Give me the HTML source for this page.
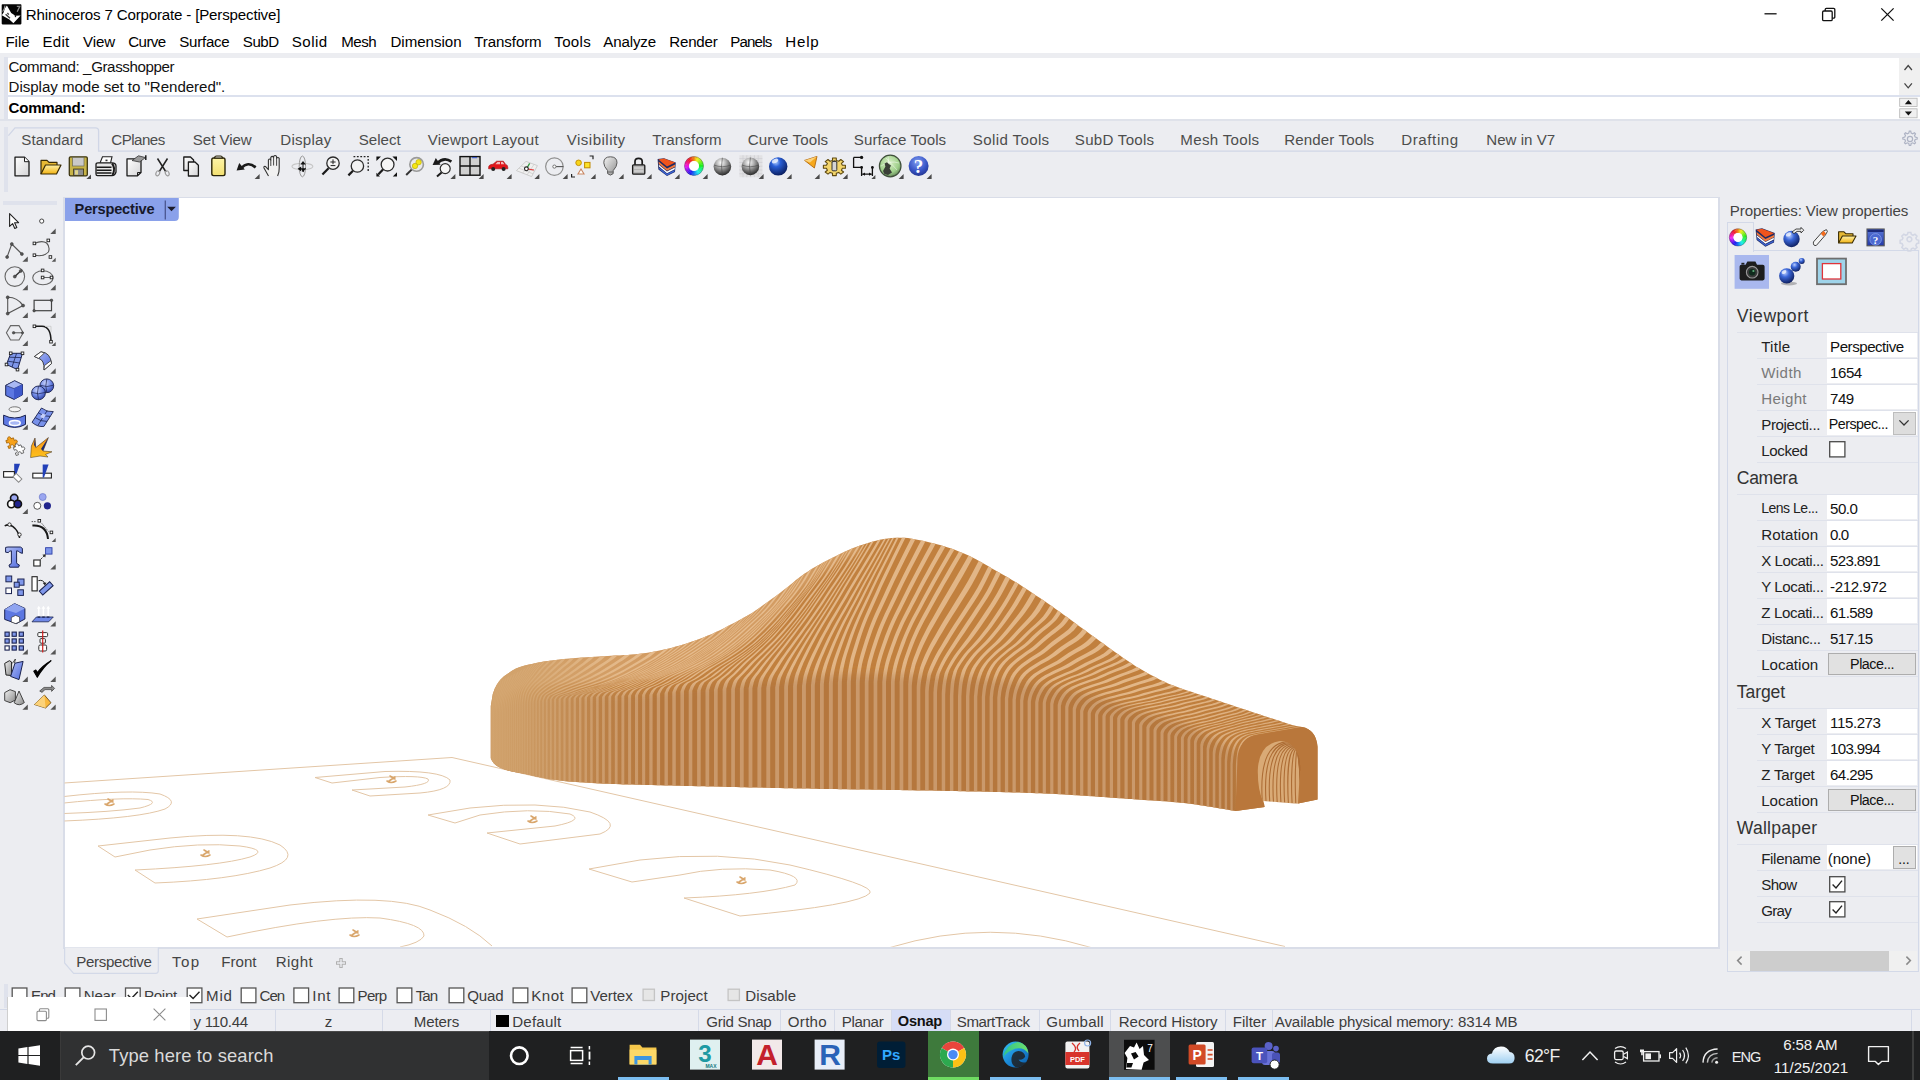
<!DOCTYPE html>
<html lang="en"><head><meta charset="utf-8"><title>Rhinoceros 7 Corporate - [Perspective]</title>
<style>
html,body{margin:0;padding:0;}
body{width:1920px;height:1080px;overflow:hidden;background:#ecedf1;font-family:"Liberation Sans",sans-serif;}
#root{position:relative;width:1920px;height:1080px;overflow:hidden;background:#ecedf1;}
.t{position:absolute;white-space:pre;display:block;}
.b{position:absolute;box-sizing:border-box;}
svg{position:absolute;overflow:visible;}

</style></head>
<body>
<div id="root">
<!-- part_top -->
<div class="b" style="left:0.0px;top:0.0px;width:1920.0px;height:52.5px;background:#fff;"></div>
<svg style="left:0;top:0" width="24" height="28" viewBox="0 0 24 28">
<rect x="1.7" y="4.2" width="19.7" height="20.2" rx="0.8" fill="#050505"/>
<path d="M6.9 5.4 L11.2 13 L15.4 15.8 L20.6 15.4 L13.4 23.2 L9.4 19.6 L1.8 15.2 L3.6 12.4 L4.8 8.6 Z" fill="#fff"/>
<path d="M5 5.6 Q4.6 9.4 2.6 11.6" fill="none" stroke="#9a9a9a" stroke-width="1.1"/>
<path d="M5.600 14.200 L10 18.200 M7.400 13 L8.800 14.600" fill="none" stroke="#3a3a3a" stroke-width="1.300"/>
<path d="M16.800 6.400 H19.800 L17.200 11.800" fill="none" stroke="#8a8a8a" stroke-width="1.300"/>
<path d="M14.600 14.600 L16.400 16.200 L15 17.400" fill="#050505"/></svg>
<span class="t" style="left:25.8px;top:7.4px;font-size:15.10px;line-height:15.10px;letter-spacing:-0.171px;color:#000;">Rhinoceros 7 Corporate - [Perspective]</span>
<svg style="left:1755px;top:0" width="165" height="30" viewBox="0 0 165 30" fill="none" stroke="#111" stroke-width="1.3">
<path d="M9.5 13.8 H21.6"/>
<rect x="67.6" y="11" width="9.6" height="9.6" rx="1.2"/>
<path d="M70.2 11 V9.6 a1.2 1.2 0 0 1 1.2 -1.2 H78.6 a1.2 1.2 0 0 1 1.2 1.2 V17 a1.2 1.2 0 0 1 -1.2 1.2 H77.2"/>
<path d="M126.3 8.4 L138.6 20.6 M138.6 8.4 L126.3 20.6"/>
</svg>
<span class="t" style="left:5.4px;top:34.4px;font-size:15.10px;line-height:15.10px;letter-spacing:-0.011px;color:#000;">File</span>
<span class="t" style="left:42.6px;top:34.4px;font-size:15.10px;line-height:15.10px;letter-spacing:0.193px;color:#000;">Edit</span>
<span class="t" style="left:83.0px;top:34.4px;font-size:15.10px;line-height:15.10px;letter-spacing:-0.086px;color:#000;">View</span>
<span class="t" style="left:128.3px;top:34.4px;font-size:15.10px;line-height:15.10px;letter-spacing:-0.595px;color:#000;">Curve</span>
<span class="t" style="left:179.3px;top:34.4px;font-size:15.10px;line-height:15.10px;letter-spacing:-0.273px;color:#000;">Surface</span>
<span class="t" style="left:242.8px;top:34.4px;font-size:15.10px;line-height:15.10px;letter-spacing:-0.458px;color:#000;">SubD</span>
<span class="t" style="left:291.8px;top:34.4px;font-size:15.10px;line-height:15.10px;letter-spacing:0.455px;color:#000;">Solid</span>
<span class="t" style="left:341.2px;top:34.4px;font-size:15.10px;line-height:15.10px;letter-spacing:-0.475px;color:#000;">Mesh</span>
<span class="t" style="left:390.4px;top:34.4px;font-size:15.10px;line-height:15.10px;letter-spacing:-0.005px;color:#000;">Dimension</span>
<span class="t" style="left:474.3px;top:34.4px;font-size:15.10px;line-height:15.10px;letter-spacing:-0.105px;color:#000;">Transform</span>
<span class="t" style="left:554.3px;top:34.4px;font-size:15.10px;line-height:15.10px;letter-spacing:0.287px;color:#000;">Tools</span>
<span class="t" style="left:603.3px;top:34.4px;font-size:15.10px;line-height:15.10px;letter-spacing:-0.137px;color:#000;">Analyze</span>
<span class="t" style="left:669.3px;top:34.4px;font-size:15.10px;line-height:15.10px;letter-spacing:-0.225px;color:#000;">Render</span>
<span class="t" style="left:730.3px;top:34.4px;font-size:15.10px;line-height:15.10px;letter-spacing:-0.854px;color:#000;">Panels</span>
<span class="t" style="left:785.3px;top:34.4px;font-size:15.10px;line-height:15.10px;letter-spacing:0.781px;color:#000;">Help</span>
<div class="b" style="left:3.5px;top:56.5px;width:4.0px;height:63.5px;background:#dfe2ec;"></div>
<div class="b" style="left:7.5px;top:57.5px;width:1891.5px;height:37.8px;background:#fff;"></div>
<div class="b" style="left:7.5px;top:95.2px;width:1912.5px;height:1.4px;background:#dce1ee;"></div>
<div class="b" style="left:7.5px;top:96.6px;width:1891.5px;height:22.6px;background:#fff;"></div>
<div class="b" style="left:1899.0px;top:57.5px;width:21.0px;height:37.8px;background:#f0f0f0;"></div>
<div class="b" style="left:1899.0px;top:96.6px;width:21.0px;height:22.6px;background:#fff;"></div>
<svg style="left:1899px;top:57px" width="21" height="63" viewBox="0 0 21 63" fill="none">
<path d="M5.5 13 L9.2 8.6 L12.9 13 M5.5 26.4 L9.2 30.8 L12.9 26.4" stroke="#444" stroke-width="1.3"/>
<rect x="0.7" y="41.2" width="17.4" height="8.2" fill="#f0f0f0" stroke="#b5b5b5" stroke-width="0.8"/>
<rect x="0.7" y="51.8" width="17.4" height="9" fill="#f0f0f0" stroke="#b5b5b5" stroke-width="0.8"/>
<path d="M5.8 47.2 L9.4 43 L13 47.2 Z M5.8 54.4 L13 54.4 L9.4 58.6 Z" fill="#111"/>
</svg>
<div class="b" style="left:0.0px;top:119.2px;width:1920.0px;height:2.2px;background:#dfe2ea;"></div>
<span class="t" style="left:8.6px;top:58.6px;font-size:15.10px;line-height:15.10px;letter-spacing:-0.387px;color:#111;">Command: _Grasshopper</span>
<span class="t" style="left:8.6px;top:78.8px;font-size:15.10px;line-height:15.10px;letter-spacing:-0.041px;color:#111;">Display mode set to "Rendered".</span>
<span class="t" style="left:8.6px;top:99.5px;font-size:15.10px;line-height:15.10px;letter-spacing:-0.279px;color:#000;font-weight:bold;">Command:</span>
<div class="b" style="left:3.5px;top:127.0px;width:4.0px;height:65.0px;background:#dfe2ec;"></div>
<svg style="left:0;top:120px" width="1920" height="36" viewBox="0 120 1920 36" fill="none">
<path d="M8.4 135.6 L15 127.9 H95.4 Q98.6 127.9 98.6 131 V151.1 H1920" stroke="#d0d6e6" stroke-width="1.3"/></svg>
<span class="t" style="left:21.3px;top:132.4px;font-size:15.10px;line-height:15.10px;letter-spacing:0.088px;color:#4d4d4d;">Standard</span>
<span class="t" style="left:111.3px;top:132.4px;font-size:15.10px;line-height:15.10px;letter-spacing:-0.529px;color:#4d4d4d;">CPlanes</span>
<span class="t" style="left:192.8px;top:132.4px;font-size:15.10px;line-height:15.10px;letter-spacing:-0.060px;color:#4d4d4d;">Set View</span>
<span class="t" style="left:280.3px;top:132.4px;font-size:15.10px;line-height:15.10px;letter-spacing:0.231px;color:#4d4d4d;">Display</span>
<span class="t" style="left:358.8px;top:132.4px;font-size:15.10px;line-height:15.10px;letter-spacing:-0.014px;color:#4d4d4d;">Select</span>
<span class="t" style="left:427.8px;top:132.4px;font-size:15.10px;line-height:15.10px;letter-spacing:0.206px;color:#4d4d4d;">Viewport Layout</span>
<span class="t" style="left:566.8px;top:132.4px;font-size:15.10px;line-height:15.10px;letter-spacing:0.459px;color:#4d4d4d;">Visibility</span>
<span class="t" style="left:652.3px;top:132.4px;font-size:15.10px;line-height:15.10px;letter-spacing:0.145px;color:#4d4d4d;">Transform</span>
<span class="t" style="left:747.8px;top:132.4px;font-size:15.10px;line-height:15.10px;letter-spacing:0.095px;color:#4d4d4d;">Curve Tools</span>
<span class="t" style="left:853.8px;top:132.4px;font-size:15.10px;line-height:15.10px;letter-spacing:0.099px;color:#4d4d4d;">Surface Tools</span>
<span class="t" style="left:972.8px;top:132.4px;font-size:15.10px;line-height:15.10px;letter-spacing:0.365px;color:#4d4d4d;">Solid Tools</span>
<span class="t" style="left:1074.8px;top:132.4px;font-size:15.10px;line-height:15.10px;letter-spacing:0.273px;color:#4d4d4d;">SubD Tools</span>
<span class="t" style="left:1180.3px;top:132.4px;font-size:15.10px;line-height:15.10px;letter-spacing:0.311px;color:#4d4d4d;">Mesh Tools</span>
<span class="t" style="left:1284.3px;top:132.4px;font-size:15.10px;line-height:15.10px;letter-spacing:0.109px;color:#4d4d4d;">Render Tools</span>
<span class="t" style="left:1401.3px;top:132.4px;font-size:15.10px;line-height:15.10px;letter-spacing:0.575px;color:#4d4d4d;">Drafting</span>
<span class="t" style="left:1486.3px;top:132.4px;font-size:15.10px;line-height:15.10px;letter-spacing:0.010px;color:#4d4d4d;">New in V7</span>
<svg style="left:1901px;top:130px" width="18" height="18" viewBox="0 0 18 18" fill="none" stroke="#aeb3c4" stroke-width="1.2">
<circle cx="9" cy="9" r="2.6"/><path d="M9 1.8 l1.4 0 l.5 2 l1.5 .7 l1.8 -1 l1 1 l-1 1.8 l.7 1.5 l2 .5 l0 1.4 l-2 .5 l-.7 1.5 l1 1.8 l-1 1 l-1.8 -1 l-1.5 .7 l-.5 2 l-1.4 0 l-.5 -2 l-1.5 -.7 l-1.8 1 l-1 -1 l1 -1.8 l-.7 -1.5 l-2 -.5 l0 -1.4 l2 -.5 l.7 -1.5 l-1 -1.8 l1 -1 l1.8 1 l1.5 -.7 z" transform="translate(-0.7 -0.7)"/></svg>
<svg style="left:0;top:0" width="960" height="196" viewBox="0 0 960 196">
<defs>
<linearGradient id="gPaper" x1="0" y1="0" x2="1" y2="1"><stop offset="0" stop-color="#ffffff"/><stop offset="1" stop-color="#d4d4d6"/></linearGradient>
<linearGradient id="gFold" x1="0" y1="0" x2="0" y2="1"><stop offset="0" stop-color="#fff2a8"/><stop offset="1" stop-color="#f2b211"/></linearGradient>
<linearGradient id="gNote" x1="0" y1="0" x2="0" y2="1"><stop offset="0" stop-color="#fdf4a6"/><stop offset="1" stop-color="#f3e071"/></linearGradient>
<radialGradient id="gGray" cx="0.42" cy="0.28" r="0.72"><stop offset="0" stop-color="#ffffff"/><stop offset="0.35" stop-color="#b9b9b9"/><stop offset="0.8" stop-color="#555"/><stop offset="1" stop-color="#2a2a2a"/></radialGradient>
<radialGradient id="gBlue" cx="0.38" cy="0.28" r="0.8"><stop offset="0" stop-color="#a9c8ff"/><stop offset="0.3" stop-color="#2a5fd6"/><stop offset="1" stop-color="#06154f"/></radialGradient>
<radialGradient id="gGreen" cx="0.45" cy="0.35" r="0.75"><stop offset="0" stop-color="#d9f0c8"/><stop offset="0.6" stop-color="#9fcf8a"/><stop offset="1" stop-color="#4c6b45"/></radialGradient>
<radialGradient id="gHelp" cx="0.45" cy="0.3" r="0.8"><stop offset="0" stop-color="#7f9df0"/><stop offset="0.55" stop-color="#3b57c8"/><stop offset="1" stop-color="#1b2a80"/></radialGradient>
<linearGradient id="gBulb" x1="0" y1="0" x2="1" y2="1"><stop offset="0" stop-color="#f4f4f4"/><stop offset="1" stop-color="#8d8d8d"/></linearGradient>
</defs>
<path d="M15 157.2 H24.5 L29 161.7 V175.8 H15 Z" fill="url(#gPaper)" stroke="#1a1a1a" stroke-width="1.3" stroke-linejoin="round"/><path d="M24.5 157.2 V161.7 H29" fill="#fff" stroke="#1a1a1a" stroke-width="1"/>
<path d="M41 174 V160.4 H47 L49 162.4 H57 V165" fill="#e7b934" stroke="#3a2c05" stroke-width="1.2" stroke-linejoin="round"/><path d="M41 174 L45.5 165 H61 L56.5 174 Z" fill="url(#gFold)" stroke="#3a2c05" stroke-width="1.2" stroke-linejoin="round"/>
<rect x="69.3" y="156.8" width="18" height="19" rx="1.2" fill="#c8b447" stroke="#3d3612" stroke-width="1.3"/><rect x="72.6" y="157.6" width="11.4" height="8.4" fill="#c9c9c9" stroke="#6b6b5a" stroke-width="0.7"/><rect x="73.6" y="169" width="10" height="6.4" fill="#8f8f8f" stroke="#3d3612" stroke-width="0.8"/><rect x="75" y="170.2" width="3" height="4.4" fill="#e0d58a"/>
<path d="M91.0 179.0 L86.4 179.0 L91.0 174.4 Z" fill="#4b4b4b"/>
<path d="M100 163 L102.5 156.8 H112 L110.5 163" fill="#fff" stroke="#222" stroke-width="1.1"/><path d="M96 164.5 Q96 162.8 98 162.8 H112 Q116 163 116 166 V172 Q115 175.6 112 175.6 H97.5 Q96 175.6 96 174 Z" fill="#e8e8e8" stroke="#1a1a1a" stroke-width="1.3"/><path d="M96.5 167.3 H111.5 M96.5 170.3 H111.5 M96.5 173 H111.5" stroke="#1a1a1a" stroke-width="1.5"/><path d="M112 163.5 Q116 168 112.5 175" fill="none" stroke="#1a1a1a" stroke-width="2"/><rect x="105.5" y="159.6" width="2" height="1.6" fill="#333"/>
<path d="M127 158.8 H141 V172.5 L137.5 175.8 H127 Z" fill="url(#gPaper)" stroke="#1a1a1a" stroke-width="1.3" stroke-linejoin="round"/><path d="M137.5 175.8 V172.5 H141" fill="none" stroke="#1a1a1a" stroke-width="1"/><path d="M132 160.5 L138.5 155.8 L145.5 157.6 L139.5 162 Z" fill="#9a9a9a" stroke="#333" stroke-width="0.8"/><path d="M145.8 155.2 V160" stroke="#111" stroke-width="1.4"/>
<path d="M157.5 158.5 L166 172 M167.5 158.5 L159 172" stroke="#222" stroke-width="1.5" fill="none"/><ellipse cx="157.8" cy="173.3" rx="1.8" ry="2.6" transform="rotate(25 157.8 173.3)" fill="none" stroke="#9a9a9a" stroke-width="1.1"/><ellipse cx="167.2" cy="173.3" rx="1.8" ry="2.6" transform="rotate(-25 167.2 173.3)" fill="none" stroke="#9a9a9a" stroke-width="1.1"/>
<path d="M183.8 157 H190.5 L193.6 160 V170.5 H183.8 Z" fill="url(#gPaper)" stroke="#1a1a1a" stroke-width="1.3" stroke-linejoin="round"/><path d="M188.4 162 H195 L198.4 165.2 V176 H188.4 Z" fill="url(#gPaper)" stroke="#1a1a1a" stroke-width="1.3" stroke-linejoin="round"/>
<rect x="211.8" y="158" width="13.2" height="17.6" rx="1.8" fill="url(#gNote)" stroke="#2a2508" stroke-width="1.4"/><path d="M214.6 158 Q214.6 156 216.6 156 H220.4 Q222.4 156 222.4 158 Z" fill="#ddd" stroke="#2a2508" stroke-width="1.2"/>
<path d="M241 168.5 Q248 160.5 255.6 167.5" fill="none" stroke="#1a1a1a" stroke-width="2.6"/><path d="M236.6 170.6 L239.2 163 L244.8 169.6 Z" fill="#1a1a1a"/>
<path d="M259.6 179.0 L254.6 179.0 L259.6 174.0 Z" fill="#4b4b4b"/>
<path d="M268.5 176 L264 168 Q263.3 165.8 265.6 166.6 L268.4 169.6 V160 Q269.5 158 270.8 160 V157.4 Q272.2 155.4 273.6 157.4 V156.4 Q275.2 154.6 276.6 156.6 V158.2 Q278 156.6 279.2 158.4 V168 Q279.4 172 277.6 176" fill="#f1f1f1" stroke="#333" stroke-width="1.1" stroke-linejoin="round"/><path d="M270.8 160 V166 M273.6 157.4 V165.5 M276.6 157.6 V165.8" stroke="#333" stroke-width="0.9"/>
<ellipse cx="302.4" cy="166.4" rx="10.4" ry="3.2" fill="none" stroke="#c7c7c7" stroke-width="1.1"/><ellipse cx="302.4" cy="166.4" rx="3.2" ry="10.4" fill="none" stroke="#999" stroke-width="1"/><path d="M303 161 l2.8 3.4 h-5.4z M297.6 168.8 l3.6 -2.4 v5z M303.2 172.2 l-2 -3.4 h4.2 z" fill="#111"/><path d="M303 163 V172 M299 168.8 H306" stroke="#111" stroke-width="1"/>
<circle cx="333" cy="163.2" r="6.2" fill="#f4f4f4" stroke="#2b2b2b" stroke-width="1.3"/><path d="M328.6 168.2 L322.4 174.6" stroke="#1a1a1a" stroke-width="2.2"/><path d="M330.4 162 H335.6 M333 159.4 V164.2 M330.6 165.6 H335.4" stroke="#222" stroke-width="1"/>
<path d="M353.5 156.6 H368.2 V171" fill="none" stroke="#222" stroke-width="1.3" stroke-dasharray="1.8 1.6"/><circle cx="357.4" cy="166" r="6.2" fill="#f2f2f2" stroke="#2b2b2b" stroke-width="1.3"/><path d="M353 170.8 L348.4 175.4" stroke="#1a1a1a" stroke-width="2.2"/>
<circle cx="387.6" cy="164.6" r="6.4" fill="#f6f6f6" stroke="#2b2b2b" stroke-width="1.3"/><path d="M383 169.4 L378.2 174.4" stroke="#1a1a1a" stroke-width="2.2"/><path d="M376.4 156.4 h4.6 l-4.6 4.6z M397 156.4 v4.6 l-4.6 -4.6z M376.4 176.4 v-3.6 l3.6 3.6z M397 176.4 h-4.2 l4.2 -4.2z" fill="#111"/>
<circle cx="416.6" cy="164.4" r="6.8" fill="#e9e9e9" stroke="#9a9a9a" stroke-width="1.6"/><circle cx="418.6" cy="162.2" r="2.7" fill="#f5e616" stroke="#b5a800" stroke-width="0.6"/><circle cx="415" cy="166" r="2.7" fill="#f5e616" stroke="#b5a800" stroke-width="0.6"/><path d="M411.6 169.6 L406.2 175" stroke="#333" stroke-width="2"/>
<path d="M437 163.4 Q444 156.4 451.4 161.6" fill="none" stroke="#1a1a1a" stroke-width="2.6"/><path d="M432.6 165 L435.8 158 L440.6 164.8 Z" fill="#1a1a1a"/><circle cx="445.2" cy="168.6" r="5" fill="#f6f6f6" stroke="#2b2b2b" stroke-width="1.2"/><path d="M441.6 172.4 L437 176.6" stroke="#1a1a1a" stroke-width="2"/>
<path d="M455.4 179.0 L450.4 179.0 L455.4 174.0 Z" fill="#4b4b4b"/>
<rect x="460" y="156.6" width="20" height="18.6" fill="#d0d0d0" stroke="#111" stroke-width="1.4"/><path d="M470 156.6 V175.2 M460 166 H480" stroke="#111" stroke-width="1.4"/><rect x="472" y="157.2" width="5" height="1" fill="#2d4fd0"/>
<path d="M483.6 179.0 L478.6 179.0 L483.6 174.0 Z" fill="#4b4b4b"/>
<path d="M488.6 167.6 Q488.4 164.6 493 164.2 L496.6 161.2 H503.4 L505.6 164.4 Q507.8 164.8 507.8 167.4 V168.8 H488.6 Z" fill="#e0161b" stroke="#a00d10" stroke-width="0.6"/><circle cx="493.2" cy="169" r="2" fill="#222"/><circle cx="503.6" cy="169" r="2" fill="#222"/><path d="M497.4 162 H500 V164.2 H495.4 Z M501 162 H502.9 L504.3 164.2 H501Z" fill="#f6b7b9"/>
<path d="M511.6 179.0 L506.6 179.0 L511.6 174.0 Z" fill="#4b4b4b"/>
<path d="M516.4 170.6 L526 161.4 L537.4 165.6 L531.6 176.6 Z" fill="#f0f0f0" stroke="#c4c4c4" stroke-width="0.8"/><path d="M521.2 166 L534.5 171.2 M519 168.2 L533 173.8 M522.6 173.2 L530.4 163 M527 175 L534 164.4" stroke="#c9c9c9" stroke-width="0.7"/><path d="M526.6 168.8 L534 170" stroke="#e23a3a" stroke-width="1.2"/><path d="M526.6 168.8 L529.6 163.4" stroke="#2e9a3e" stroke-width="1.2"/><circle cx="526.4" cy="168.8" r="1.9" fill="#fff" stroke="#222" stroke-width="1.1"/>
<path d="M539.4 179.0 L534.4 179.0 L539.4 174.0 Z" fill="#4b4b4b"/>
<circle cx="554.4" cy="166.6" r="8.8" fill="none" stroke="#8f8f8f" stroke-width="1.2"/><path d="M555.6 166.6 H563.4" stroke="#555" stroke-width="1.1"/><circle cx="554.4" cy="166.6" r="1.6" fill="#fff" stroke="#666" stroke-width="0.9"/>
<path d="M567.6 179.0 L562.6 179.0 L567.6 174.0 Z" fill="#4b4b4b"/>
<circle cx="578.6" cy="162.8" r="2.8" fill="#f7d51a" stroke="#c08a00" stroke-width="0.9"/><rect x="584.6" y="162.4" width="5.4" height="5.4" fill="#fbe22a" stroke="#c08a00" stroke-width="1"/><path d="M581 169 L584 174 H578 Z" fill="#fff" stroke="#c98763" stroke-width="1.1"/><path d="M589.6 156 H593 V159.2 M575 177 H571.6 V174" fill="none" stroke="#222" stroke-width="1.2"/>
<path d="M595.6 179.0 L590.6 179.0 L595.6 174.0 Z" fill="#4b4b4b"/>
<path d="M607.6 170.6 Q603.8 166.4 603.8 162.8 Q603.8 156.8 610.4 156.8 Q617 156.8 617 162.8 Q617 166.4 613.2 170.6 V173.6 Q610.4 176.6 607.6 173.6 Z" fill="url(#gBulb)" stroke="#5a5a5a" stroke-width="1"/><path d="M607.8 172 H613" stroke="#555" stroke-width="0.8"/>
<path d="M623.6 179.0 L618.6 179.0 L623.6 174.0 Z" fill="#4b4b4b"/>
<path d="M635 165 V161.6 Q635 158.4 638.6 158.4 Q642.2 158.4 642.2 161.6 V165" fill="none" stroke="#1a1a1a" stroke-width="1.7"/><rect x="632.6" y="164.8" width="12.2" height="9.4" rx="1" fill="#b5b5b5" stroke="#1a1a1a" stroke-width="1.3"/><path d="M634 168 H643.4 M634 171 H643.4" stroke="#e6e6e6" stroke-width="0.9"/>
<path d="M651.6 179.0 L646.6 179.0 L651.6 174.0 Z" fill="#4b4b4b"/>
<path d="M657.6 159 L664 158.2 L675.8 162.4 L675 172 L667 176 L658.4 169.6 Z" fill="#1f2a63" /><path d="M658.4 159.4 L664 158.6 L675.2 162.6 L667 166.4 Z" fill="#f0541c"/><path d="M658.6 161.6 L667 168.4 L675 164.6 V166.8 L667 170.8 L658.8 164 Z" fill="#f37a3c"/><path d="M658.8 164.8 L667 171.4 L674.8 167.4 V169.2 L667 173.2 L659 166.6 Z" fill="#fff"/><path d="M659 167.4 L667 173.8 L674.6 170 V171.6 L667 175.4 L659.2 169.2Z" fill="#3d66d6"/>
<path d="M679.6 179.0 L674.6 179.0 L679.6 174.0 Z" fill="#4b4b4b"/>
<path d="M693.81 156.50 A9.50 9.50 0 0 1 695.84 156.68 L694.95 161.19 A4.90 4.90 0 0 0 693.90 161.10 Z" fill="hsl(37,88%,52%)"/><path d="M695.46 156.61 A9.50 9.50 0 0 1 697.43 157.14 L695.77 161.43 A4.90 4.90 0 0 0 694.75 161.16 Z" fill="hsl(47,88%,52%)"/><path d="M697.07 157.01 A9.50 9.50 0 0 1 698.91 157.87 L696.53 161.81 A4.90 4.90 0 0 0 695.58 161.36 Z" fill="hsl(57,88%,52%)"/><path d="M698.58 157.68 A9.50 9.50 0 0 1 700.25 158.85 L697.22 162.31 A4.90 4.90 0 0 0 696.36 161.71 Z" fill="hsl(67,88%,52%)"/><path d="M699.96 158.60 A9.50 9.50 0 0 1 701.40 160.04 L697.82 162.93 A4.90 4.90 0 0 0 697.07 162.18 Z" fill="hsl(77,88%,52%)"/><path d="M701.15 159.75 A9.50 9.50 0 0 1 702.32 161.42 L698.29 163.64 A4.90 4.90 0 0 0 697.69 162.78 Z" fill="hsl(87,88%,52%)"/><path d="M702.13 161.09 A9.50 9.50 0 0 1 702.99 162.93 L698.64 164.42 A4.90 4.90 0 0 0 698.19 163.47 Z" fill="hsl(97,88%,52%)"/><path d="M702.86 162.57 A9.50 9.50 0 0 1 703.39 164.54 L698.84 165.25 A4.90 4.90 0 0 0 698.57 164.23 Z" fill="hsl(107,88%,52%)"/><path d="M703.32 164.16 A9.50 9.50 0 0 1 703.50 166.19 L698.90 166.10 A4.90 4.90 0 0 0 698.81 165.05 Z" fill="hsl(117,88%,52%)"/><path d="M703.50 165.81 A9.50 9.50 0 0 1 703.32 167.84 L698.81 166.95 A4.90 4.90 0 0 0 698.90 165.90 Z" fill="hsl(127,88%,52%)"/><path d="M703.39 167.46 A9.50 9.50 0 0 1 702.86 169.43 L698.57 167.77 A4.90 4.90 0 0 0 698.84 166.75 Z" fill="hsl(137,88%,52%)"/><path d="M702.99 169.07 A9.50 9.50 0 0 1 702.13 170.91 L698.19 168.53 A4.90 4.90 0 0 0 698.64 167.58 Z" fill="hsl(147,88%,52%)"/><path d="M702.32 170.58 A9.50 9.50 0 0 1 701.15 172.25 L697.69 169.22 A4.90 4.90 0 0 0 698.29 168.36 Z" fill="hsl(157,88%,52%)"/><path d="M701.40 171.96 A9.50 9.50 0 0 1 699.96 173.40 L697.07 169.82 A4.90 4.90 0 0 0 697.82 169.07 Z" fill="hsl(167,88%,52%)"/><path d="M700.25 173.15 A9.50 9.50 0 0 1 698.58 174.32 L696.36 170.29 A4.90 4.90 0 0 0 697.22 169.69 Z" fill="hsl(177,88%,52%)"/><path d="M698.91 174.13 A9.50 9.50 0 0 1 697.07 174.99 L695.58 170.64 A4.90 4.90 0 0 0 696.53 170.19 Z" fill="hsl(187,88%,52%)"/><path d="M697.43 174.86 A9.50 9.50 0 0 1 695.46 175.39 L694.75 170.84 A4.90 4.90 0 0 0 695.77 170.57 Z" fill="hsl(197,88%,52%)"/><path d="M695.84 175.32 A9.50 9.50 0 0 1 693.81 175.50 L693.90 170.90 A4.90 4.90 0 0 0 694.95 170.81 Z" fill="hsl(207,88%,52%)"/><path d="M694.19 175.50 A9.50 9.50 0 0 1 692.16 175.32 L693.05 170.81 A4.90 4.90 0 0 0 694.10 170.90 Z" fill="hsl(217,88%,52%)"/><path d="M692.54 175.39 A9.50 9.50 0 0 1 690.57 174.86 L692.23 170.57 A4.90 4.90 0 0 0 693.25 170.84 Z" fill="hsl(227,88%,52%)"/><path d="M690.93 174.99 A9.50 9.50 0 0 1 689.09 174.13 L691.47 170.19 A4.90 4.90 0 0 0 692.42 170.64 Z" fill="hsl(237,88%,52%)"/><path d="M689.42 174.32 A9.50 9.50 0 0 1 687.75 173.15 L690.78 169.69 A4.90 4.90 0 0 0 691.64 170.29 Z" fill="hsl(247,88%,52%)"/><path d="M688.04 173.40 A9.50 9.50 0 0 1 686.60 171.96 L690.18 169.07 A4.90 4.90 0 0 0 690.93 169.82 Z" fill="hsl(257,88%,52%)"/><path d="M686.85 172.25 A9.50 9.50 0 0 1 685.68 170.58 L689.71 168.36 A4.90 4.90 0 0 0 690.31 169.22 Z" fill="hsl(267,88%,52%)"/><path d="M685.87 170.91 A9.50 9.50 0 0 1 685.01 169.07 L689.36 167.58 A4.90 4.90 0 0 0 689.81 168.53 Z" fill="hsl(277,88%,52%)"/><path d="M685.14 169.43 A9.50 9.50 0 0 1 684.61 167.46 L689.16 166.75 A4.90 4.90 0 0 0 689.43 167.77 Z" fill="hsl(287,88%,52%)"/><path d="M684.68 167.84 A9.50 9.50 0 0 1 684.50 165.81 L689.10 165.90 A4.90 4.90 0 0 0 689.19 166.95 Z" fill="hsl(297,88%,52%)"/><path d="M684.50 166.19 A9.50 9.50 0 0 1 684.68 164.16 L689.19 165.05 A4.90 4.90 0 0 0 689.10 166.10 Z" fill="hsl(307,88%,52%)"/><path d="M684.61 164.54 A9.50 9.50 0 0 1 685.14 162.57 L689.43 164.23 A4.90 4.90 0 0 0 689.16 165.25 Z" fill="hsl(317,88%,52%)"/><path d="M685.01 162.93 A9.50 9.50 0 0 1 685.87 161.09 L689.81 163.47 A4.90 4.90 0 0 0 689.36 164.42 Z" fill="hsl(327,88%,52%)"/><path d="M685.68 161.42 A9.50 9.50 0 0 1 686.85 159.75 L690.31 162.78 A4.90 4.90 0 0 0 689.71 163.64 Z" fill="hsl(337,88%,52%)"/><path d="M686.60 160.04 A9.50 9.50 0 0 1 688.04 158.60 L690.93 162.18 A4.90 4.90 0 0 0 690.18 162.93 Z" fill="hsl(347,88%,52%)"/><path d="M687.75 158.85 A9.50 9.50 0 0 1 689.42 157.68 L691.64 161.71 A4.90 4.90 0 0 0 690.78 162.31 Z" fill="hsl(357,88%,52%)"/><path d="M689.09 157.87 A9.50 9.50 0 0 1 690.93 157.01 L692.42 161.36 A4.90 4.90 0 0 0 691.47 161.81 Z" fill="hsl(7,88%,52%)"/><path d="M690.57 157.14 A9.50 9.50 0 0 1 692.54 156.61 L693.25 161.16 A4.90 4.90 0 0 0 692.23 161.43 Z" fill="hsl(17,88%,52%)"/><path d="M692.16 156.68 A9.50 9.50 0 0 1 694.19 156.50 L694.10 161.10 A4.90 4.90 0 0 0 693.05 161.19 Z" fill="hsl(27,88%,52%)"/><circle cx="694.00" cy="166.00" r="4.90" fill="#fff"/><circle cx="694.00" cy="166.00" r="9.50" fill="none" stroke="#2a2040" stroke-opacity=".4" stroke-width="0.8"/>
<path d="M707.6 179.0 L702.6 179.0 L707.6 174.0 Z" fill="#4b4b4b"/>
<circle cx="722.4" cy="166.6" r="8.8" fill="url(#gGray)"/><path d="M722.4 157.8 Q720.6 166 722.4 175.4 M713.8 165 Q722.4 168.4 731 165" fill="none" stroke="#444" stroke-width="0.8" stroke-opacity=".7"/>
<rect x="739.4" y="155.2" width="23" height="22" fill="#e2e2e4"/><path d="M739.4 158.6 H762.4 M739.4 162.4 H762.4 M739.4 166.2 H762.4 M739.4 170 H762.4 M739.4 173.8 H762.4 M743 155.2 V177.2 M746.8 155.2 V177.2 M750.6 155.2 V177.2 M754.4 155.2 V177.2 M758.2 155.2 V177.2" stroke="#cfcfd2" stroke-width="0.7"/><circle cx="750.4" cy="166.4" r="8.8" fill="url(#gGray)"/><path d="M750.4 157.6 Q748.6 166 750.4 175.2 M741.8 165 Q750.4 168.4 759 165" fill="none" stroke="#444" stroke-width="0.8" stroke-opacity=".7"/>
<path d="M763.6 179.0 L758.6 179.0 L763.6 174.0 Z" fill="#4b4b4b"/>
<circle cx="778.2" cy="166.4" r="9.2" fill="url(#gBlue)"/><ellipse cx="775" cy="161" rx="3.4" ry="2" fill="#fff" fill-opacity=".75" transform="rotate(-25 775 161)"/>
<path d="M791.6 179.0 L786.6 179.0 L791.6 174.0 Z" fill="#4b4b4b"/>
<path d="M804.6 160.4 L817 156.4 L814.4 168 Z" fill="#f6a81c" stroke="#b36a10" stroke-width="0.9" stroke-linejoin="round"/><path d="M804.6 160.4 L817 156.4 L810 162.6Z" fill="#fbd27a"/>
<path d="M819.6 179.0 L814.6 179.0 L819.6 174.0 Z" fill="#4b4b4b"/>
<path d="M832.5 158.0 L836.3 158.0 L836.3 160.4 L838.7 161.2 L840.8 159.5 L843.6 161.6 L841.4 163.4 L842.4 165.3 L845.4 165.3 L845.4 168.3 L842.4 168.3 L841.4 170.2 L843.6 172.0 L840.8 174.1 L838.7 172.4 L836.3 173.2 L836.3 175.6 L832.5 175.6 L832.5 173.2 L830.1 172.4 L828.0 174.1 L825.2 172.0 L827.4 170.2 L826.4 168.3 L823.4 168.3 L823.4 165.3 L826.4 165.3 L827.4 163.4 L825.2 161.6 L828.0 159.5 L830.1 161.2 L832.5 160.4 Z" fill="#f3d56b" stroke="#5f4a10" stroke-width="1.1" stroke-linejoin="round"/><rect x="832" y="161.4" width="4.8" height="9.4" rx="1" fill="#d4d4d4" stroke="#333" stroke-width="1"/><path d="M832 162.6 Q834.4 159 836.800 162.600" fill="none" stroke="#333" stroke-width="1"/>
<path d="M847.6 179.0 L842.6 179.0 L847.6 174.0 Z" fill="#4b4b4b"/>
<path d="M853.6 157.4 H861.6 M853.6 157.4 V167.4 H861.6 V176 M872.4 167.4 V176 M862.4 174.2 H871.6" fill="none" stroke="#111" stroke-width="1.3"/><circle cx="861.6" cy="157.4" r="1.6" fill="#111"/><circle cx="861.6" cy="167.4" r="1.4" fill="#111"/><circle cx="872.4" cy="167.4" r="1.4" fill="#111"/><path d="M862.4 174.2 l2.6 -1.6 v3.2z M871.6 174.2 l-2.600 -1.600 v3.200z" fill="#111"/>
<path d="M875.4 179.0 L871.4 179.0 L875.4 175.0 Z" fill="#4b4b4b"/>
<circle cx="890.2" cy="166" r="10.8" fill="url(#gGreen)" stroke="#3f4f3a" stroke-width="1.2"/><path d="M886 158 L897 170 M881 166 Q890 160 899 163 M884 174 Q890 166 888 156" fill="none" stroke="#fff" stroke-opacity=".55" stroke-width="0.8"/><path d="M883 171 L885.4 166.6 L884.6 163.6 L887 162.2 L888.8 164 L891 165.6 L889.6 168.6 L892 172.4 L888 175 L884.4 174 Z" fill="#3a3f37"/>
<path d="M903.6 179.0 L898.6 179.0 L903.6 174.0 Z" fill="#4b4b4b"/>
<circle cx="918.6" cy="166" r="10" fill="url(#gHelp)"/><text x="918.6" y="172.6" text-anchor="middle" font-family="Liberation Serif, serif" font-weight="bold" font-size="19" fill="#fff">?</text>
<path d="M931.6 179.0 L926.6 179.0 L931.6 174.0 Z" fill="#4b4b4b"/>
</svg>
<!-- part_left -->
<div class="b" style="left:3.0px;top:201.3px;width:54.0px;height:3.6px;background:#dfe2ec;"></div>
<svg style="left:0;top:0" width="64" height="720" viewBox="0 0 64 720">
<defs>
<linearGradient id="lBlue" x1="0" y1="0" x2="1" y2="1"><stop offset="0" stop-color="#aebcf5"/><stop offset="1" stop-color="#4f6ade"/></linearGradient>
<radialGradient id="lSph" cx="0.4" cy="0.3" r="0.8"><stop offset="0" stop-color="#c9d3fa"/><stop offset="0.5" stop-color="#6f88e6"/><stop offset="1" stop-color="#25379c"/></radialGradient>
<linearGradient id="lOr" x1="0" y1="0" x2="0" y2="1"><stop offset="0" stop-color="#f7931a"/><stop offset="1" stop-color="#fdc21c"/></linearGradient>
<linearGradient id="lGr" x1="0" y1="0" x2="1" y2="1"><stop offset="0" stop-color="#f2f2f2"/><stop offset="1" stop-color="#8a8a8a"/></linearGradient>
</defs>
<path d="M9.6 213.6 V226.4 L12.6 223.6 L14.8 228.4 L16.8 227.4 L14.6 222.8 L18.6 222.6 Z" fill="#fff" stroke="#222" stroke-width="1.1" stroke-linejoin="round"/>
<circle cx="41.7" cy="221.1" r="2.1" fill="#fff" stroke="#444" stroke-width="1"/>
<path d="M55.7 233.9 L50.3 233.9 L55.7 228.5 Z" fill="#555"/>
<path d="M7.1 257 L11.8 244 L21.9 254" fill="none" stroke="#555" stroke-width="1.1"/><circle cx="7.1" cy="257.0" r="1.5" fill="#555" stroke="#333" stroke-width="0.5"/><circle cx="11.8" cy="244.0" r="1.5" fill="#555" stroke="#333" stroke-width="0.5"/><circle cx="21.9" cy="254.0" r="1.5" fill="#555" stroke="#333" stroke-width="0.5"/>
<path d="M27.8 261.8 L22.4 261.8 L27.8 256.4 Z" fill="#555"/>
<path d="M34.4 243.4 Q42 240 46.6 243 Q50.4 247 48.4 252 Q44 257 34.4 255.2" fill="none" stroke="#555" stroke-width="1.1"/><rect x="33.1" y="242.1" width="2.6" height="2.6" fill="#fff" stroke="#222" stroke-width="0.9"/><rect x="47.0" y="239.1" width="2.6" height="2.6" fill="#fff" stroke="#222" stroke-width="0.9"/><rect x="33.1" y="253.9" width="2.6" height="2.6" fill="#fff" stroke="#222" stroke-width="0.9"/><rect x="49.1" y="255.7" width="2.6" height="2.6" fill="#fff" stroke="#222" stroke-width="0.9"/>
<path d="M55.7 261.8 L51.7 261.8 L55.7 257.8 Z" fill="#555"/>
<circle cx="14.8" cy="276.6" r="9.8" fill="none" stroke="#666" stroke-width="1.1"/><path d="M14.8 276.6 L20.7 270.9" stroke="#333" stroke-width="1.4"/><circle cx="14.8" cy="276.6" r="1.5" fill="#555" stroke="#333" stroke-width="0.5"/><circle cx="20.7" cy="270.9" r="1.5" fill="#555" stroke="#333" stroke-width="0.5"/>
<path d="M27.8 290.2 L22.4 290.2 L27.8 284.8 Z" fill="#555"/>
<ellipse cx="42.9" cy="277.8" rx="10.2" ry="7" fill="none" stroke="#666" stroke-width="1.1"/><path d="M42.6 277.5 H51.5" stroke="#555" stroke-width="0.9"/><rect x="41.3" y="269.1" width="2.6" height="2.6" fill="#fff" stroke="#222" stroke-width="0.9"/><rect x="41.3" y="276.2" width="2.6" height="2.6" fill="#fff" stroke="#222" stroke-width="0.9"/><rect x="50.2" y="276.2" width="2.6" height="2.6" fill="#fff" stroke="#222" stroke-width="0.9"/>
<path d="M55.7 290.2 L50.3 290.2 L55.7 284.8 Z" fill="#555"/>
<path d="M7.7 297.3 V313.6 L23.1 305.6 Q17 297 7.7 297.3" fill="none" stroke="#555" stroke-width="1.1"/><circle cx="7.7" cy="297.3" r="1.5" fill="#555" stroke="#333" stroke-width="0.5"/><circle cx="7.7" cy="313.6" r="1.5" fill="#555" stroke="#333" stroke-width="0.5"/><circle cx="23.1" cy="305.6" r="1.5" fill="#555" stroke="#333" stroke-width="0.5"/>
<path d="M27.8 318.0 L22.4 318.0 L27.8 312.6 Z" fill="#555"/>
<rect x="34.1" y="300.3" width="17.4" height="10.4" fill="none" stroke="#444" stroke-width="1.2"/><circle cx="51.5" cy="300.3" r="1.3" fill="#555" stroke="#333" stroke-width="0.5"/><circle cx="34.1" cy="310.7" r="1.3" fill="#555" stroke="#333" stroke-width="0.5"/>
<path d="M55.7 318.0 L50.3 318.0 L55.7 312.6 Z" fill="#555"/>
<path d="M6.4 332.8 L10.6 325.6 H19 L23.2 332.8 L19 340 H10.6 Z" fill="none" stroke="#666" stroke-width="1.1"/><path d="M13.6 332.8 H22.4" stroke="#555" stroke-width="1"/><circle cx="13.6" cy="332.8" r="1.3" fill="#555" stroke="#333" stroke-width="0.5"/><circle cx="22.4" cy="332.8" r="1.1" fill="#555" stroke="#333" stroke-width="0.5"/>
<path d="M27.8 345.9 L22.4 345.9 L27.8 340.5 Z" fill="#555"/>
<path d="M34.4 326.3 H42 Q51 326.6 51 341.7" fill="none" stroke="#1a1a1a" stroke-width="1.5"/><path d="M45 326.3 H51 V332" fill="none" stroke="#c8c8c8" stroke-width="0.8"/><rect x="33.1" y="325.0" width="2.6" height="2.6" fill="#fff" stroke="#222" stroke-width="0.9"/><rect x="49.7" y="340.4" width="2.6" height="2.6" fill="#fff" stroke="#222" stroke-width="0.9"/>
<path d="M55.7 345.9 L51.7 345.9 L55.7 341.9 Z" fill="#555"/>
<path d="M10.7 353.3 H22.5 L17.5 369.6 L6.5 364.5 Z" fill="#7f97ea" stroke="#1b2350" stroke-width="1"/><path d="M16.6 353.3 L12 367 M9.3 357.2 L21.2 357.6 M7.8 361.2 L19.6 363" stroke="#1b2350" stroke-width="0.8" fill="none"/><rect x="9.4" y="352.0" width="2.6" height="2.6" fill="#fff" stroke="#222" stroke-width="0.9"/><rect x="21.2" y="352.0" width="2.6" height="2.6" fill="#fff" stroke="#222" stroke-width="0.9"/><rect x="5.2" y="363.2" width="2.6" height="2.6" fill="#fff" stroke="#222" stroke-width="0.9"/><rect x="16.2" y="368.3" width="2.6" height="2.6" fill="#fff" stroke="#222" stroke-width="0.9"/>
<path d="M27.8 373.7 L22.4 373.7 L27.8 368.3 Z" fill="#555"/>
<path d="M34.4 356.5 L41 351.8 Q50.6 352.6 51.5 363.6 L44 370 Q44.6 360 38.6 358.4 Z" fill="url(#lBlue)" stroke="#333" stroke-width="0.9" stroke-linejoin="round"/><path d="M34.4 356.5 L41 351.8 L44.4 353 L38.6 358.4 Z M44 370 L51.5 363.6 L51 360.6 L44.4 365.6Z" fill="#fff" stroke="#333" stroke-width="0.8" stroke-linejoin="round"/>
<path d="M55.7 373.7 L50.3 373.7 L55.7 368.3 Z" fill="#555"/>
<path d="M5.7 385.4 L14.6 380.8 L22.5 384.6 V394.8 L14 399.4 L5.7 395.4 Z" fill="#5c77e2" stroke="#1b2350" stroke-width="1" stroke-linejoin="round"/><path d="M5.7 385.4 L14.6 380.8 L22.5 384.6 L14 388.6 Z" fill="#a9b8f4" stroke="#1b2350" stroke-width="0.6"/><path d="M14 388.600 V399.400 L22.5 394.800 V384.600Z" fill="#3f59cc"/>
<path d="M27.8 402.0 L22.4 402.0 L27.8 396.6 Z" fill="#555"/>
<circle cx="46.8" cy="385.8" r="6.9" fill="url(#lSph)" stroke="#1b2350" stroke-width="0.9"/><circle cx="38.5" cy="392.9" r="6.9" fill="url(#lSph)" stroke="#1b2350" stroke-width="0.9"/><path d="M38.500 386 Q36.4 392.9 38.500 399.800 M31.6 392.4 Q38.500 395.2 45.400 392.400 M46.800 379 Q44.8 385.800 46.800 392.600 M40 385.200 Q46.800 388 53.600 385.200" fill="none" stroke="#1b2350" stroke-width="0.7"/>
<path d="M55.7 402.0 L50.3 402.0 L55.7 396.6 Z" fill="#555"/>
<ellipse cx="14.8" cy="409.3" rx="5.8" ry="2.5" fill="#f4f4f4" stroke="#777" stroke-width="1"/><path d="M3.6 415.2 Q14.8 420.8 25.5 415.2 V424.4 Q14.8 430.4 3.600 424.400 Z" fill="#5f7ae4" stroke="#1b2350" stroke-width="1" stroke-linejoin="round"/><ellipse cx="14.8" cy="422.9" rx="5.4" ry="2.5" fill="#a9b8f4" stroke="#fff" stroke-width="1.5"/>
<path d="M27.8 429.8 L22.4 429.8 L27.8 424.4 Z" fill="#555"/>
<path d="M41.5 408 Q47 412.400 53.3 411.6 L43.9 426.4 Q38 427.4 32 422.3 Z" fill="#7891ea" stroke="#1b2350" stroke-width="0.9" stroke-linejoin="round"/><path d="M38.3 412.8 Q44 417 50.200 416.400 M35.2 417.600 Q41 421.800 47 421.400 M47.300 410.400 L38 425.200" fill="none" stroke="#1b2350" stroke-width="0.8"/><path d="M42.5 413.400 L46 414.800 L43.6 418.6 L40.200 417 Z" fill="#c5cff8"/>
<path d="M55.7 429.8 L50.3 429.8 L55.7 424.4 Z" fill="#555"/>
<path d="M7 439 h2.400 a1.700 1.700 0 1 1 3 0 h2.600 v2.800 a1.700 1.700 0 1 1 0 3 v2.600 h-2.600 a1.700 1.700 0 1 0 -3 0 h-2.400 v-2.600 a1.700 1.700 0 1 0 0 -3 z" fill="#f7a21b" stroke="#a56408" stroke-width="0.8" transform="rotate(-20 11 443)"/><path d="M14.5 446 h2.400 a1.700 1.700 0 1 1 3 0 h2.600 v2.800 a1.700 1.700 0 1 1 0 3 v2.600 h-2.600 a1.700 1.700 0 1 0 -3 0 h-2.400 v-2.600 a1.700 1.700 0 1 0 0 -3 z" fill="#fff" stroke="#555" stroke-width="0.8" transform="rotate(-20 18.500 450)"/>
<path d="M30.600 457.6 L31.400 446 L35 438 L35.800 447.600 L48.400 437.600 L43 451 L52 451.800 L45.600 454.400 L48 457 L40 456 Z" fill="url(#lOr)" stroke="#3a2a10" stroke-width="0.5"/><path d="M35 438 L35.800 447.600 L34 445 Z M48.400 437.600 L43 451 L41 449 Z" fill="#1e2a6e"/>
<path d="M14.2 463.8 H20 L15.6 476.600 L14.200 476.600 Z" fill="#2240b8"/><rect x="3.6" y="471.6" width="10.800" height="5.600" fill="#fff" stroke="#222" stroke-width="1.1"/><rect x="0" y="0" width="8" height="4.600" fill="#fff" stroke="#888" stroke-width="1" transform="translate(16.200 473.400) rotate(45)"/>
<rect x="32.8" y="473.2" width="18.600" height="4.800" fill="#fff" stroke="#222" stroke-width="1.1"/><path d="M42.7 464.4 H48.6 L44 477.400 L42.700 477.400 Z" fill="#2240b8"/>
<circle cx="14.2" cy="498.1" r="3.700" fill="#9aa6f0" stroke="#111" stroke-width="1.6"/><circle cx="11.3" cy="504" r="3.700" fill="#fff" stroke="#111" stroke-width="1.6"/><circle cx="17.8" cy="504" r="3.700" fill="#20248c" stroke="#111" stroke-width="1.6"/>
<path d="M27.8 514.1 L22.4 514.1 L27.8 508.7 Z" fill="#555"/>
<circle cx="42.7" cy="497" r="3.500" fill="#9aa6f0" stroke="#6c78c8" stroke-width="0.7"/><circle cx="37.3" cy="505.8" r="3.500" fill="#fff" stroke="#444" stroke-width="0.9"/><circle cx="47.4" cy="505.8" r="3.600" fill="#20248c"/>
<path d="M4.7 525.8 Q9 523.600 13 526.600 Q18.600 531 19.600 538" fill="none" stroke="#1a1a1a" stroke-width="1.5"/><circle cx="9.5" cy="524.6" r="1.700" fill="#fff" stroke="#222" stroke-width="0.9"/><circle cx="19.5" cy="534.6" r="1.700" fill="#fff" stroke="#222" stroke-width="0.9"/>
<path d="M32.4 525.6 Q46.600 524.600 48 539" fill="none" stroke="#1a1a1a" stroke-width="2"/><path d="M31.600 521.600 H36.600 M41.800 523.400 L48.600 531.600" stroke="#333" stroke-width="0.8" stroke-dasharray="1.5 1"/><rect x="38.0" y="519.5" width="2.6" height="2.6" fill="#fff" stroke="#222" stroke-width="0.9"/><rect x="50.1" y="531.1" width="2.6" height="2.6" fill="#fff" stroke="#222" stroke-width="0.9"/>
<path d="M55.7 542.0 L51.7 542.0 L55.7 538.0 Z" fill="#555"/>
<path d="M5.6 547.4 L8 547 H20.400 L22.400 548.400 V553.400 L19.600 552.400 Q18.800 550.800 16.600 550.800 V562.800 Q17 564.400 19.400 565 L18.600 567.200 H9.600 L9 565 Q11.400 564.400 11.400 562.800 V550.800 Q9 550.800 8.400 552.600 L5.600 552.200 Z" fill="url(#lBlue)" stroke="#1b2350" stroke-width="1" stroke-linejoin="round"/>
<rect x="33.8" y="560" width="6.400" height="6" fill="#fff" stroke="#222" stroke-width="1.1"/><rect x="45.6" y="547.7" width="6.400" height="6.400" fill="#7f97ea" stroke="#2c3ea8" stroke-width="0.9"/><path d="M40.600 559.400 L45 555" stroke="#222" stroke-width="1" stroke-dasharray="1.800 1"/><path d="M45.800 554.200 l-3.400 .6 l2.800 2.800z" fill="#222"/>
<path d="M55.7 569.6 L50.3 569.6 L55.7 564.2 Z" fill="#555"/>
<rect x="5.9" y="576.0" width="5.8" height="5.8" fill="#7f97ea" stroke="#1b2350" stroke-width="1"/>
<rect x="17.8" y="579.0" width="6.2" height="6.2" fill="#7f97ea" stroke="#1b2350" stroke-width="1"/>
<rect x="14.2" y="582.2" width="5.0" height="5.0" fill="#7f97ea" stroke="#1b2350" stroke-width="1"/>
<rect x="5.9" y="588.0" width="5.6" height="5.6" fill="#fff" stroke="#1b2350" stroke-width="1"/>
<rect x="17.8" y="589.8" width="5.6" height="5.6" fill="#7f97ea" stroke="#1b2350" stroke-width="1"/>
<rect x="32" y="576.7" width="5.200" height="14.200" fill="#fff" stroke="#222" stroke-width="1.1"/><rect x="-2.600" y="-7" width="5.200" height="14" fill="#7f97ea" stroke="#1b2350" stroke-width="1" transform="translate(46.2 588.4) rotate(48)"/><path d="M38.400 580.600 Q43.400 579.400 44.800 583.800" fill="none" stroke="#222" stroke-width="1"/><path d="M45 585.400 l-2.200 -2.400 l3.600 -.4z" fill="#222"/>
<path d="M4.7 609.6 L14.600 603.600 L24.9 608.400 V619 L16.400 623.600 L4.700 619.400 Z" fill="#5c77e2" stroke="#1b2350" stroke-width="1" stroke-linejoin="round"/><path d="M4.700 609.600 L14.600 603.600 L24.900 608.400 L16 613 Z" fill="#8fa4f0"/><path d="M11.3 617.400 L15.600 615.400 L19.600 617 V621.800 L15.800 623.600 L11.300 622 Z" fill="#fff" stroke="#333" stroke-width="0.7"/>
<path d="M27.8 626.6 L22.4 626.6 L27.8 621.2 Z" fill="#555"/>
<path d="M36.400 617 H53.300 L48.600 621.800 H32 Z" fill="#6f88e8" stroke="#1b2350" stroke-width="0.8"/><path d="M38.800 616 V608 M43.400 616 V608 M48.200 616 V608" stroke="#fff" stroke-width="1.500"/><path d="M38.800 605.800 l1.900 3 h-3.800z M43.400 605.800 l1.900 3 h-3.800z M48.200 605.800 l1.900 3 h-3.800z" fill="#fff"/><path d="M37.600 617.200 h2.600 M42.200 617.200 h2.600 M46.800 617.200 h2.600" stroke="#1b2350" stroke-width="1.200"/>
<path d="M55.7 626.6 L50.3 626.6 L55.7 621.2 Z" fill="#555"/>
<rect x="5.0" y="632.1" width="4.2" height="4.2" fill="#7f97ea" stroke="#1b2350" stroke-width="1.1"/>
<rect x="5.0" y="638.9" width="4.2" height="4.2" fill="#7f97ea" stroke="#1b2350" stroke-width="1.1"/>
<rect x="5.0" y="645.9" width="4.2" height="4.2" fill="#fff" stroke="#1b2350" stroke-width="1.1"/>
<rect x="12.1" y="632.1" width="4.2" height="4.2" fill="#7f97ea" stroke="#1b2350" stroke-width="1.1"/>
<rect x="12.1" y="638.9" width="4.2" height="4.2" fill="#7f97ea" stroke="#1b2350" stroke-width="1.1"/>
<rect x="12.1" y="645.9" width="4.2" height="4.2" fill="#7f97ea" stroke="#1b2350" stroke-width="1.1"/>
<rect x="19.2" y="632.1" width="4.2" height="4.2" fill="#7f97ea" stroke="#1b2350" stroke-width="1.1"/>
<rect x="19.2" y="638.9" width="4.2" height="4.2" fill="#7f97ea" stroke="#1b2350" stroke-width="1.1"/>
<rect x="19.2" y="645.9" width="4.2" height="4.2" fill="#7f97ea" stroke="#1b2350" stroke-width="1.1"/>
<path d="M27.8 654.6 L22.4 654.6 L27.8 649.2 Z" fill="#555"/>
<rect x="37.800" y="632.6" width="9.800" height="4" rx="1" fill="#fff" stroke="#333" stroke-width="1"/><rect x="40" y="638.6" width="5.400" height="4.600" rx="1" fill="#fff" stroke="#333" stroke-width="1"/><rect x="38.800" y="645" width="7.800" height="6" rx="1.400" fill="#fff" stroke="#333" stroke-width="1"/><path d="M42.700 630.600 V652.600" stroke="#d02020" stroke-width="1.200"/>
<path d="M55.7 654.6 L50.3 654.6 L55.7 649.2 Z" fill="#555"/>
<path d="M4.7 663.4 L9.400 660.7 L11.600 662 V675.500 L6 675 Z" fill="url(#lGr)" stroke="#222" stroke-width="1" stroke-linejoin="round"/><path d="M12.400 663.400 L15.400 659 L14.400 663.400" fill="#fff" stroke="#222" stroke-width="0.8"/><path d="M15 663.200 L23.100 661.400 L19 679.600 L10.600 676.400 Z" fill="url(#lBlue)" stroke="#1b2350" stroke-width="1" stroke-linejoin="round"/>
<path d="M27.8 682.0 L22.4 682.0 L27.8 676.6 Z" fill="#555"/>
<path d="M33.800 671.300 L37.300 677.300 Q43 667 51 660.700 Q42 666 37.400 672.600 L35.800 670 Z" fill="#000" stroke="#000" stroke-width="1.100" stroke-linejoin="round"/>
<path d="M55.7 682.0 L50.3 682.0 L55.7 676.6 Z" fill="#555"/>
<path d="M4.7 692.6 L10 689.700 L15.400 691.600 V700 L10.200 702.700 L4.700 700.600 Z" fill="url(#lGr)" stroke="#333" stroke-width="0.9" stroke-linejoin="round"/><path d="M19 691 L24.300 702.600 Q19.400 706.800 14.200 702.800 Z" fill="url(#lGr)" stroke="#333" stroke-width="0.9" stroke-linejoin="round"/>
<path d="M27.8 709.8 L22.4 709.8 L27.8 704.4 Z" fill="#555"/>
<path d="M44.4 695 L51 702.700 L45.600 708 L34.400 704.500 Z" fill="#f8b73c" stroke="#5a3c0a" stroke-width="0.8" stroke-linejoin="round"/><path d="M44.400 695 L45.600 708 L34.400 704.500Z" fill="#fbd27a"/><path d="M39.700 691 L44 687.400 H51.600 V685.400 L54.600 688.400 L51.600 691.400 V689.600 H45 L42 692.400 Z" fill="#8a8a8a" stroke="#222" stroke-width="0.6"/>
<path d="M55.7 709.8 L50.3 709.8 L55.7 704.4 Z" fill="#555"/>
</svg>
<!-- part_view -->
<div class="b" style="left:62.5px;top:196.5px;width:1657.0px;height:752.0px;background:#d9dde8;"></div>
<div class="b" style="left:64.5px;top:198.0px;width:1653.5px;height:748.7px;background:#fff;"></div>
<svg style="left:0;top:0" width="1920" height="1080" viewBox="0 0 1920 1080">
<defs><clipPath id="vpclip"><rect x="64.5" y="198" width="1653.5" height="748.7"/></clipPath><clipPath id="bodyclip"><path d="M490.8 706.0 L492.8 694.0 L494.8 688.6 L496.8 684.8 L498.8 681.7 L500.8 679.3 L504.0 676.2 L508.0 673.5 L512.0 670.8 L516.0 668.6 L520.0 667.0 L524.0 665.7 L528.0 664.7 L532.0 663.9 L536.0 663.1 L540.0 662.3 L544.0 661.6 L548.0 660.9 L552.0 660.4 L556.0 659.9 L560.0 659.4 L564.0 659.1 L568.0 658.7 L572.0 658.4 L576.0 658.1 L580.0 657.8 L584.0 657.6 L588.0 657.3 L592.0 657.0 L596.0 656.8 L600.0 656.5 L604.0 656.2 L608.0 656.0 L612.0 655.8 L616.0 655.6 L620.0 655.4 L624.0 655.1 L628.0 654.9 L632.0 654.6 L636.0 654.2 L640.0 653.8 L644.0 653.3 L648.0 652.7 L652.0 652.1 L656.0 651.3 L660.0 650.5 L664.0 649.6 L668.0 648.7 L672.0 647.7 L676.0 646.6 L680.0 645.4 L684.0 644.2 L688.0 642.9 L692.0 641.6 L696.0 640.3 L700.0 638.8 L704.0 637.3 L708.0 635.6 L712.0 633.9 L716.0 632.1 L720.0 630.2 L724.0 628.2 L728.0 626.1 L732.0 624.0 L736.0 621.9 L740.0 619.8 L744.0 617.6 L748.0 615.3 L752.0 612.9 L756.0 610.2 L760.0 607.5 L764.0 604.6 L768.0 601.8 L772.0 598.8 L776.0 595.9 L780.0 592.9 L784.0 589.8 L788.0 586.7 L792.0 583.5 L796.0 580.1 L800.0 577.0 L804.0 574.1 L808.0 571.4 L812.0 568.8 L816.0 566.4 L820.0 564.2 L824.0 562.1 L828.0 560.0 L832.0 558.0 L836.0 555.9 L840.0 553.9 L844.0 552.0 L848.0 550.2 L852.0 548.5 L856.0 546.9 L860.0 545.5 L864.0 544.2 L868.0 542.9 L872.0 541.7 L876.0 540.7 L880.0 539.8 L884.0 539.1 L888.0 538.5 L892.0 538.1 L896.0 537.8 L900.0 537.7 L904.0 537.8 L908.0 538.1 L912.0 538.7 L916.0 539.4 L920.0 540.2 L924.0 541.0 L928.0 541.9 L932.0 542.9 L936.0 543.9 L940.0 545.0 L944.0 546.2 L948.0 547.5 L952.0 548.8 L956.0 550.3 L960.0 551.9 L964.0 553.5 L968.0 555.3 L972.0 557.2 L976.0 559.3 L980.0 561.5 L984.0 563.8 L988.0 566.1 L992.0 568.4 L996.0 570.7 L1000.0 573.0 L1004.0 575.2 L1008.0 577.5 L1012.0 579.9 L1016.0 582.3 L1020.0 584.8 L1024.0 587.4 L1028.0 590.0 L1032.0 592.7 L1036.0 595.4 L1040.0 598.1 L1044.0 600.8 L1048.0 603.5 L1052.0 606.3 L1056.0 609.2 L1060.0 612.0 L1064.0 614.9 L1068.0 617.8 L1072.0 620.8 L1076.0 623.7 L1080.0 626.7 L1084.0 629.6 L1088.0 632.5 L1092.0 635.4 L1096.0 638.3 L1100.0 641.2 L1104.0 644.1 L1108.0 647.0 L1112.0 649.9 L1116.0 652.8 L1120.0 655.6 L1124.0 658.4 L1128.0 661.1 L1132.0 663.8 L1136.0 666.4 L1140.0 668.8 L1144.0 671.1 L1148.0 673.4 L1152.0 675.5 L1156.0 677.6 L1160.0 679.7 L1164.0 681.6 L1168.0 683.4 L1172.0 685.0 L1176.0 686.5 L1180.0 688.0 L1184.0 689.4 L1188.0 690.8 L1192.0 692.1 L1196.0 693.4 L1200.0 694.7 L1204.0 696.0 L1208.0 697.3 L1212.0 698.7 L1216.0 700.0 L1220.0 701.3 L1224.0 702.7 L1228.0 704.0 L1232.0 705.3 L1236.0 706.7 L1240.0 708.0 L1244.0 709.3 L1248.0 710.6 L1252.0 711.9 L1256.0 713.2 L1260.0 714.6 L1264.0 715.9 L1268.0 717.2 L1272.0 718.5 L1276.0 719.8 L1280.0 721.1 L1284.0 722.4 L1288.0 723.7 L1292.0 724.9 L1296.0 726.1 L1302.0 727.0 Q1316 729.5 1317.5 746.7 L1317.5 799.4 L1298 803.6 L1264.7 807 L1235.5 811 L1235.5 811.0 L1232.0 810.5 L1228.0 809.8 L1224.0 809.1 L1220.0 808.5 L1216.0 807.8 L1212.0 807.1 L1208.0 806.5 L1204.0 805.8 L1200.0 805.2 L1196.0 804.6 L1192.0 804.1 L1188.0 803.6 L1184.0 803.1 L1180.0 802.7 L1176.0 802.3 L1172.0 801.9 L1168.0 801.6 L1164.0 801.3 L1160.0 801.0 L1156.0 800.7 L1152.0 800.4 L1148.0 800.2 L1144.0 799.9 L1140.0 799.7 L1136.0 799.4 L1132.0 799.1 L1128.0 798.9 L1124.0 798.6 L1120.0 798.3 L1116.0 798.0 L1112.0 797.7 L1108.0 797.4 L1104.0 797.1 L1100.0 796.9 L1096.0 796.6 L1092.0 796.3 L1088.0 796.0 L1084.0 795.7 L1080.0 795.5 L1076.0 795.2 L1072.0 795.0 L1068.0 794.7 L1064.0 794.5 L1060.0 794.3 L1056.0 794.0 L1052.0 793.8 L1048.0 793.7 L1044.0 793.5 L1040.0 793.3 L1036.0 793.2 L1032.0 793.0 L1028.0 792.9 L1024.0 792.7 L1020.0 792.6 L1016.0 792.5 L1012.0 792.4 L1008.0 792.3 L1004.0 792.2 L1000.0 792.1 L996.0 792.0 L992.0 791.9 L988.0 791.8 L984.0 791.7 L980.0 791.6 L976.0 791.5 L972.0 791.4 L968.0 791.4 L964.0 791.3 L960.0 791.2 L956.0 791.1 L952.0 791.0 L948.0 791.0 L944.0 790.9 L940.0 790.8 L936.0 790.7 L932.0 790.6 L928.0 790.6 L924.0 790.5 L920.0 790.4 L916.0 790.4 L912.0 790.3 L908.0 790.2 L904.0 790.2 L900.0 790.1 L896.0 790.0 L892.0 790.0 L888.0 789.9 L884.0 789.9 L880.0 789.8 L876.0 789.7 L872.0 789.7 L868.0 789.6 L864.0 789.5 L860.0 789.5 L856.0 789.4 L852.0 789.4 L848.0 789.3 L844.0 789.2 L840.0 789.2 L836.0 789.1 L832.0 789.1 L828.0 789.0 L824.0 788.9 L820.0 788.9 L816.0 788.8 L812.0 788.7 L808.0 788.6 L804.0 788.6 L800.0 788.5 L796.0 788.4 L792.0 788.3 L788.0 788.3 L784.0 788.2 L780.0 788.1 L776.0 788.0 L772.0 787.9 L768.0 787.8 L764.0 787.7 L760.0 787.6 L756.0 787.5 L752.0 787.5 L748.0 787.4 L744.0 787.3 L740.0 787.2 L736.0 787.1 L732.0 787.0 L728.0 786.9 L724.0 786.8 L720.0 786.7 L716.0 786.6 L712.0 786.5 L708.0 786.4 L704.0 786.3 L700.0 786.3 L696.0 786.2 L692.0 786.1 L688.0 786.0 L684.0 785.9 L680.0 785.8 L676.0 785.7 L672.0 785.6 L668.0 785.5 L664.0 785.4 L660.0 785.3 L656.0 785.2 L652.0 785.1 L648.0 785.0 L644.0 784.9 L640.0 784.8 L636.0 784.7 L632.0 784.6 L628.0 784.5 L624.0 784.4 L620.0 784.3 L616.0 784.1 L612.0 784.0 L608.0 783.8 L604.0 783.7 L600.0 783.5 L596.0 783.3 L592.0 783.0 L588.0 782.8 L584.0 782.6 L580.0 782.3 L576.0 782.1 L572.0 781.8 L568.0 781.4 L564.0 781.0 L560.0 780.6 L556.0 780.1 L552.0 779.6 L548.0 778.9 L544.0 778.1 L540.0 777.3 L536.0 776.4 L532.0 775.5 L528.0 774.6 L524.0 773.8 L520.0 773.0 L516.0 772.2 L512.0 771.4 L508.0 770.4 L504.0 769.2 L501.0 768.0 L498.3 766.7 L496.0 765.3 L494.0 763.5 L492.0 760.8 L490.8 758.3 Z"/></clipPath>
<linearGradient id="shade" x1="0" y1="0" x2="1" y2="0"><stop offset="0" stop-color="#d2a46e" stop-opacity="0.92"/><stop offset="0.04" stop-color="#d2a46e" stop-opacity="0.8"/><stop offset="0.085" stop-color="#d2a46e" stop-opacity="0.5"/><stop offset="0.14" stop-color="#d2a46e" stop-opacity="0.18"/><stop offset="0.2" stop-color="#d2a46e" stop-opacity="0"/><stop offset="0.8" stop-color="#a8672e" stop-opacity="0"/><stop offset="1" stop-color="#a8672e" stop-opacity="0.18"/></linearGradient>
<filter id="blur3" x="-5%" y="-20%" width="110%" height="140%"><feGaussianBlur stdDeviation="3"/></filter>
<filter id="blur5" x="-5%" y="-20%" width="110%" height="140%"><feGaussianBlur stdDeviation="5"/></filter>
</defs>
<g clip-path="url(#vpclip)">
<g fill="none" stroke="#e3c6a6" stroke-width="1"><path d="M64 783 L452 757.5 L1285 946.5"/><path d="M64 796.5 Q130 789 160 794 Q180 801 165 809 Q140 818 64 821"/><path d="M64 803 Q120 797 148 799.5 Q160 803 140 808 Q110 812 64 813.5"/><path d="M315 777.5 L385 771.5 Q440 770 450 780 Q452 790 420 793 L370 796 L352 790 L405 787 Q432 784 428 779 Q420 775 380 777.5 L332 783 Z"/><path d="M428 815 L470 808 Q540 800 590 812 Q625 824 600 834 L520 844 L487 833 L555 826 Q585 820 570 814 Q530 807 480 815 L455 823 Z"/><path d="M98 846 L170 838 Q250 830 280 845 Q300 858 270 868 Q230 880 155 883 L135 870 Q220 866 250 857 Q270 850 240 846 Q200 842 150 850 L115 857 Z"/><path d="M197 919 L290 905 Q390 893 430 910 Q470 925 492 946"/><path d="M197 919 L227 937 Q330 915 380 918 Q425 924 424 936 Q420 943 400 947"/><path d="M589 869 L640 860 Q720 850 790 865 Q875 885 870 893 Q860 905 740 916 L684 898 Q760 895 795 885 Q805 876 770 870 Q720 866 680 875 L632 882 Z"/><path d="M890 947.5 Q990 917 1091 947.5"/></g>
<g fill="none" stroke="#d9a66c" stroke-width="1.6" stroke-linecap="round"><path d="M107.0 804.0 l6 -4 M108.0 799.0 l5 3 M105.0 804.0 q4 3 9 0" /><path d="M389.0 781.0 l6 -4 M390.0 776.0 l5 3 M387.0 781.0 q4 3 9 0" /><path d="M530.0 821.0 l6 -4 M531.0 816.0 l5 3 M528.0 821.0 q4 3 9 0" /><path d="M203.0 855.0 l6 -4 M204.0 850.0 l5 3 M201.0 855.0 q4 3 9 0" /><path d="M352.0 935.0 l6 -4 M353.0 930.0 l5 3 M350.0 935.0 q4 3 9 0" /><path d="M739.0 882.0 l6 -4 M740.0 877.0 l5 3 M737.0 882.0 q4 3 9 0" /></g>
<path d="M490.8 706.0 L492.8 694.0 L494.8 688.6 L496.8 684.8 L498.8 681.7 L500.8 679.3 L504.0 676.2 L508.0 673.5 L512.0 670.8 L516.0 668.6 L520.0 667.0 L524.0 665.7 L528.0 664.7 L532.0 663.9 L536.0 663.1 L540.0 662.3 L544.0 661.6 L548.0 660.9 L552.0 660.4 L556.0 659.9 L560.0 659.4 L564.0 659.1 L568.0 658.7 L572.0 658.4 L576.0 658.1 L580.0 657.8 L584.0 657.6 L588.0 657.3 L592.0 657.0 L596.0 656.8 L600.0 656.5 L604.0 656.2 L608.0 656.0 L612.0 655.8 L616.0 655.6 L620.0 655.4 L624.0 655.1 L628.0 654.9 L632.0 654.6 L636.0 654.2 L640.0 653.8 L644.0 653.3 L648.0 652.7 L652.0 652.1 L656.0 651.3 L660.0 650.5 L664.0 649.6 L668.0 648.7 L672.0 647.7 L676.0 646.6 L680.0 645.4 L684.0 644.2 L688.0 642.9 L692.0 641.6 L696.0 640.3 L700.0 638.8 L704.0 637.3 L708.0 635.6 L712.0 633.9 L716.0 632.1 L720.0 630.2 L724.0 628.2 L728.0 626.1 L732.0 624.0 L736.0 621.9 L740.0 619.8 L744.0 617.6 L748.0 615.3 L752.0 612.9 L756.0 610.2 L760.0 607.5 L764.0 604.6 L768.0 601.8 L772.0 598.8 L776.0 595.9 L780.0 592.9 L784.0 589.8 L788.0 586.7 L792.0 583.5 L796.0 580.1 L800.0 577.0 L804.0 574.1 L808.0 571.4 L812.0 568.8 L816.0 566.4 L820.0 564.2 L824.0 562.1 L828.0 560.0 L832.0 558.0 L836.0 555.9 L840.0 553.9 L844.0 552.0 L848.0 550.2 L852.0 548.5 L856.0 546.9 L860.0 545.5 L864.0 544.2 L868.0 542.9 L872.0 541.7 L876.0 540.7 L880.0 539.8 L884.0 539.1 L888.0 538.5 L892.0 538.1 L896.0 537.8 L900.0 537.7 L904.0 537.8 L908.0 538.1 L912.0 538.7 L916.0 539.4 L920.0 540.2 L924.0 541.0 L928.0 541.9 L932.0 542.9 L936.0 543.9 L940.0 545.0 L944.0 546.2 L948.0 547.5 L952.0 548.8 L956.0 550.3 L960.0 551.9 L964.0 553.5 L968.0 555.3 L972.0 557.2 L976.0 559.3 L980.0 561.5 L984.0 563.8 L988.0 566.1 L992.0 568.4 L996.0 570.7 L1000.0 573.0 L1004.0 575.2 L1008.0 577.5 L1012.0 579.9 L1016.0 582.3 L1020.0 584.8 L1024.0 587.4 L1028.0 590.0 L1032.0 592.7 L1036.0 595.4 L1040.0 598.1 L1044.0 600.8 L1048.0 603.5 L1052.0 606.3 L1056.0 609.2 L1060.0 612.0 L1064.0 614.9 L1068.0 617.8 L1072.0 620.8 L1076.0 623.7 L1080.0 626.7 L1084.0 629.6 L1088.0 632.5 L1092.0 635.4 L1096.0 638.3 L1100.0 641.2 L1104.0 644.1 L1108.0 647.0 L1112.0 649.9 L1116.0 652.8 L1120.0 655.6 L1124.0 658.4 L1128.0 661.1 L1132.0 663.8 L1136.0 666.4 L1140.0 668.8 L1144.0 671.1 L1148.0 673.4 L1152.0 675.5 L1156.0 677.6 L1160.0 679.7 L1164.0 681.6 L1168.0 683.4 L1172.0 685.0 L1176.0 686.5 L1180.0 688.0 L1184.0 689.4 L1188.0 690.8 L1192.0 692.1 L1196.0 693.4 L1200.0 694.7 L1204.0 696.0 L1208.0 697.3 L1212.0 698.7 L1216.0 700.0 L1220.0 701.3 L1224.0 702.7 L1228.0 704.0 L1232.0 705.3 L1236.0 706.7 L1240.0 708.0 L1244.0 709.3 L1248.0 710.6 L1252.0 711.9 L1256.0 713.2 L1260.0 714.6 L1264.0 715.9 L1268.0 717.2 L1272.0 718.5 L1276.0 719.8 L1280.0 721.1 L1284.0 722.4 L1288.0 723.7 L1292.0 724.9 L1296.0 726.1 L1302.0 727.0 Q1316 729.5 1317.5 746.7 L1317.5 799.4 L1298 803.6 L1264.7 807 L1235.5 811 L1235.5 811.0 L1232.0 810.5 L1228.0 809.8 L1224.0 809.1 L1220.0 808.5 L1216.0 807.8 L1212.0 807.1 L1208.0 806.5 L1204.0 805.8 L1200.0 805.2 L1196.0 804.6 L1192.0 804.1 L1188.0 803.6 L1184.0 803.1 L1180.0 802.7 L1176.0 802.3 L1172.0 801.9 L1168.0 801.6 L1164.0 801.3 L1160.0 801.0 L1156.0 800.7 L1152.0 800.4 L1148.0 800.2 L1144.0 799.9 L1140.0 799.7 L1136.0 799.4 L1132.0 799.1 L1128.0 798.9 L1124.0 798.6 L1120.0 798.3 L1116.0 798.0 L1112.0 797.7 L1108.0 797.4 L1104.0 797.1 L1100.0 796.9 L1096.0 796.6 L1092.0 796.3 L1088.0 796.0 L1084.0 795.7 L1080.0 795.5 L1076.0 795.2 L1072.0 795.0 L1068.0 794.7 L1064.0 794.5 L1060.0 794.3 L1056.0 794.0 L1052.0 793.8 L1048.0 793.7 L1044.0 793.5 L1040.0 793.3 L1036.0 793.2 L1032.0 793.0 L1028.0 792.9 L1024.0 792.7 L1020.0 792.6 L1016.0 792.5 L1012.0 792.4 L1008.0 792.3 L1004.0 792.2 L1000.0 792.1 L996.0 792.0 L992.0 791.9 L988.0 791.8 L984.0 791.7 L980.0 791.6 L976.0 791.5 L972.0 791.4 L968.0 791.4 L964.0 791.3 L960.0 791.2 L956.0 791.1 L952.0 791.0 L948.0 791.0 L944.0 790.9 L940.0 790.8 L936.0 790.7 L932.0 790.6 L928.0 790.6 L924.0 790.5 L920.0 790.4 L916.0 790.4 L912.0 790.3 L908.0 790.2 L904.0 790.2 L900.0 790.1 L896.0 790.0 L892.0 790.0 L888.0 789.9 L884.0 789.9 L880.0 789.8 L876.0 789.7 L872.0 789.7 L868.0 789.6 L864.0 789.5 L860.0 789.5 L856.0 789.4 L852.0 789.4 L848.0 789.3 L844.0 789.2 L840.0 789.2 L836.0 789.1 L832.0 789.1 L828.0 789.0 L824.0 788.9 L820.0 788.9 L816.0 788.8 L812.0 788.7 L808.0 788.6 L804.0 788.6 L800.0 788.5 L796.0 788.4 L792.0 788.3 L788.0 788.3 L784.0 788.2 L780.0 788.1 L776.0 788.0 L772.0 787.9 L768.0 787.8 L764.0 787.7 L760.0 787.6 L756.0 787.5 L752.0 787.5 L748.0 787.4 L744.0 787.3 L740.0 787.2 L736.0 787.1 L732.0 787.0 L728.0 786.9 L724.0 786.8 L720.0 786.7 L716.0 786.6 L712.0 786.5 L708.0 786.4 L704.0 786.3 L700.0 786.3 L696.0 786.2 L692.0 786.1 L688.0 786.0 L684.0 785.9 L680.0 785.8 L676.0 785.7 L672.0 785.6 L668.0 785.5 L664.0 785.4 L660.0 785.3 L656.0 785.2 L652.0 785.1 L648.0 785.0 L644.0 784.9 L640.0 784.8 L636.0 784.7 L632.0 784.6 L628.0 784.5 L624.0 784.4 L620.0 784.3 L616.0 784.1 L612.0 784.0 L608.0 783.8 L604.0 783.7 L600.0 783.5 L596.0 783.3 L592.0 783.0 L588.0 782.8 L584.0 782.6 L580.0 782.3 L576.0 782.1 L572.0 781.8 L568.0 781.4 L564.0 781.0 L560.0 780.6 L556.0 780.1 L552.0 779.6 L548.0 778.9 L544.0 778.1 L540.0 777.3 L536.0 776.4 L532.0 775.5 L528.0 774.6 L524.0 773.8 L520.0 773.0 L516.0 772.2 L512.0 771.4 L508.0 770.4 L504.0 769.2 L501.0 768.0 L498.3 766.7 L496.0 765.3 L494.0 763.5 L492.0 760.8 L490.8 758.3 Z" fill="#c1803e"/>
<g clip-path="url(#bodyclip)"><g fill="#e2b687" stroke="none"><path d="M491.8 761.8 491.8 714.0 491.8 712.4 491.9 710.1 492.1 708.0 492.2 706.2 492.3 704.6 492.4 703.0 492.6 701.6 492.8 700.2 492.9 699.0 493.1 697.9 493.3 697.0 493.6 696.0 493.8 695.0 494.0 693.9 494.1 693.0 494.4 692.3 494.6 691.6 494.8 691.0 494.9 690.3 495.1 689.7 495.2 689.0 495.4 688.4 495.6 687.7 495.8 687.0 495.9 686.1 496.1 685.0 496.2 684.0 496.4 682.9 496.6 681.8 496.7 681.0 497.6 681.0 497.5 681.8 497.3 682.9 497.1 684.0 497.0 685.0 496.8 686.1 496.6 687.0 496.5 687.7 496.3 688.4 496.1 689.0 496.0 689.7 495.8 690.3 495.6 691.0 495.5 691.6 495.3 692.3 495.0 693.0 494.8 693.9 494.6 695.0 494.4 696.0 494.2 697.0 494.0 697.9 493.8 699.0 493.7 700.2 493.5 701.6 493.3 703.0 493.2 704.6 493.1 706.2 492.9 708.0 492.8 710.1 492.7 712.4 492.6 714.0 492.6 763.5Z M493.1 764.1 493.1 714.0 493.2 712.4 493.3 710.1 493.4 708.0 493.5 706.2 493.6 704.5 493.8 703.0 493.9 701.5 494.1 700.2 494.3 699.0 494.5 697.9 494.7 696.9 494.9 696.0 495.1 694.9 495.3 693.9 495.5 693.0 495.7 692.2 495.9 691.6 496.1 691.0 496.3 690.3 496.4 689.6 496.6 689.0 496.8 688.3 496.9 687.7 497.1 687.0 497.3 686.0 497.5 685.0 497.6 684.0 497.8 682.9 498.0 681.8 498.1 681.0 499.4 680.6 499.3 681.3 499.1 682.4 498.9 683.5 498.7 684.6 498.5 685.6 498.4 686.5 498.2 687.3 498.0 687.9 497.8 688.6 497.6 689.3 497.4 689.9 497.2 690.6 497.0 691.3 496.8 691.9 496.6 692.7 496.4 693.6 496.1 694.6 495.9 695.7 495.7 696.6 495.5 697.6 495.3 698.7 495.1 699.9 494.9 701.3 494.7 702.7 494.6 704.3 494.4 706.0 494.3 707.7 494.2 709.9 494.1 712.2 494.0 713.8 494.0 765.0Z M494.5 765.5 494.5 713.7 494.5 712.0 494.7 709.8 494.8 707.6 494.9 705.8 495.1 704.1 495.2 702.6 495.4 701.1 495.6 699.8 495.8 698.5 496.0 697.4 496.3 696.5 496.5 695.5 496.7 694.5 496.9 693.4 497.2 692.5 497.4 691.7 497.6 691.1 497.8 690.4 498.0 689.7 498.2 689.0 498.4 688.3 498.6 687.7 498.8 687.0 499.0 686.3 499.2 685.3 499.4 684.3 499.6 683.3 499.8 682.2 500.0 681.1 500.2 680.3 501.6 679.8 501.4 680.5 501.2 681.6 501.0 682.7 500.8 683.8 500.6 684.8 500.4 685.7 500.1 686.5 499.9 687.2 499.7 687.9 499.4 688.6 499.2 689.3 499.0 690.0 498.8 690.6 498.5 691.3 498.3 692.1 498.0 693.0 497.8 694.1 497.6 695.1 497.3 696.1 497.1 697.1 496.8 698.2 496.6 699.4 496.4 700.8 496.2 702.2 496.0 703.8 495.9 705.5 495.7 707.3 495.6 709.5 495.5 711.8 495.4 713.4 495.4 766.3Z M495.9 766.7 495.9 713.2 496.0 711.6 496.1 709.3 496.2 707.1 496.4 705.3 496.6 703.6 496.8 702.0 497.0 700.6 497.2 699.2 497.4 698.0 497.7 696.9 497.9 695.9 498.2 694.9 498.4 693.8 498.7 692.8 499.0 691.8 499.2 691.0 499.5 690.4 499.7 689.7 500.0 689.0 500.2 688.3 500.4 687.5 500.6 686.9 500.9 686.2 501.1 685.4 501.4 684.5 501.6 683.4 501.8 682.4 502.1 681.3 502.3 680.2 502.5 679.4 504.0 678.8 503.8 679.6 503.5 680.6 503.3 681.7 503.0 682.8 502.8 683.8 502.5 684.8 502.3 685.6 502.0 686.3 501.7 687.0 501.4 687.7 501.2 688.4 501.0 689.2 500.7 689.9 500.4 690.6 500.1 691.4 499.8 692.3 499.6 693.4 499.3 694.4 499.0 695.4 498.7 696.4 498.5 697.5 498.2 698.8 497.9 700.2 497.7 701.6 497.5 703.2 497.3 704.9 497.2 706.7 497.0 709.0 496.9 711.3 496.8 712.9 496.8 767.3Z M497.4 767.7 497.4 712.7 497.5 711.1 497.6 708.7 497.7 706.5 497.9 704.7 498.1 703.0 498.3 701.4 498.6 699.9 498.8 698.5 499.1 697.3 499.4 696.2 499.7 695.2 500.0 694.1 500.3 693.1 500.6 692.0 500.9 691.0 501.2 690.2 501.5 689.5 501.7 688.8 502.0 688.1 502.3 687.3 502.5 686.6 502.8 685.9 503.1 685.1 503.4 684.3 503.7 683.4 504.0 682.3 504.2 681.3 504.5 680.2 504.8 679.1 505.0 678.4 506.6 677.7 506.4 678.4 506.1 679.5 505.8 680.5 505.5 681.6 505.2 682.6 504.9 683.6 504.6 684.4 504.2 685.2 503.9 685.9 503.6 686.7 503.3 687.4 503.0 688.2 502.7 688.9 502.4 689.7 502.1 690.5 501.8 691.5 501.4 692.6 501.1 693.6 500.8 694.7 500.5 695.7 500.2 696.8 499.9 698.1 499.6 699.4 499.3 700.9 499.1 702.5 498.8 704.3 498.7 706.1 498.5 708.3 498.4 710.7 498.3 712.4 498.3 768.2Z M498.9 768.5 498.9 712.1 499.0 710.4 499.1 708.1 499.3 705.8 499.5 703.9 499.7 702.2 500.0 700.6 500.3 699.1 500.6 697.7 500.9 696.5 501.2 695.3 501.6 694.3 501.9 693.3 502.2 692.2 502.6 691.1 502.9 690.1 503.2 689.3 503.6 688.5 503.9 687.8 504.2 687.0 504.5 686.2 504.8 685.4 505.2 684.7 505.6 683.9 505.9 683.1 506.2 682.1 506.6 681.1 506.9 680.0 507.2 678.9 507.5 677.9 507.7 677.1 509.4 676.4 509.2 677.1 508.8 678.1 508.5 679.2 508.1 680.2 507.8 681.3 507.4 682.3 507.1 683.2 506.6 683.9 506.2 684.7 505.9 685.5 505.6 686.3 505.2 687.1 504.9 687.9 504.5 688.7 504.1 689.5 503.8 690.5 503.4 691.6 503.0 692.7 502.7 693.8 502.3 694.8 502.0 695.9 501.6 697.2 501.3 698.6 500.9 700.1 500.7 701.8 500.4 703.5 500.2 705.3 500.0 707.6 499.9 710.0 499.8 711.8 499.8 768.9Z M500.4 769.2 500.4 711.5 500.5 709.7 500.7 707.3 500.9 705.0 501.1 703.1 501.4 701.4 501.7 699.8 502.0 698.2 502.4 696.8 502.7 695.5 503.1 694.4 503.5 693.3 503.9 692.3 504.3 691.2 504.7 690.1 505.1 689.1 505.4 688.2 505.8 687.4 506.2 686.6 506.6 685.8 506.9 685.0 507.3 684.2 507.7 683.4 508.2 682.6 508.6 681.7 509.0 680.7 509.3 679.6 509.7 678.6 510.0 677.5 510.4 676.5 510.6 675.7 512.4 674.9 512.1 675.6 511.7 676.6 511.3 677.7 511.0 678.7 510.6 679.8 510.2 680.8 509.7 681.7 509.2 682.5 508.7 683.4 508.3 684.2 507.9 685.1 507.6 685.9 507.1 686.7 506.7 687.5 506.3 688.4 505.9 689.5 505.5 690.6 505.1 691.7 504.7 692.8 504.2 693.8 503.8 695.0 503.4 696.3 503.0 697.7 502.7 699.2 502.3 700.9 502.1 702.6 501.8 704.5 501.6 706.8 501.5 709.3 501.3 711.1 501.3 769.6Z M502.1 769.9 502.1 710.7 502.2 709.0 502.3 706.5 502.6 704.1 502.8 702.2 503.1 700.5 503.4 698.8 503.8 697.3 504.2 695.8 504.7 694.5 505.1 693.3 505.6 692.3 506.0 691.2 506.4 690.1 506.9 689.0 507.3 687.9 507.8 687.0 508.2 686.2 508.6 685.3 509.0 684.5 509.4 683.6 509.9 682.7 510.4 681.9 510.9 681.0 511.4 680.1 511.9 679.1 512.3 678.0 512.7 677.0 513.1 675.9 513.5 674.9 513.8 674.2 515.6 673.3 515.3 674.0 514.8 675.0 514.4 676.1 514.0 677.1 513.5 678.2 513.0 679.2 512.5 680.2 511.9 681.0 511.4 681.9 510.9 682.8 510.4 683.7 510.0 684.6 509.5 685.4 509.1 686.3 508.6 687.3 508.1 688.3 507.7 689.5 507.2 690.6 506.7 691.7 506.2 692.7 505.8 693.9 505.3 695.3 504.8 696.7 504.4 698.3 504.1 699.9 503.8 701.7 503.5 703.6 503.3 706.0 503.1 708.5 503.0 710.3 503.0 770.3Z M503.7 770.6 503.7 709.9 503.8 708.1 504.0 705.6 504.3 703.2 504.6 701.2 504.9 699.5 505.3 697.8 505.7 696.2 506.2 694.8 506.7 693.4 507.2 692.2 507.7 691.1 508.2 690.0 508.7 688.9 509.2 687.8 509.7 686.7 510.2 685.7 510.7 684.8 511.2 683.9 511.6 683.0 512.1 682.1 512.6 681.2 513.2 680.3 513.8 679.4 514.4 678.4 514.9 677.4 515.4 676.3 515.8 675.3 516.3 674.2 516.8 673.2 517.1 672.5 518.9 671.6 518.5 672.3 518.1 673.3 517.6 674.3 517.1 675.3 516.6 676.4 516.0 677.5 515.4 678.5 514.7 679.4 514.1 680.3 513.6 681.3 513.1 682.2 512.6 683.2 512.0 684.1 511.5 685.0 511.0 686.0 510.4 687.1 509.9 688.2 509.4 689.4 508.9 690.5 508.3 691.6 507.8 692.8 507.3 694.2 506.7 695.6 506.3 697.2 505.9 698.9 505.5 700.7 505.2 702.6 504.9 705.1 504.7 707.6 504.6 709.5 504.6 770.9Z M505.4 771.1 505.4 709.0 505.6 707.2 505.8 704.6 506.0 702.1 506.4 700.2 506.7 698.4 507.2 696.7 507.7 695.1 508.2 693.6 508.8 692.2 509.3 691.0 509.9 689.9 510.5 688.8 511.0 687.6 511.6 686.5 512.2 685.3 512.7 684.3 513.3 683.4 513.8 682.4 514.4 681.5 514.9 680.5 515.5 679.5 516.1 678.6 516.9 677.6 517.5 676.6 518.1 675.6 518.7 674.5 519.2 673.4 519.7 672.4 520.2 671.4 520.5 670.7 522.3 669.8 522.0 670.5 521.5 671.4 520.9 672.4 520.4 673.5 519.8 674.6 519.2 675.7 518.5 676.7 517.7 677.7 517.0 678.7 516.4 679.7 515.8 680.7 515.2 681.6 514.6 682.6 514.0 683.6 513.5 684.6 512.9 685.8 512.3 686.9 511.7 688.1 511.1 689.3 510.5 690.4 509.9 691.6 509.3 693.0 508.7 694.5 508.2 696.1 507.7 697.8 507.3 699.6 507.0 701.6 506.7 704.1 506.5 706.7 506.3 708.6 506.3 771.4Z M507.2 771.7 507.2 708.1 507.4 706.3 507.6 703.6 507.9 701.1 508.2 699.1 508.6 697.3 509.1 695.5 509.7 693.9 510.3 692.4 511.0 691.0 511.6 689.8 512.2 688.6 512.8 687.5 513.5 686.3 514.1 685.1 514.7 683.9 515.3 682.9 516.0 681.9 516.6 680.9 517.2 679.9 517.8 678.8 518.4 677.8 519.2 676.8 520.0 675.8 520.8 674.8 521.4 673.7 522.0 672.5 522.6 671.5 523.2 670.5 523.7 669.5 524.1 668.9 525.9 667.9 525.5 668.6 525.0 669.5 524.4 670.5 523.8 671.6 523.1 672.7 522.4 673.8 521.6 674.9 520.7 675.9 519.9 676.9 519.2 678.0 518.6 679.0 518.0 680.1 517.3 681.1 516.7 682.2 516.0 683.2 515.3 684.4 514.7 685.6 514.0 686.8 513.4 688.0 512.7 689.1 512.1 690.4 511.4 691.8 510.7 693.3 510.1 695.0 509.6 696.7 509.2 698.5 508.8 700.5 508.5 703.1 508.3 705.8 508.1 707.7 508.1 771.9Z M509.0 772.2 509.0 707.2 509.2 705.3 509.4 702.5 509.8 700.0 510.1 698.0 510.6 696.1 511.1 694.4 511.8 692.7 512.5 691.2 513.2 689.8 513.9 688.5 514.6 687.3 515.3 686.1 516.0 684.9 516.6 683.7 517.3 682.5 518.0 681.4 518.7 680.4 519.4 679.3 520.1 678.2 520.7 677.1 521.5 676.1 522.3 675.0 523.3 673.9 524.1 672.8 524.9 671.7 525.5 670.6 526.2 669.5 526.8 668.5 527.3 667.6 527.7 667.0 529.5 666.0 529.1 666.7 528.5 667.6 527.9 668.6 527.2 669.6 526.5 670.8 525.7 671.9 524.8 673.0 523.9 674.1 522.9 675.2 522.2 676.3 521.5 677.4 520.8 678.5 520.1 679.6 519.4 680.7 518.6 681.8 517.9 683.0 517.2 684.3 516.5 685.5 515.7 686.7 515.0 687.9 514.3 689.2 513.5 690.6 512.8 692.1 512.1 693.8 511.6 695.6 511.1 697.4 510.7 699.5 510.4 702.1 510.1 704.8 509.9 706.8 509.9 772.4Z M510.9 772.6 510.9 706.3 511.1 704.3 511.4 701.5 511.7 698.9 512.1 696.8 512.6 695.0 513.2 693.2 513.9 691.5 514.7 690.0 515.5 688.5 516.2 687.2 517.0 686.0 517.7 684.8 518.5 683.6 519.3 682.3 520.0 681.1 520.8 679.9 521.5 678.8 522.3 677.7 523.0 676.6 523.8 675.4 524.6 674.3 525.5 673.2 526.5 672.0 527.5 670.9 528.3 669.8 529.1 668.6 529.8 667.6 530.4 666.6 531.0 665.7 531.4 665.1 533.2 664.2 532.7 664.8 532.1 665.7 531.4 666.7 530.7 667.7 530.0 668.9 529.1 670.0 528.1 671.2 527.0 672.3 526.0 673.5 525.2 674.7 524.4 675.8 523.7 677.0 522.9 678.1 522.1 679.3 521.3 680.5 520.5 681.7 519.7 682.9 518.9 684.2 518.1 685.4 517.3 686.6 516.6 687.9 515.7 689.4 514.9 691.0 514.2 692.7 513.6 694.4 513.1 696.3 512.6 698.4 512.3 701.0 512.0 703.9 511.8 705.9 511.8 772.9Z M512.9 773.1 512.9 705.4 513.1 703.4 513.4 700.5 513.7 697.8 514.2 695.7 514.7 693.8 515.4 692.1 516.1 690.3 517.0 688.8 517.8 687.3 518.7 685.9 519.5 684.7 520.3 683.5 521.1 682.2 522.0 680.9 522.8 679.7 523.6 678.5 524.4 677.3 525.3 676.1 526.1 675.0 526.8 673.8 527.7 672.6 528.8 671.4 529.9 670.2 531.0 669.0 531.9 667.8 532.7 666.7 533.4 665.6 534.1 664.7 534.7 663.8 535.2 663.2 536.8 662.4 536.4 663.0 535.8 663.8 535.0 664.8 534.3 665.8 533.4 667.0 532.5 668.2 531.4 669.4 530.2 670.6 529.1 671.8 528.2 673.0 527.4 674.3 526.6 675.5 525.7 676.7 524.9 677.9 524.0 679.1 523.2 680.4 522.3 681.6 521.5 682.9 520.6 684.2 519.8 685.4 518.9 686.7 518.0 688.2 517.1 689.8 516.4 691.6 515.7 693.4 515.1 695.3 514.6 697.4 514.3 700.1 514.0 703.0 513.8 705.0 513.8 773.3Z M514.9 773.5 514.9 704.5 515.1 702.5 515.4 699.5 515.8 696.8 516.3 694.7 516.9 692.8 517.6 691.0 518.4 689.2 519.3 687.6 520.3 686.1 521.1 684.7 522.0 683.5 522.9 682.2 523.8 681.0 524.7 679.7 525.6 678.4 526.5 677.1 527.4 675.9 528.2 674.7 529.1 673.4 529.9 672.2 530.9 670.9 532.0 669.7 533.3 668.4 534.4 667.2 535.4 666.0 536.3 664.9 537.1 663.8 537.8 662.8 538.4 662.0 538.9 661.4 540.5 660.7 540.1 661.3 539.4 662.1 538.6 663.0 537.8 664.1 536.9 665.3 535.9 666.5 534.7 667.7 533.5 669.0 532.3 670.3 531.3 671.5 530.4 672.8 529.6 674.1 528.6 675.3 527.7 676.6 526.8 677.8 525.9 679.1 525.0 680.4 524.1 681.7 523.2 683.0 522.3 684.3 521.3 685.6 520.4 687.1 519.5 688.8 518.6 690.5 517.9 692.3 517.3 694.3 516.8 696.4 516.4 699.2 516.1 702.1 515.9 704.2 515.9 773.7Z M517.1 773.9 517.1 703.8 517.3 701.7 517.6 698.7 518.0 695.9 518.5 693.8 519.2 691.8 519.9 690.0 520.8 688.2 521.8 686.6 522.7 685.1 523.7 683.7 524.6 682.4 525.6 681.1 526.5 679.8 527.5 678.5 528.4 677.2 529.3 675.9 530.3 674.6 531.2 673.3 532.1 672.1 533.0 670.8 534.0 669.5 535.3 668.2 536.6 666.9 537.8 665.6 538.8 664.4 539.8 663.2 540.6 662.2 541.4 661.2 542.1 660.4 542.5 659.8 544.1 659.2 543.6 659.8 542.9 660.6 542.2 661.5 541.3 662.6 540.3 663.8 539.3 665.0 538.0 666.3 536.7 667.6 535.4 668.9 534.4 670.2 533.5 671.5 532.5 672.8 531.6 674.1 530.6 675.4 529.6 676.7 528.7 678.1 527.7 679.4 526.7 680.7 525.8 682.0 524.8 683.3 523.8 684.7 522.8 686.2 521.8 687.8 521.0 689.6 520.2 691.4 519.6 693.4 519.0 695.6 518.6 698.4 518.3 701.4 518.1 703.5 518.1 774.1Z M519.3 774.3 519.3 703.1 519.5 701.0 519.9 698.0 520.3 695.2 520.9 693.0 521.5 691.0 522.3 689.2 523.2 687.4 524.2 685.8 525.3 684.2 526.3 682.8 527.2 681.5 528.2 680.2 529.2 678.9 530.2 677.6 531.2 676.2 532.2 674.9 533.2 673.6 534.2 672.3 535.1 670.9 536.1 669.6 537.1 668.3 538.4 666.9 539.8 665.6 541.1 664.3 542.2 663.1 543.2 661.9 544.1 660.8 544.8 659.9 545.5 659.1 546.0 658.5 547.7 658.2 547.2 658.7 546.5 659.5 545.7 660.4 544.8 661.5 543.8 662.7 542.7 664.0 541.4 665.3 540.0 666.6 538.7 668.0 537.6 669.3 536.6 670.7 535.6 672.0 534.6 673.3 533.6 674.7 532.6 676.0 531.5 677.4 530.5 678.7 529.5 680.0 528.5 681.3 527.5 682.6 526.4 684.0 525.4 685.6 524.3 687.2 523.4 689.0 522.6 690.9 521.9 692.8 521.4 695.0 520.9 697.8 520.6 700.8 520.4 703.0 520.4 774.5Z M521.7 774.8 521.7 702.9 521.9 700.8 522.3 697.8 522.7 695.0 523.3 692.9 524.1 690.9 524.9 689.1 525.9 687.3 527.0 685.7 528.1 684.1 529.2 682.7 530.3 681.4 531.4 680.1 532.5 678.8 533.6 677.4 534.7 676.1 535.8 674.7 536.9 673.4 538.0 672.0 539.1 670.6 540.1 669.3 541.3 667.9 542.7 666.5 544.2 665.1 545.5 663.8 546.7 662.5 547.8 661.3 548.7 660.2 549.5 659.2 550.2 658.5 550.7 657.9 553.3 657.7 552.8 658.2 552.1 659.0 551.3 659.9 550.3 661.1 549.2 662.3 548.0 663.7 546.6 665.0 545.0 666.4 543.6 667.8 542.4 669.2 541.2 670.6 540.1 672.0 538.9 673.4 537.7 674.8 536.6 676.1 535.4 677.5 534.2 678.8 533.0 680.2 531.9 681.5 530.7 682.8 529.5 684.2 528.4 685.8 527.2 687.4 526.2 689.2 525.3 691.0 524.5 692.9 523.9 695.0 523.4 697.8 523.0 700.7 522.8 702.8 522.8 775.0Z M524.2 775.3 524.2 702.7 524.4 700.7 524.8 697.8 525.3 695.1 526.0 693.0 526.8 691.1 527.8 689.3 528.9 687.6 530.1 685.9 531.4 684.4 532.7 682.9 534.0 681.6 535.2 680.3 536.5 679.0 537.8 677.6 539.1 676.2 540.4 674.8 541.6 673.4 542.9 672.0 544.2 670.6 545.4 669.2 546.7 667.7 548.3 666.3 549.9 664.8 551.4 663.5 552.7 662.1 553.9 660.7 554.9 659.6 555.8 658.6 556.5 657.9 556.9 657.4 560.1 657.1 559.6 657.6 558.9 658.3 558.0 659.3 556.9 660.5 555.7 661.8 554.3 663.3 552.7 664.7 551.0 666.2 549.4 667.6 548.0 669.1 546.7 670.6 545.3 672.0 544.0 673.5 542.6 674.9 541.2 676.3 539.8 677.7 538.5 679.1 537.1 680.4 535.7 681.8 534.3 683.1 533.0 684.5 531.6 686.0 530.3 687.7 529.1 689.4 528.1 691.2 527.2 693.0 526.5 695.1 526.0 697.7 525.6 700.6 525.3 702.6 525.3 775.6Z M526.8 775.9 526.8 702.5 527.1 700.5 527.5 697.7 528.1 695.1 528.9 693.1 529.8 691.3 530.9 689.5 532.2 687.8 533.6 686.2 535.0 684.6 536.5 683.2 538.0 681.9 539.6 680.6 541.1 679.2 542.6 677.8 544.1 676.4 545.6 675.0 547.1 673.5 548.6 672.0 550.1 670.5 551.6 669.0 553.1 667.5 554.8 666.0 556.6 664.5 558.3 663.0 559.8 661.5 561.1 660.1 562.3 658.8 563.2 657.9 563.9 657.2 564.3 656.7 567.9 656.3 567.5 656.8 566.8 657.5 565.8 658.5 564.6 659.7 563.2 661.2 561.6 662.8 559.9 664.3 558.0 665.8 556.2 667.4 554.6 668.9 553.0 670.5 551.4 672.0 549.7 673.6 548.1 675.0 546.5 676.5 544.9 677.9 543.2 679.3 541.6 680.7 540.0 682.1 538.3 683.4 536.7 684.8 535.2 686.3 533.7 688.0 532.4 689.7 531.2 691.4 530.2 693.2 529.3 695.1 528.7 697.7 528.3 700.4 528.0 702.4 528.0 776.1Z M529.5 776.5 529.5 702.2 529.8 700.3 530.3 697.7 531.0 695.2 531.9 693.2 533.0 691.5 534.3 689.8 535.7 688.2 537.3 686.5 539.0 685.0 540.7 683.6 542.5 682.3 544.4 680.9 546.1 679.5 547.9 678.1 549.7 676.6 551.5 675.1 553.3 673.6 555.1 672.1 556.9 670.5 558.6 668.8 560.4 667.2 562.4 665.6 564.4 664.0 566.2 662.4 567.9 660.8 569.4 659.2 570.7 657.9 571.7 657.0 572.4 656.3 572.9 655.8 577.0 655.4 576.5 655.8 575.8 656.5 574.8 657.5 573.5 658.8 571.8 660.5 570.0 662.2 568.1 663.8 566.0 665.4 564.0 667.1 562.0 668.7 560.1 670.4 558.2 672.1 556.3 673.7 554.3 675.2 552.4 676.7 550.5 678.2 548.6 679.7 546.6 681.1 544.7 682.4 542.7 683.8 540.9 685.2 539.1 686.7 537.4 688.3 535.8 690.0 534.5 691.6 533.3 693.3 532.3 695.2 531.6 697.6 531.1 700.3 530.8 702.1 530.8 776.8Z M532.4 777.1 532.4 701.9 532.7 700.1 533.2 697.6 534.0 695.2 535.1 693.4 536.4 691.8 537.8 690.2 539.5 688.6 541.3 687.0 543.3 685.4 545.3 684.0 547.5 682.7 549.6 681.3 551.7 679.9 553.9 678.4 556.0 676.9 558.1 675.3 560.2 673.7 562.3 672.1 564.4 670.4 566.5 668.6 568.6 666.9 570.8 665.2 573.1 663.5 575.1 661.8 577.0 660.0 578.8 658.3 580.3 656.9 581.3 655.9 582.0 655.2 582.4 654.8 587.1 654.3 586.6 654.7 585.9 655.4 584.9 656.3 583.4 657.8 581.5 659.7 579.4 661.5 577.3 663.2 574.9 665.0 572.6 666.7 570.3 668.5 568.1 670.3 565.8 672.1 563.5 673.8 561.2 675.4 559.0 677.0 556.7 678.6 554.4 680.0 552.1 681.5 549.8 682.8 547.5 684.2 545.3 685.6 543.3 687.2 541.3 688.8 539.5 690.4 538.0 691.9 536.6 693.5 535.4 695.3 534.6 697.6 534.1 700.0 533.7 701.8 533.7 777.4Z M535.5 777.8 535.5 701.6 535.8 699.9 536.4 697.5 537.3 695.3 538.5 693.6 540.0 692.1 541.7 690.6 543.6 689.0 545.7 687.4 548.0 685.9 550.4 684.5 552.9 683.1 555.4 681.7 557.9 680.3 560.4 678.8 562.9 677.2 565.4 675.6 567.9 673.9 570.4 672.1 572.9 670.3 575.3 668.4 577.8 666.5 580.3 664.7 582.8 662.9 585.1 661.1 587.3 659.1 589.4 657.2 591.0 655.7 592.1 654.6 592.8 654.0 593.2 653.6 598.3 653.0 597.9 653.4 597.2 654.0 596.1 655.1 594.4 656.7 592.2 658.7 589.9 660.7 587.4 662.6 584.8 664.4 582.2 666.3 579.5 668.3 576.9 670.2 574.2 672.1 571.5 673.9 568.9 675.7 566.2 677.3 563.5 678.9 560.9 680.4 558.2 681.9 555.5 683.3 552.8 684.7 550.2 686.1 547.8 687.6 545.6 689.2 543.5 690.8 541.7 692.3 540.1 693.7 538.8 695.4 537.9 697.5 537.3 699.8 536.9 701.4 536.9 778.1Z M538.7 778.5 538.7 701.2 539.1 699.6 539.8 697.4 540.8 695.4 542.2 693.9 543.9 692.5 545.9 691.0 548.1 689.5 550.5 687.9 553.1 686.4 555.9 685.0 558.8 683.6 561.8 682.2 564.7 680.7 567.6 679.2 570.5 677.5 573.4 675.8 576.3 674.0 579.2 672.1 582.1 670.2 585.0 668.1 587.9 666.1 590.7 664.1 593.5 662.2 596.1 660.2 598.6 658.1 601.0 656.0 602.8 654.3 604.0 653.3 604.6 652.7 605.0 652.3 610.6 651.7 610.2 652.0 609.5 652.6 608.4 653.7 606.4 655.4 604.0 657.6 601.3 659.9 598.6 661.9 595.6 663.9 592.6 665.9 589.6 668.0 586.5 670.1 583.3 672.1 580.2 674.1 577.1 675.9 574.1 677.7 571.0 679.3 567.9 680.9 564.8 682.4 561.6 683.9 558.4 685.2 555.5 686.7 552.7 688.2 550.2 689.7 547.9 691.3 545.8 692.6 543.9 694.0 542.4 695.4 541.4 697.4 540.7 699.5 540.2 701.0 540.2 778.9Z M542.2 779.3 542.2 700.7 542.7 699.3 543.4 697.3 544.5 695.5 546.1 694.1 548.1 692.8 550.4 691.5 552.9 690.0 555.6 688.5 558.5 687.0 561.8 685.6 565.2 684.2 568.6 682.7 571.9 681.2 575.3 679.6 578.6 677.9 582.0 676.1 585.3 674.2 588.7 672.2 592.1 670.0 595.5 667.8 598.7 665.6 601.9 663.5 605.1 661.5 608.0 659.4 610.8 657.0 613.5 654.7 615.5 652.8 616.8 651.8 617.4 651.2 617.8 650.9 623.7 650.2 623.3 650.5 622.6 651.1 621.4 652.2 619.2 654.1 616.4 656.5 613.4 659.0 610.4 661.1 607.1 663.3 603.7 665.4 600.3 667.7 596.7 670.0 593.1 672.2 589.5 674.2 586.0 676.2 582.4 678.1 578.9 679.8 575.3 681.4 571.7 682.9 568.1 684.4 564.5 685.8 561.1 687.3 558.0 688.8 555.1 690.3 552.4 691.7 550.1 693.0 547.9 694.2 546.2 695.5 545.1 697.3 544.3 699.2 543.8 700.5 543.8 779.6Z M545.9 780.0 545.9 700.3 546.4 699.0 547.2 697.2 548.5 695.6 550.3 694.4 552.6 693.2 555.1 692.0 557.9 690.6 561.0 689.1 564.3 687.6 568.0 686.2 571.9 684.7 575.8 683.2 579.6 681.7 583.4 680.0 587.2 678.3 591.0 676.4 594.8 674.3 598.7 672.2 602.5 669.9 606.4 667.5 610.1 665.2 613.7 662.9 617.1 660.7 620.4 658.4 623.6 655.9 626.5 653.3 628.8 651.3 630.1 650.2 630.8 649.7 631.1 649.4 637.1 648.7 636.8 649.0 636.2 649.5 634.8 650.6 632.4 652.7 629.3 655.4 626.0 658.0 622.6 660.4 619.0 662.6 615.3 665.0 611.3 667.4 607.3 669.9 603.2 672.2 599.2 674.4 595.1 676.5 591.1 678.4 587.1 680.2 583.1 681.9 579.0 683.5 574.9 685.0 570.8 686.4 567.0 687.9 563.5 689.4 560.2 690.9 557.3 692.2 554.6 693.4 552.2 694.5 550.3 695.6 549.0 697.2 548.2 698.9 547.6 700.1 547.6 780.3Z M549.9 780.7 549.9 699.8 550.4 698.7 551.3 697.2 552.7 695.7 554.7 694.6 557.2 693.6 560.1 692.5 563.2 691.2 566.6 689.7 570.3 688.2 574.4 686.7 578.8 685.3 583.2 683.8 587.4 682.2 591.7 680.5 596.0 678.7 600.3 676.6 604.5 674.5 608.8 672.2 613.2 669.8 617.5 667.2 621.7 664.7 625.6 662.3 629.4 660.0 633.0 657.5 636.5 654.8 639.8 652.0 642.3 649.8 643.7 648.7 644.3 648.2 644.6 647.9 650.5 647.2 650.2 647.5 649.6 648.0 648.2 649.2 645.6 651.4 642.1 654.3 638.5 657.1 634.8 659.6 630.8 662.1 626.7 664.5 622.4 667.1 617.8 669.7 613.3 672.2 608.8 674.6 604.4 676.8 599.9 678.8 595.4 680.7 590.9 682.4 586.4 684.0 581.9 685.5 577.3 687.0 573.0 688.4 569.2 689.9 565.6 691.4 562.4 692.7 559.4 693.8 556.8 694.7 554.6 695.7 553.2 697.1 552.3 698.6 551.7 699.6 551.7 781.0Z M554.1 781.4 554.1 699.4 554.7 698.4 555.7 697.1 557.2 695.8 559.4 694.8 562.1 694.0 565.3 693.0 568.6 691.7 572.4 690.2 576.4 688.7 580.9 687.3 585.7 685.8 590.5 684.3 595.2 682.6 599.9 680.9 604.7 679.0 609.4 676.9 614.1 674.6 618.8 672.2 623.6 669.7 628.3 667.0 632.9 664.3 637.2 661.7 641.3 659.3 645.1 656.7 649.0 653.7 652.6 650.7 655.3 648.4 656.8 647.2 657.3 646.8 657.6 646.5 663.1 646.0 662.8 646.2 662.2 646.7 660.7 647.9 657.9 650.2 654.2 653.3 650.2 656.4 646.2 659.0 642.0 661.5 637.6 664.1 632.9 666.8 627.9 669.6 623.0 672.3 618.1 674.7 613.2 677.0 608.4 679.1 603.5 681.1 598.6 682.8 593.7 684.5 588.8 686.0 583.8 687.5 579.1 688.9 574.9 690.4 571.1 691.9 567.6 693.2 564.4 694.1 561.5 694.9 559.2 695.8 557.7 697.0 556.7 698.3 556.1 699.3 556.1 781.6Z M558.6 782.0 558.6 699.1 559.2 698.2 560.3 697.0 561.9 695.9 564.2 695.0 567.2 694.3 570.5 693.4 574.1 692.1 578.1 690.7 582.5 689.2 587.3 687.7 592.4 686.2 597.6 684.7 602.7 683.0 607.7 681.2 612.8 679.3 617.8 677.1 622.9 674.8 627.9 672.3 633.1 669.6 638.2 666.7 643.1 663.9 647.7 661.3 652.0 658.7 656.1 656.0 660.2 652.9 664.1 649.7 667.0 647.3 668.5 646.1 669.0 645.6 669.3 645.4 673.3 644.9 673.0 645.1 672.4 645.6 670.9 646.8 668.0 649.2 664.1 652.5 659.9 655.6 655.7 658.4 651.3 661.0 646.7 663.7 641.7 666.5 636.5 669.4 631.2 672.1 626.1 674.7 621.0 677.1 615.8 679.2 610.7 681.2 605.5 683.0 600.4 684.7 595.1 686.3 589.8 687.8 585.0 689.2 580.5 690.7 576.5 692.1 572.8 693.4 569.4 694.3 566.4 695.0 564.0 695.8 562.4 697.0 561.4 698.1 560.7 699.0 560.7 782.2Z M563.4 782.5 563.4 698.9 564.1 698.0 565.1 696.8 566.8 695.7 569.2 694.9 572.3 694.1 575.7 693.2 579.4 691.9 583.5 690.4 587.9 688.9 592.9 687.4 598.2 685.9 603.5 684.3 608.7 682.6 613.9 680.8 619.1 678.8 624.3 676.5 629.5 674.1 634.7 671.5 640.0 668.7 645.3 665.8 650.3 662.9 655.0 660.2 659.4 657.5 663.6 654.7 667.8 651.5 671.8 648.1 674.8 645.6 676.3 644.4 676.8 644.0 677.1 643.7 680.4 642.6 680.1 642.8 679.6 643.3 678.0 644.5 675.0 647.1 671.0 650.5 666.8 653.7 662.5 656.6 658.0 659.3 653.3 662.1 648.2 665.1 642.9 668.1 637.6 670.9 632.3 673.5 627.1 676.0 621.8 678.3 616.6 680.3 611.3 682.2 606.1 683.9 600.7 685.6 595.3 687.1 590.3 688.7 585.8 690.2 581.7 691.7 578.0 693.0 574.5 694.0 571.4 694.7 569.0 695.5 567.3 696.7 566.3 697.9 565.6 698.8 565.6 782.7Z M568.5 783.0 568.5 698.7 569.1 697.8 570.2 696.5 571.9 695.3 574.4 694.5 577.5 693.7 581.0 692.7 584.8 691.4 589.0 689.8 593.6 688.2 598.6 686.7 604.1 685.1 609.5 683.4 614.8 681.6 620.2 679.7 625.5 677.6 630.8 675.2 636.1 672.7 641.5 670.0 646.9 667.0 652.3 663.9 657.4 660.9 662.3 658.0 666.8 655.2 671.1 652.3 675.4 648.9 679.5 645.4 682.5 642.8 684.1 641.5 684.6 641.1 684.8 640.9 688.5 639.4 688.3 639.6 687.8 640.0 686.2 641.3 683.2 644.0 679.1 647.6 674.7 651.0 670.3 654.0 665.7 656.9 660.8 659.8 655.6 663.0 650.1 666.1 644.6 669.1 639.3 671.9 633.9 674.5 628.5 676.9 623.1 679.1 617.7 681.0 612.3 682.9 606.8 684.6 601.3 686.3 596.1 687.8 591.5 689.5 587.3 691.1 583.4 692.4 579.9 693.4 576.7 694.2 574.2 695.1 572.4 696.3 571.4 697.6 570.7 698.6 570.7 783.2Z M573.6 783.4 573.6 698.4 574.3 697.4 575.4 696.1 577.2 694.8 579.7 693.9 583.0 693.1 586.6 692.1 590.5 690.6 594.8 689.0 599.5 687.3 604.7 685.7 610.4 684.0 616.0 682.2 621.5 680.2 627.0 678.2 632.4 676.0 637.9 673.5 643.4 670.8 648.9 667.9 654.5 664.8 660.1 661.6 665.4 658.3 670.3 655.3 675.0 652.3 679.5 649.2 683.9 645.6 688.1 641.9 691.3 639.1 692.8 637.8 693.3 637.4 693.5 637.2 697.6 635.4 697.3 635.6 696.9 636.0 695.3 637.4 692.1 640.2 687.9 644.0 683.4 647.7 678.9 650.9 674.1 654.0 669.0 657.1 663.6 660.4 658.0 663.8 652.3 667.0 646.8 669.9 641.2 672.7 635.6 675.2 630.1 677.5 624.5 679.6 618.9 681.6 613.2 683.4 607.5 685.2 602.2 686.9 597.4 688.6 593.1 690.3 589.1 691.7 585.4 692.8 582.1 693.7 579.5 694.6 577.8 695.9 576.7 697.3 575.9 698.3 575.9 783.6Z M579.0 783.8 579.0 698.1 579.7 697.1 580.8 695.6 582.6 694.3 585.3 693.3 588.6 692.4 592.4 691.3 596.4 689.8 600.9 688.1 605.7 686.3 611.2 684.5 617.0 682.7 622.8 680.8 628.5 678.7 634.1 676.6 639.8 674.2 645.5 671.6 651.2 668.7 656.9 665.6 662.6 662.3 668.4 658.8 673.9 655.4 679.0 652.2 683.9 649.0 688.5 645.7 693.1 641.9 697.4 637.9 700.7 634.9 702.2 633.6 702.7 633.2 702.9 633.0 707.2 631.0 707.0 631.2 706.5 631.6 704.9 633.0 701.6 636.1 697.2 640.1 692.6 644.1 687.9 647.4 683.0 650.7 677.7 654.1 672.2 657.6 666.3 661.2 660.4 664.6 654.7 667.7 648.9 670.7 643.1 673.4 637.4 675.8 631.6 678.0 625.8 680.1 619.9 682.1 614.0 684.0 608.5 685.8 603.6 687.6 599.1 689.4 595.0 691.0 591.2 692.1 587.8 693.0 585.1 694.0 583.2 695.4 582.1 696.9 581.4 697.9 581.4 783.9Z M584.5 784.1 584.5 697.7 585.2 696.6 586.4 695.1 588.3 693.7 591.0 692.7 594.5 691.7 598.3 690.5 602.5 688.9 607.2 687.1 612.2 685.2 617.8 683.3 623.8 681.4 629.8 679.3 635.7 677.2 641.6 674.9 647.5 672.3 653.4 669.5 659.2 666.4 665.1 663.2 671.1 659.7 677.1 656.0 682.7 652.3 688.1 648.9 693.1 645.5 697.9 642.0 702.6 637.9 707.1 633.7 710.5 630.5 712.1 629.1 712.5 628.7 712.7 628.5 717.0 626.6 716.8 626.8 716.4 627.2 714.8 628.7 711.4 631.9 706.8 636.2 702.0 640.4 697.1 644.0 692.0 647.4 686.6 651.0 680.9 654.7 674.8 658.5 668.7 662.2 662.8 665.5 656.8 668.6 650.9 671.5 644.9 674.1 638.9 676.5 633.0 678.7 626.9 680.8 620.8 682.8 615.1 684.7 610.0 686.6 605.3 688.5 601.0 690.2 597.1 691.4 593.6 692.4 590.8 693.4 588.9 694.9 587.7 696.5 587.0 697.6 587.0 784.3Z M590.2 784.4 590.2 697.4 591.0 696.3 592.2 694.6 594.1 693.1 596.9 692.0 600.5 691.0 604.5 689.8 608.8 688.1 613.6 686.1 618.8 684.1 624.6 682.1 630.8 680.1 637.0 677.9 643.1 675.6 649.1 673.2 655.2 670.5 661.3 667.6 667.3 664.3 673.4 660.9 679.6 657.2 685.7 653.2 691.6 649.4 697.1 645.7 702.3 642.1 707.2 638.4 712.2 634.1 716.8 629.7 720.2 626.3 721.8 624.8 722.3 624.5 722.4 624.3 726.6 622.6 726.4 622.8 726.0 623.2 724.4 624.7 720.9 628.1 716.2 632.6 711.2 637.0 706.2 640.8 701.0 644.5 695.4 648.2 689.5 652.2 683.2 656.2 677.0 660.0 670.8 663.5 664.7 666.8 658.6 669.8 652.4 672.6 646.3 675.0 640.1 677.4 633.8 679.6 627.5 681.7 621.7 683.7 616.4 685.8 611.6 687.8 607.2 689.5 603.2 690.8 599.6 691.8 596.7 692.9 594.7 694.5 593.5 696.1 592.7 697.3 592.7 784.6Z M596.1 784.8 596.1 697.1 596.9 695.9 598.1 694.2 600.1 692.7 603.0 691.5 606.6 690.5 610.7 689.2 615.2 687.4 620.1 685.3 625.4 683.2 631.4 681.2 637.7 679.0 644.1 676.8 650.3 674.4 656.6 671.8 662.8 669.1 669.0 665.9 675.2 662.5 681.5 659.0 687.8 655.1 694.1 651.0 700.1 646.9 705.8 643.1 711.1 639.4 716.2 635.5 721.2 631.0 726.0 626.3 729.5 622.9 731.1 621.3 731.5 620.9 731.7 620.8 735.4 619.6 735.3 619.8 734.9 620.1 733.2 621.7 729.7 625.2 724.9 629.9 719.8 634.5 714.7 638.4 709.3 642.2 703.6 646.1 697.6 650.2 691.2 654.4 684.8 658.3 678.5 662.0 672.3 665.4 666.0 668.6 659.7 671.4 653.4 674.0 647.1 676.4 640.7 678.7 634.3 680.8 628.3 682.9 622.9 685.1 618.0 687.2 613.5 689.0 609.4 690.3 605.7 691.4 602.7 692.5 600.7 694.1 599.5 695.8 598.7 697.0 598.7 784.9Z M602.1 785.1 602.1 696.9 602.9 695.7 604.2 694.0 606.2 692.4 609.1 691.2 612.8 690.1 617.0 688.8 621.5 686.9 626.5 684.8 631.9 682.6 637.9 680.5 644.3 678.3 650.8 676.0 657.1 673.5 663.4 670.9 669.7 668.0 676.0 664.8 682.3 661.3 688.6 657.6 695.0 653.6 701.4 649.3 707.5 645.2 713.2 641.3 718.6 637.4 723.7 633.4 728.8 628.7 733.7 623.9 737.2 620.4 738.9 618.8 739.2 618.4 739.4 618.3 742.2 616.9 742.1 617.1 741.7 617.4 740.0 619.0 736.5 622.7 731.7 627.5 726.5 632.3 721.4 636.3 716.0 640.2 710.3 644.2 704.2 648.5 697.8 652.8 691.4 656.9 685.1 660.6 678.8 664.2 672.4 667.4 666.1 670.4 659.8 673.0 653.5 675.5 647.1 677.9 640.6 680.1 634.6 682.3 629.2 684.5 624.2 686.7 619.7 688.5 615.6 689.9 611.9 691.0 608.9 692.2 606.9 693.9 605.6 695.6 604.8 696.9 604.8 785.2Z M608.4 785.4 608.4 696.7 609.2 695.5 610.5 693.6 612.5 691.9 615.4 690.7 619.1 689.6 623.3 688.2 627.8 686.3 632.8 684.1 638.2 681.8 644.2 679.6 650.7 677.3 657.1 674.8 663.5 672.3 669.8 669.5 676.1 666.5 682.4 663.2 688.7 659.5 695.0 655.7 701.5 651.5 707.9 647.1 714.0 642.7 719.7 638.6 725.1 634.6 730.3 630.4 735.4 625.6 740.2 620.6 743.8 616.8 745.4 615.2 745.8 614.8 745.9 614.7 748.8 612.7 748.7 612.9 748.4 613.2 746.7 614.9 743.2 618.7 738.3 623.8 733.2 628.8 728.1 633.0 722.6 637.2 716.9 641.4 710.8 645.8 704.4 650.3 697.9 654.6 691.6 658.6 685.3 662.3 679.0 665.7 672.6 668.8 666.3 671.6 660.0 674.2 653.5 676.7 647.0 679.1 641.0 681.3 635.6 683.7 630.6 685.9 626.1 687.9 621.9 689.3 618.2 690.5 615.2 691.7 613.2 693.5 612.0 695.3 611.2 696.6 611.2 785.5Z M614.8 785.6 614.8 696.4 615.6 695.1 616.9 693.2 618.9 691.4 621.8 690.1 625.6 688.9 629.7 687.4 634.3 685.4 639.3 683.1 644.7 680.7 650.7 678.3 657.2 675.9 663.7 673.3 670.0 670.6 676.4 667.7 682.7 664.5 689.1 661.0 695.4 657.2 701.7 653.1 708.2 648.6 714.6 644.0 720.8 639.4 726.5 635.1 731.9 630.8 737.0 626.4 742.2 621.3 747.1 616.0 750.6 612.0 752.2 610.3 752.6 610.0 752.7 609.9 755.7 607.5 755.6 607.6 755.3 607.9 753.7 609.7 750.1 613.7 745.2 619.1 740.1 624.4 734.9 628.9 729.5 633.3 723.8 637.7 717.6 642.4 711.2 647.2 704.7 651.8 698.4 656.0 692.0 659.9 685.7 663.6 679.3 666.8 673.0 669.8 666.6 672.6 660.1 675.2 653.6 677.7 647.6 680.1 642.1 682.6 637.1 685.0 632.6 687.0 628.4 688.6 624.7 689.8 621.7 691.1 619.7 693.0 618.5 694.9 617.6 696.3 617.6 785.7Z M621.4 785.8 621.4 696.1 622.2 694.7 623.4 692.6 625.5 690.7 628.4 689.3 632.2 688.1 636.4 686.5 640.9 684.4 645.9 681.9 651.4 679.3 657.4 676.8 663.9 674.3 670.5 671.5 676.8 668.6 683.2 665.6 689.5 662.2 695.9 658.4 702.3 654.4 708.6 650.0 715.1 645.3 721.6 640.4 727.7 635.5 733.5 630.9 738.9 626.3 744.1 621.7 749.3 616.2 754.1 610.6 757.7 606.4 759.3 604.6 759.6 604.3 759.7 604.2 762.8 601.6 762.7 601.7 762.4 602.0 760.9 603.8 757.3 608.1 752.4 613.9 747.2 619.5 742.0 624.3 736.6 629.0 730.8 633.7 724.6 638.7 718.2 643.8 711.7 648.6 705.3 653.1 698.9 657.3 692.6 661.1 686.2 664.6 679.8 667.7 673.5 670.7 666.9 673.5 660.4 676.2 654.3 678.7 648.9 681.3 643.9 683.9 639.3 686.1 635.1 687.7 631.4 689.0 628.4 690.4 626.4 692.4 625.1 694.5 624.3 696.0 624.3 785.9Z M628.1 786.0 628.1 695.8 628.9 694.2 630.2 692.1 632.2 690.0 635.2 688.6 639.0 687.2 643.2 685.6 647.7 683.3 652.7 680.6 658.2 677.9 664.3 675.3 670.8 672.6 677.4 669.6 683.8 666.6 690.2 663.3 696.5 659.7 702.9 655.7 709.3 651.4 715.7 646.8 722.2 641.8 728.7 636.5 734.9 631.3 740.6 626.4 746.1 621.6 751.3 616.7 756.5 610.9 761.4 604.9 765.0 600.5 766.6 598.6 766.8 598.3 766.9 598.2 770.1 595.6 770.0 595.7 769.8 596.0 768.2 597.9 764.6 602.5 759.7 608.6 754.5 614.5 749.3 619.6 743.8 624.6 738.0 629.6 731.8 634.9 725.3 640.3 718.8 645.4 712.4 650.1 706.0 654.6 699.6 658.7 693.2 662.4 686.8 665.7 680.4 668.8 673.9 671.8 667.3 674.6 661.3 677.3 655.8 680.1 650.7 682.8 646.2 685.2 642.0 686.9 638.2 688.2 635.2 689.7 633.2 691.8 631.9 694.0 631.1 695.6 631.1 786.1Z M635.0 786.2 635.0 695.4 635.8 693.8 637.1 691.5 639.1 689.4 642.1 687.8 645.9 686.4 650.1 684.6 654.7 682.2 659.7 679.5 665.2 676.6 671.3 673.8 677.9 670.9 684.5 667.8 690.9 664.6 697.3 661.2 703.7 657.4 710.1 653.2 716.5 648.6 722.9 643.7 729.4 638.4 736.0 632.9 742.2 627.4 748.0 622.2 753.5 617.2 758.7 611.9 763.9 605.8 768.8 599.5 772.4 594.8 774.0 592.8 774.2 592.5 774.3 592.4 777.5 590.2 777.5 590.3 777.2 590.6 775.6 592.6 772.0 597.3 767.1 603.8 761.9 610.0 756.7 615.4 751.2 620.6 745.4 625.9 739.2 631.4 732.6 637.1 726.1 642.5 719.7 647.5 713.3 652.1 706.9 656.5 700.4 660.3 694.0 663.8 687.6 667.1 681.0 670.3 674.5 673.2 668.3 676.1 662.8 679.0 657.8 681.8 653.2 684.3 649.0 686.1 645.2 687.5 642.2 689.1 640.2 691.3 638.9 693.6 638.1 695.3 638.1 786.3Z M642.1 786.4 642.1 695.1 642.9 693.5 644.2 691.1 646.2 688.8 649.2 687.2 653.0 685.7 657.2 683.9 661.8 681.4 666.9 678.5 672.4 675.5 678.5 672.6 685.1 669.6 691.7 666.3 698.1 663.0 704.6 659.4 711.0 655.4 717.4 651.0 723.8 646.2 730.3 641.1 736.8 635.6 743.3 629.8 749.6 624.1 755.4 618.7 760.9 613.4 766.1 607.9 771.3 601.5 776.3 594.9 779.9 590.1 781.4 588.1 781.7 587.7 781.7 587.7 785.0 586.1 785.0 586.2 784.7 586.5 783.2 588.5 779.6 593.5 774.6 600.1 769.4 606.6 764.2 612.2 758.6 617.6 752.8 623.0 746.6 628.8 740.0 634.7 733.5 640.3 727.1 645.5 720.6 650.3 714.2 654.8 707.8 658.8 701.3 662.4 694.9 665.9 688.3 669.1 681.7 672.2 675.6 675.1 670.1 678.1 665.0 681.1 660.4 683.6 656.2 685.5 652.4 687.0 649.4 688.7 647.3 690.9 646.0 693.3 645.2 695.0 645.2 786.5Z M649.3 786.6 649.3 694.9 650.2 693.1 651.4 690.7 653.5 688.4 656.5 686.7 660.3 685.2 664.5 683.3 669.1 680.7 674.1 677.8 679.6 674.7 685.8 671.7 692.3 668.6 698.9 665.3 705.3 661.8 711.8 658.2 718.2 654.1 724.6 649.6 731.0 644.7 737.5 639.4 744.0 633.8 750.5 627.8 756.7 622.0 762.6 616.4 768.1 611.0 773.3 605.4 778.5 598.8 783.4 592.0 787.0 587.0 788.6 585.0 788.8 584.7 788.8 584.6 791.5 583.2 791.4 583.3 791.2 583.6 789.7 585.6 786.1 590.7 781.2 597.5 776.0 604.2 770.8 609.9 765.3 615.4 759.5 620.9 753.3 626.9 746.8 632.9 740.3 638.6 733.9 643.9 727.5 648.8 721.1 653.4 714.7 657.5 708.3 661.2 701.9 664.7 695.4 668.1 688.8 671.2 682.7 674.2 677.3 677.3 672.2 680.3 667.7 682.9 663.4 684.9 659.7 686.4 656.7 688.1 654.7 690.4 653.4 692.9 652.6 694.6 652.6 786.7Z M656.8 786.8 656.8 694.2 657.6 692.4 658.9 689.9 660.9 687.5 663.9 685.8 667.6 684.3 671.8 682.3 676.3 679.7 681.3 676.6 686.8 673.5 692.8 670.4 699.3 667.2 705.8 663.8 712.2 660.2 718.5 656.5 724.9 652.3 731.2 647.6 737.6 642.6 743.9 637.2 750.4 631.4 756.9 625.3 763.0 619.2 768.8 613.5 774.2 608.0 779.3 602.2 784.5 595.4 789.4 588.5 793.0 583.3 794.5 581.2 794.7 580.9 794.7 580.9 797.2 578.8 797.1 578.8 796.9 579.1 795.4 581.2 791.9 586.4 787.0 593.5 781.9 600.4 776.8 606.2 771.4 611.9 765.7 617.7 759.5 623.8 753.1 630.0 746.7 635.9 740.4 641.4 734.1 646.5 727.8 651.2 721.5 655.5 715.1 659.3 708.8 663.0 702.4 666.4 695.9 669.6 689.9 672.7 684.5 675.9 679.5 679.1 675.0 681.8 670.8 683.7 667.1 685.3 664.2 687.0 662.2 689.4 660.9 692.0 660.1 693.8 660.1 786.9Z M664.5 787.0 664.5 693.3 665.3 691.4 666.5 688.8 668.5 686.4 671.4 684.6 675.1 683.0 679.2 681.0 683.7 678.2 688.6 675.0 694.0 671.8 699.9 668.5 706.3 665.3 712.7 661.7 719.0 658.0 725.2 654.1 731.5 649.8 737.8 645.0 744.0 639.7 750.3 634.1 756.6 628.1 763.0 621.8 769.1 615.5 774.7 609.6 780.1 603.8 785.1 597.8 790.2 590.8 795.0 583.6 798.6 578.2 800.0 576.1 800.2 575.8 800.2 575.8 802.6 573.4 802.6 573.4 802.5 573.6 801.0 575.8 797.5 581.3 792.7 588.6 787.7 595.7 782.6 601.8 777.3 607.7 771.7 613.7 765.7 620.1 759.4 626.6 753.1 632.7 746.8 638.4 740.6 643.7 734.4 648.6 728.2 653.0 722.0 657.0 715.8 660.8 709.4 664.3 703.1 667.7 697.2 670.9 691.8 674.3 686.9 677.5 682.5 680.3 678.4 682.4 674.8 684.0 671.9 685.8 669.9 688.3 668.7 690.9 667.9 692.8 667.9 787.0Z M672.3 787.1 672.3 692.3 673.1 690.3 674.3 687.6 676.3 685.1 679.2 683.3 682.8 681.6 686.8 679.5 691.2 676.6 696.1 673.3 701.3 669.9 707.2 666.6 713.5 663.2 719.8 659.5 726.0 655.7 732.1 651.6 738.3 647.1 744.4 642.1 750.6 636.6 756.7 630.8 763.0 624.6 769.2 618.0 775.2 611.5 780.7 605.3 786.0 599.3 791.0 593.1 796.0 585.8 800.7 578.3 804.2 572.8 805.6 570.5 805.8 570.2 805.8 570.2 808.4 568.0 808.4 568.0 808.2 568.2 806.8 570.5 803.3 576.1 798.7 583.7 793.7 591.2 788.7 597.5 783.5 603.6 778.0 609.8 772.0 616.4 765.8 623.1 759.6 629.5 753.5 635.4 747.4 640.9 741.3 646.0 735.2 650.6 729.1 654.7 723.0 658.6 716.7 662.3 710.5 665.8 704.6 669.2 699.4 672.6 694.6 676.0 690.2 678.9 686.2 681.0 682.6 682.7 679.8 684.6 677.8 687.2 676.6 689.9 675.8 691.9 675.8 787.2Z M680.4 787.3 680.4 691.4 681.2 689.4 682.4 686.6 684.3 684.0 687.2 682.1 690.7 680.4 694.7 678.2 699.1 675.2 703.8 671.8 709.0 668.3 714.8 664.9 721.0 661.3 727.2 657.6 733.3 653.6 739.3 649.4 745.4 644.7 751.4 639.6 757.5 633.9 763.6 628.0 769.7 621.5 775.9 614.7 781.8 608.0 787.2 601.6 792.4 595.4 797.3 589.0 802.3 581.4 806.9 573.7 810.3 568.0 811.8 565.7 811.9 565.4 811.9 565.4 814.8 563.9 814.9 563.9 814.7 564.1 813.3 566.4 809.9 572.2 805.3 580.0 800.3 587.6 795.5 594.1 790.3 600.4 784.8 606.8 779.0 613.6 772.9 620.5 766.7 627.0 760.7 633.1 754.7 638.8 748.6 644.0 742.6 648.7 736.6 652.9 730.5 657.0 724.4 660.8 718.2 664.3 712.5 667.8 707.3 671.3 702.5 674.8 698.2 677.8 694.3 680.0 690.7 681.7 687.9 683.6 686.0 686.3 684.8 689.1 684.0 691.1 684.0 787.4Z M688.7 787.5 688.7 690.9 689.5 688.9 690.7 686.1 692.6 683.4 695.4 681.4 698.9 679.7 702.8 677.4 707.0 674.4 711.7 671.0 716.8 667.4 722.5 663.9 728.6 660.3 734.7 656.4 740.7 652.4 746.7 648.1 752.6 643.4 758.6 638.1 764.6 632.4 770.6 626.3 776.7 619.8 782.8 612.8 788.6 606.0 794.0 599.6 799.2 593.2 804.0 586.7 809.0 579.0 813.6 571.2 817.0 565.4 818.4 563.0 818.5 562.8 818.5 562.8 820.8 562.1 820.8 562.0 820.6 562.3 819.2 564.6 815.8 570.4 811.2 578.3 806.3 586.0 801.4 592.5 796.2 598.9 790.8 605.4 785.0 612.2 779.0 619.2 773.0 625.7 767.0 631.8 761.1 637.6 755.2 642.9 749.3 647.6 743.4 651.9 737.5 656.0 731.5 659.9 725.5 663.5 719.9 667.1 714.9 670.7 710.3 674.1 706.1 677.2 702.3 679.4 698.8 681.2 696.1 683.2 694.3 685.9 693.1 688.8 692.3 690.8 692.3 787.6Z M697.1 787.7 697.1 690.6 697.8 688.5 699.0 685.6 700.8 682.9 703.4 680.9 706.7 679.0 710.5 676.7 714.5 673.6 718.9 670.2 723.8 666.5 729.2 662.9 735.1 659.2 740.9 655.3 746.7 651.2 752.4 646.8 758.2 642.0 764.0 636.7 769.8 630.9 775.7 624.8 781.6 618.2 787.5 611.3 793.3 604.4 798.7 597.9 803.8 591.4 808.7 584.8 813.7 577.1 818.3 569.2 821.7 563.4 823.1 561.0 823.3 560.8 823.3 560.8 824.9 559.7 824.9 559.7 824.8 559.9 823.4 562.3 820.0 568.1 815.3 576.0 810.3 583.7 805.4 590.4 800.3 596.9 794.9 603.5 789.2 610.4 783.4 617.4 777.5 624.0 771.7 630.1 766.0 635.9 760.3 641.3 754.6 646.1 749.0 650.5 743.4 654.7 737.7 658.7 732.0 662.4 726.7 666.1 722.0 669.7 717.6 673.2 713.7 676.3 710.1 678.6 706.9 680.5 704.3 682.6 702.5 685.4 701.4 688.3 700.7 690.4 700.7 787.8Z M705.5 787.9 705.5 690.2 706.2 688.1 707.3 685.1 709.0 682.2 711.4 680.1 714.5 678.1 718.0 675.7 721.7 672.6 725.9 669.1 730.4 665.4 735.5 661.7 741.0 657.8 746.5 653.8 751.9 649.5 757.4 645.1 762.9 640.2 768.4 634.8 774.1 629.0 779.7 622.8 785.5 616.2 791.2 609.2 796.8 602.3 802.2 595.6 807.3 589.0 812.3 582.2 817.2 574.5 821.9 566.6 825.3 560.7 826.8 558.4 826.9 558.1 826.9 558.2 828.3 556.9 828.4 556.9 828.2 557.2 826.8 559.5 823.3 565.3 818.6 573.3 813.6 581.1 808.7 587.9 803.5 594.6 798.2 601.3 792.7 608.2 787.0 615.2 781.4 621.9 775.8 628.1 770.3 633.9 764.8 639.3 759.4 644.3 754.1 648.8 748.9 653.0 743.5 657.2 738.1 661.1 733.2 664.9 728.8 668.6 724.8 672.1 721.2 675.2 717.9 677.7 714.9 679.7 712.5 681.9 710.9 684.8 709.9 687.8 709.2 690.0 709.2 788.0Z M714.0 788.1 714.0 689.7 714.7 687.5 715.7 684.5 717.2 681.6 719.5 679.3 722.3 677.1 725.5 674.6 728.9 671.5 732.7 667.9 736.9 664.2 741.7 660.3 746.8 656.3 752.0 652.1 757.0 647.8 762.2 643.2 767.4 638.2 772.7 632.8 778.1 626.9 783.5 620.6 789.1 614.0 794.6 607.0 800.1 600.0 805.4 593.2 810.6 586.4 815.5 579.5 820.5 571.7 825.2 563.7 828.7 557.9 830.1 555.5 830.3 555.3 830.3 555.3 831.8 554.2 831.9 554.1 831.7 554.4 830.3 556.7 826.8 562.6 822.0 570.6 817.0 578.4 812.1 585.4 806.9 592.2 801.6 599.0 796.2 606.0 790.7 613.1 785.3 619.7 779.9 626.0 774.6 631.9 769.4 637.4 764.3 642.4 759.3 647.0 754.4 651.4 749.4 655.7 744.4 659.8 739.8 663.7 735.8 667.4 732.1 671.0 728.8 674.2 725.7 676.8 723.0 678.9 720.8 681.3 719.3 684.2 718.3 687.3 717.7 689.5 717.7 788.1Z M722.6 788.3 722.6 689.3 723.2 687.1 724.1 683.9 725.6 680.9 727.6 678.5 730.2 676.3 733.2 673.7 736.3 670.4 739.8 666.9 743.7 663.1 748.1 659.1 752.9 655.0 757.8 650.6 762.6 646.2 767.4 641.5 772.3 636.5 777.4 630.9 782.6 625.0 787.9 618.7 793.3 612.0 798.6 605.0 804.0 597.9 809.2 591.0 814.4 584.1 819.4 577.1 824.4 569.2 829.2 561.2 832.6 555.4 834.1 553.0 834.2 552.8 834.2 552.8 836.3 551.9 836.4 551.9 836.2 552.1 834.8 554.5 831.3 560.4 826.5 568.3 821.5 576.3 816.5 583.3 811.3 590.3 806.1 597.2 800.8 604.3 795.5 611.3 790.2 618.0 785.0 624.3 779.8 630.3 774.8 635.9 770.0 641.0 765.2 645.6 760.6 650.1 755.8 654.5 751.1 658.7 746.8 662.7 743.1 666.5 739.7 670.1 736.6 673.3 733.7 676.0 731.2 678.3 729.2 680.7 727.8 683.8 726.9 686.9 726.3 689.1 726.3 788.3Z M731.2 788.5 731.2 689.0 731.8 686.8 732.7 683.6 734.0 680.5 736.0 678.1 738.4 675.7 741.2 673.0 744.2 669.8 747.5 666.2 751.2 662.3 755.4 658.3 759.9 654.1 764.6 649.6 769.1 645.1 773.8 640.4 778.5 635.3 783.5 629.7 788.6 623.7 793.7 617.4 798.9 610.7 804.2 603.6 809.4 596.5 814.7 589.5 819.9 582.5 824.8 575.4 829.9 567.5 834.7 559.5 838.2 553.7 839.6 551.3 839.8 551.0 839.7 551.1 842.4 550.5 842.4 550.4 842.2 550.7 840.8 553.0 837.3 558.9 832.5 566.9 827.5 574.8 822.5 582.0 817.3 589.0 812.1 596.0 806.9 603.1 801.6 610.2 796.5 616.9 791.4 623.2 786.4 629.3 781.5 634.9 776.8 640.0 772.2 644.7 767.7 649.3 763.1 653.7 758.6 658.0 754.5 662.1 750.9 665.9 747.7 669.5 744.7 672.8 742.0 675.5 739.6 677.9 737.7 680.4 736.4 683.5 735.5 686.7 734.9 688.9 734.9 788.5Z M739.9 788.7 739.9 688.8 740.4 686.5 741.3 683.3 742.6 680.1 744.4 677.6 746.7 675.1 749.3 672.3 752.1 669.1 755.2 665.4 758.7 661.6 762.7 657.5 767.0 653.1 771.5 648.5 775.8 643.9 780.3 639.2 784.9 634.0 789.7 628.4 794.6 622.3 799.6 616.0 804.7 609.2 809.8 602.2 815.0 595.1 820.2 588.0 825.4 580.9 830.3 573.7 835.3 565.7 840.2 557.7 843.7 551.9 845.1 549.5 845.3 549.3 845.2 549.3 847.1 548.3 847.1 548.2 847.0 548.4 845.5 550.8 842.0 556.7 837.2 564.7 832.2 572.6 827.2 579.9 822.0 587.1 816.9 594.2 811.8 601.3 806.7 608.4 801.7 615.1 796.8 621.5 791.9 627.6 787.2 633.2 782.8 638.4 778.4 643.2 774.2 647.9 769.9 652.5 765.7 656.9 761.8 661.1 758.4 665.0 755.4 668.6 752.7 671.9 750.2 674.8 748.0 677.3 746.2 679.9 745.0 683.1 744.2 686.4 743.7 688.7 743.7 788.8Z M748.6 788.9 748.6 688.5 749.1 686.1 749.9 682.8 751.1 679.6 752.8 676.9 754.9 674.3 757.2 671.4 759.8 668.0 762.6 664.4 765.8 660.5 769.5 656.2 773.5 651.7 777.6 647.0 781.7 642.2 785.9 637.4 790.2 632.1 794.8 626.4 799.5 620.3 804.4 613.9 809.2 607.2 814.2 600.1 819.2 593.0 824.3 585.8 829.5 578.5 834.4 571.2 839.5 563.2 844.3 555.2 847.8 549.3 849.2 546.9 849.4 546.7 849.3 546.8 851.1 545.6 851.1 545.6 851.0 545.8 849.5 548.2 846.0 554.0 841.2 562.0 836.2 570.0 831.2 577.4 826.1 584.8 821.0 592.0 816.0 599.2 811.2 606.2 806.4 613.0 801.6 619.4 797.0 625.5 792.5 631.3 788.3 636.6 784.2 641.5 780.3 646.3 776.3 651.0 772.4 655.6 768.9 660.0 765.8 663.9 763.1 667.6 760.7 670.9 758.4 673.9 756.4 676.6 754.8 679.3 753.7 682.6 752.9 686.0 752.4 688.3 752.4 789.0Z M757.4 789.1 757.4 688.2 757.9 685.8 758.6 682.4 759.7 679.0 761.2 676.2 763.1 673.4 765.2 670.4 767.6 667.0 770.1 663.3 773.0 659.4 776.4 655.0 780.1 650.3 783.9 645.4 787.7 640.6 791.6 635.6 795.7 630.3 800.1 624.5 804.6 618.3 809.2 611.9 813.9 605.1 818.7 598.1 823.6 590.9 828.6 583.5 833.8 576.1 838.7 568.7 843.7 560.6 848.5 552.6 852.1 546.8 853.5 544.4 853.7 544.2 853.6 544.2 855.9 543.4 855.9 543.3 855.8 543.6 854.3 545.9 850.8 551.8 846.0 559.8 841.0 567.8 836.1 575.3 830.9 582.8 825.9 590.2 821.1 597.4 816.3 604.4 811.7 611.2 807.2 617.7 802.7 623.8 798.4 629.6 794.4 635.0 790.6 640.0 786.9 644.9 783.2 649.8 779.6 654.6 776.3 659.0 773.5 663.0 771.0 666.7 768.8 670.1 766.7 673.1 764.9 676.0 763.5 678.9 762.4 682.2 761.7 685.7 761.3 688.1 761.3 789.2Z M766.3 789.3 766.3 688.0 766.8 685.5 767.5 682.1 768.5 678.7 769.9 675.8 771.6 672.9 773.6 669.7 775.8 666.3 778.1 662.7 780.9 658.6 784.1 654.2 787.6 649.3 791.2 644.4 794.8 639.5 798.5 634.5 802.5 629.1 806.7 623.3 811.1 617.1 815.6 610.6 820.2 603.8 824.8 596.8 829.6 589.6 834.6 582.2 839.7 574.6 844.7 567.1 849.7 559.0 854.5 551.1 858.0 545.2 859.5 542.8 859.6 542.6 859.6 542.6 862.2 542.1 862.2 542.1 862.1 542.3 860.6 544.7 857.1 550.5 852.3 558.5 847.3 566.6 842.4 574.1 837.3 581.7 832.3 589.1 827.6 596.3 823.0 603.4 818.5 610.1 814.0 616.6 809.7 622.8 805.5 628.6 801.7 634.0 798.0 639.0 794.5 644.0 790.9 648.9 787.4 653.8 784.3 658.3 781.7 662.3 779.4 666.0 777.3 669.4 775.3 672.6 773.6 675.5 772.3 678.5 771.3 681.9 770.6 685.4 770.2 687.8 770.2 789.4Z M775.2 789.5 775.2 687.5 775.7 685.1 776.3 681.6 777.3 678.1 778.6 675.1 780.2 672.1 782.0 668.9 784.0 665.4 786.2 661.8 788.7 657.7 791.7 653.2 795.1 648.2 798.5 643.2 801.9 638.2 805.4 633.1 809.2 627.7 813.2 621.9 817.5 615.7 821.9 609.2 826.3 602.5 830.8 595.5 835.4 588.3 840.4 580.8 845.4 573.1 850.3 565.6 855.3 557.6 860.0 549.6 863.5 543.8 864.9 541.4 865.1 541.2 865.1 541.2 867.0 540.5 867.0 540.4 866.8 540.7 865.4 543.0 861.9 548.8 857.2 556.7 852.3 564.7 847.4 572.3 842.4 580.0 837.5 587.5 833.0 594.7 828.5 601.7 824.2 608.5 819.9 614.9 815.7 621.1 811.8 626.9 808.1 632.4 804.7 637.5 801.4 642.5 798.1 647.6 794.9 652.6 792.0 657.2 789.6 661.2 787.5 664.9 785.6 668.4 783.8 671.6 782.3 674.7 781.0 677.8 780.1 681.3 779.5 684.8 779.1 687.2 779.1 789.6Z M784.2 789.7 784.2 686.9 784.5 684.4 785.1 680.8 786.0 677.3 787.2 674.1 788.6 671.0 790.2 667.7 792.0 664.2 794.0 660.5 796.3 656.5 799.0 651.8 802.0 646.7 805.2 641.5 808.3 636.5 811.6 631.3 815.1 625.9 819.0 620.0 823.0 613.8 827.2 607.4 831.4 600.7 835.7 593.7 840.2 586.5 845.0 578.9 850.0 571.2 854.8 563.6 859.6 555.5 864.3 547.7 867.8 541.9 869.2 539.6 869.3 539.3 869.3 539.4 871.2 538.5 871.2 538.5 871.0 538.8 869.6 541.1 866.2 546.8 861.5 554.7 856.7 562.7 851.9 570.3 847.0 578.2 842.2 585.7 837.8 592.9 833.6 599.9 829.5 606.6 825.4 613.0 821.4 619.2 817.7 625.1 814.3 630.6 811.1 635.7 808.1 640.8 805.0 646.1 802.1 651.2 799.5 655.9 797.3 660.0 795.5 663.7 793.8 667.1 792.2 670.5 790.9 673.7 789.8 676.9 788.9 680.5 788.4 684.1 788.0 686.6 788.0 789.8Z M793.1 789.9 793.1 686.3 793.4 683.8 794.0 680.2 794.8 676.5 795.8 673.3 797.1 670.0 798.5 666.5 800.1 663.0 801.8 659.4 803.9 655.3 806.3 650.5 809.1 645.3 812.0 640.0 814.9 634.9 818.0 629.6 821.3 624.1 824.9 618.2 828.7 612.0 832.7 605.6 836.7 598.9 840.9 592.0 845.2 584.8 849.9 577.2 854.8 569.3 859.5 561.6 864.3 553.7 868.9 545.9 872.3 540.1 873.7 537.8 873.9 537.5 873.9 537.6 876.3 537.0 876.3 537.0 876.2 537.2 874.8 539.6 871.4 545.3 866.8 553.0 862.0 561.0 857.3 568.7 852.4 576.6 847.8 584.3 843.5 591.5 839.4 598.4 835.5 605.0 831.5 611.5 827.7 617.7 824.2 623.6 821.0 629.1 818.0 634.3 815.2 639.5 812.4 644.8 809.7 650.1 807.3 654.9 805.3 659.0 803.6 662.6 802.1 666.2 800.8 669.6 799.5 673.0 798.5 676.3 797.8 679.9 797.3 683.6 796.9 686.1 796.9 789.9Z M802.0 790.0 802.0 685.9 802.4 683.4 802.9 679.7 803.6 676.0 804.6 672.7 805.7 669.3 807.1 665.8 808.5 662.3 810.1 658.7 812.0 654.6 814.4 649.7 817.0 644.4 819.7 639.1 822.5 633.9 825.4 628.7 828.5 623.1 832.0 617.2 835.8 611.0 839.6 604.6 843.5 597.9 847.5 591.1 851.7 583.9 856.3 576.2 861.2 568.3 865.8 560.6 870.6 552.6 875.2 544.8 878.5 539.2 879.9 536.8 880.1 536.6 880.1 536.6 882.6 536.4 882.7 536.4 882.5 536.7 881.1 539.0 877.8 544.7 873.3 552.4 868.6 560.4 864.0 568.1 859.2 576.0 854.7 583.7 850.5 590.8 846.6 597.7 842.7 604.3 838.9 610.7 835.3 616.9 831.8 622.8 828.8 628.4 825.9 633.6 823.2 638.8 820.5 644.2 817.9 649.5 815.7 654.3 813.8 658.4 812.2 662.0 810.8 665.6 809.5 669.1 808.4 672.5 807.4 675.8 806.7 679.5 806.2 683.1 805.9 685.7 805.9 790.1Z M811.0 790.2 811.0 685.3 811.3 682.7 811.8 679.1 812.5 675.4 813.4 672.0 814.5 668.6 815.7 665.1 817.1 661.6 818.6 658.0 820.4 653.9 822.6 649.0 825.0 643.7 827.6 638.3 830.3 633.1 833.0 627.8 836.0 622.3 839.3 616.4 842.9 610.3 846.6 603.9 850.3 597.3 854.2 590.4 858.2 583.3 862.7 575.6 867.3 567.7 871.8 560.0 876.4 552.1 880.9 544.4 884.1 538.8 885.5 536.4 885.6 536.2 885.6 536.2 887.6 535.9 887.6 535.9 887.4 536.2 886.1 538.5 882.9 544.2 878.6 551.8 874.1 559.7 869.6 567.4 865.1 575.3 860.7 582.9 856.8 590.1 853.0 596.9 849.4 603.5 845.8 609.9 842.3 616.0 839.0 621.9 836.1 627.4 833.5 632.6 830.9 637.8 828.4 643.2 826.0 648.6 823.9 653.5 822.1 657.5 820.7 661.1 819.4 664.7 818.2 668.2 817.1 671.7 816.3 675.1 815.6 678.8 815.2 682.4 814.8 685.0 814.8 790.3Z M820.0 790.4 820.0 684.5 820.2 681.9 820.7 678.3 821.3 674.5 822.1 671.1 823.1 667.6 824.2 664.0 825.5 660.5 826.8 657.0 828.5 652.9 830.5 648.0 832.8 642.6 835.2 637.2 837.6 632.0 840.2 626.7 842.9 621.2 846.1 615.4 849.4 609.2 852.9 602.9 856.4 596.3 860.0 589.5 863.8 582.4 868.1 574.8 872.5 566.9 876.8 559.3 881.2 551.4 885.4 543.8 888.5 538.2 889.8 535.9 889.9 535.6 889.9 535.6 891.6 535.3 891.6 535.3 891.5 535.6 890.2 538.0 887.2 543.5 883.0 551.1 878.8 558.9 874.6 566.6 870.2 574.5 866.1 582.1 862.4 589.1 858.9 595.9 855.5 602.4 852.1 608.8 848.9 614.9 845.9 620.7 843.2 626.2 840.7 631.5 838.4 636.7 836.1 642.1 833.9 647.5 831.9 652.4 830.4 656.5 829.1 660.1 827.9 663.6 826.8 667.2 825.9 670.7 825.1 674.1 824.5 677.9 824.1 681.5 823.8 684.1 823.8 790.4Z M828.9 790.5 828.9 683.6 829.2 681.0 829.6 677.3 830.1 673.6 830.9 670.1 831.7 666.5 832.7 662.9 833.8 659.4 835.0 655.9 836.5 651.8 838.3 646.9 840.4 641.5 842.6 636.0 844.8 630.8 847.1 625.5 849.7 620.0 852.6 614.2 855.7 608.1 858.9 601.8 862.2 595.3 865.6 588.6 869.2 581.5 873.1 574.0 877.3 566.1 881.4 558.4 885.5 550.6 889.5 543.1 892.5 537.6 893.7 535.3 893.9 535.0 893.9 535.0 895.6 534.7 895.6 534.7 895.5 535.1 894.2 537.4 891.4 542.8 887.5 550.3 883.4 558.1 879.5 565.7 875.4 573.6 871.5 581.2 868.0 588.2 864.7 594.9 861.6 601.4 858.4 607.7 855.4 613.7 852.6 619.5 850.2 625.0 847.9 630.3 845.8 635.5 843.7 641.0 841.7 646.4 840.0 651.4 838.6 655.4 837.4 659.0 836.4 662.5 835.5 666.1 834.6 669.7 834.0 673.2 833.4 677.0 833.0 680.6 832.8 683.2 832.8 790.6Z M837.9 790.6 837.9 682.7 838.2 680.2 838.5 676.5 839.0 672.7 839.6 669.2 840.4 665.5 841.3 661.9 842.2 658.4 843.3 654.9 844.6 650.8 846.3 645.9 848.2 640.4 850.1 634.9 852.2 629.7 854.3 624.4 856.7 618.9 859.3 613.1 862.2 607.1 865.2 600.8 868.3 594.4 871.4 587.7 874.8 580.7 878.5 573.1 882.5 565.3 886.3 557.7 890.3 549.9 894.1 542.5 896.8 537.1 898.0 534.8 898.2 534.4 898.2 534.4 900.4 534.2 900.4 534.2 900.2 534.6 899.0 536.9 896.3 542.3 892.6 549.7 888.8 557.4 885.0 565.0 881.1 572.9 877.4 580.4 874.1 587.4 871.1 594.1 868.1 600.5 865.2 606.7 862.4 612.7 859.8 618.5 857.5 624.0 855.4 629.3 853.5 634.5 851.6 640.0 849.8 645.5 848.2 650.5 846.9 654.5 845.9 658.0 845.0 661.5 844.2 665.2 843.4 668.9 842.8 672.4 842.4 676.2 842.0 679.9 841.8 682.4 841.8 790.7Z M846.9 790.8 846.9 682.1 847.2 679.5 847.5 675.9 847.9 672.1 848.5 668.5 849.2 664.8 850.0 661.1 850.8 657.6 851.8 654.1 853.0 650.1 854.5 645.2 856.3 639.6 858.1 634.1 860.0 628.9 862.0 623.6 864.2 618.1 866.7 612.3 869.4 606.3 872.2 600.1 875.1 593.7 878.1 587.1 881.3 580.1 884.9 572.6 888.7 564.7 892.4 557.1 896.1 549.4 899.8 542.1 902.5 536.7 903.6 534.4 903.8 534.0 903.8 534.0 907.2 534.2 907.2 534.2 907.0 534.6 905.9 536.9 903.2 542.3 899.6 549.6 895.8 557.2 892.2 564.8 888.4 572.7 884.8 580.2 881.6 587.1 878.7 593.8 875.8 600.2 873.0 606.4 870.3 612.4 867.8 618.1 865.6 623.6 863.6 628.8 861.8 634.1 860.0 639.6 858.3 645.1 856.8 650.1 855.6 654.1 854.6 657.6 853.8 661.0 853.0 664.7 852.3 668.4 851.8 672.0 851.3 675.8 851.0 679.4 850.8 682.0 850.8 790.8Z M855.9 790.9 855.9 682.0 856.1 679.5 856.4 675.8 856.9 672.1 857.4 668.5 858.1 664.9 858.9 661.2 859.8 657.7 860.7 654.3 861.9 650.3 863.4 645.4 865.1 639.9 867.0 634.4 868.8 629.2 870.8 624.0 873.0 618.6 875.5 612.8 878.2 606.9 881.1 600.7 884.0 594.4 887.0 587.8 890.2 580.9 893.7 573.4 897.6 565.6 901.3 558.1 905.0 550.5 908.7 543.2 911.3 537.9 912.5 535.6 912.7 535.3 912.7 535.2 916.9 536.2 916.8 536.2 916.6 536.6 915.5 538.9 912.8 544.2 909.1 551.4 905.3 558.9 901.6 566.4 897.8 574.2 894.2 581.6 891.0 588.5 888.0 595.0 885.1 601.3 882.2 607.4 879.5 613.3 876.9 619.0 874.7 624.4 872.7 629.6 870.9 634.8 869.0 640.2 867.3 645.6 865.8 650.5 864.6 654.5 863.6 657.9 862.7 661.3 861.9 665.0 861.3 668.6 860.7 672.2 860.3 675.9 859.9 679.5 859.7 682.0 859.7 791.0Z M864.8 791.1 864.8 682.0 865.0 679.5 865.3 675.9 865.8 672.3 866.4 668.8 867.0 665.2 867.8 661.6 868.7 658.2 869.7 654.8 870.9 650.8 872.4 646.0 874.2 640.6 876.0 635.2 877.9 630.1 879.9 625.0 882.2 619.7 884.7 614.0 887.5 608.2 890.4 602.1 893.3 595.9 896.3 589.5 899.6 582.7 903.2 575.3 907.1 567.6 910.9 560.2 914.7 552.8 918.4 545.6 921.1 540.4 922.3 538.1 922.4 537.8 922.5 537.7 926.7 538.9 926.7 539.0 926.5 539.4 925.3 541.6 922.6 546.8 918.8 553.9 915.0 561.3 911.2 568.6 907.3 576.3 903.6 583.6 900.4 590.3 897.3 596.7 894.4 602.8 891.5 608.8 888.7 614.6 886.1 620.2 883.8 625.5 881.8 630.6 879.9 635.7 878.0 641.0 876.3 646.3 874.7 651.1 873.5 655.0 872.5 658.4 871.6 661.7 870.8 665.3 870.1 668.9 869.6 672.3 869.1 676.0 868.8 679.5 868.5 682.0 868.5 791.1Z M873.6 791.2 873.6 682.0 873.8 679.6 874.1 676.1 874.6 672.4 875.2 669.0 875.9 665.5 876.7 662.0 877.6 658.7 878.6 655.3 879.8 651.5 881.4 646.7 883.2 641.5 885.0 636.2 887.0 631.2 889.0 626.2 891.3 621.0 893.9 615.4 896.7 609.7 899.7 603.8 902.6 597.7 905.7 591.4 909.0 584.8 912.8 577.6 916.7 570.0 920.5 562.8 924.4 555.5 928.2 548.5 931.0 543.3 932.2 541.1 932.3 540.7 932.4 540.7 936.6 542.0 936.6 542.0 936.4 542.4 935.2 544.6 932.4 549.7 928.6 556.6 924.6 563.9 920.8 571.1 916.8 578.6 913.1 585.7 909.7 592.3 906.6 598.5 903.6 604.5 900.7 610.4 897.8 616.1 895.2 621.5 892.9 626.7 890.8 631.7 888.9 636.7 887.0 641.9 885.2 647.1 883.6 651.8 882.4 655.6 881.4 658.9 880.5 662.2 879.7 665.7 879.0 669.2 878.4 672.5 877.9 676.1 877.6 679.6 877.3 682.0 877.3 791.2Z M882.3 791.3 882.3 682.0 882.6 679.6 882.9 676.2 883.4 672.6 884.0 669.3 884.7 665.9 885.5 662.4 886.4 659.2 887.4 655.9 888.7 652.1 890.3 647.5 892.1 642.4 894.0 637.2 896.0 632.3 898.1 627.4 900.4 622.3 903.0 616.9 905.9 611.3 908.9 605.5 911.9 599.5 915.1 593.4 918.4 586.9 922.2 579.8 926.2 572.4 930.1 565.3 934.1 558.2 937.9 551.3 940.8 546.3 942.0 544.1 942.2 543.7 942.2 543.7 946.4 544.8 946.3 544.9 946.1 545.3 944.9 547.4 942.1 552.4 938.2 559.2 934.2 566.3 930.3 573.4 926.2 580.7 922.4 587.8 919.0 594.2 915.9 600.2 912.8 606.1 909.8 611.9 906.9 617.4 904.2 622.8 901.9 627.9 899.8 632.7 897.8 637.6 895.9 642.7 894.0 647.8 892.5 652.4 891.2 656.1 890.2 659.4 889.3 662.6 888.4 666.0 887.7 669.4 887.1 672.7 886.6 676.2 886.3 679.6 886.0 682.0 886.0 791.4Z M891.0 791.5 891.0 682.0 891.2 679.6 891.6 676.3 892.1 672.8 892.7 669.5 893.4 666.2 894.3 662.8 895.2 659.6 896.2 656.4 897.5 652.7 899.1 648.2 900.9 643.1 902.9 638.1 904.9 633.2 907.0 628.4 909.3 623.4 912.0 618.1 915.0 612.6 918.0 606.9 921.1 601.1 924.3 595.1 927.7 588.8 931.5 581.8 935.6 574.5 939.6 567.5 943.6 560.5 947.5 553.8 950.4 548.8 951.6 546.7 951.8 546.3 951.9 546.2 955.9 547.1 955.8 547.2 955.6 547.6 954.4 549.7 951.5 554.6 947.6 561.3 943.5 568.2 939.5 575.2 935.4 582.5 931.6 589.4 928.1 595.7 924.9 601.6 921.8 607.4 918.8 613.0 915.8 618.5 913.1 623.8 910.8 628.8 908.6 633.6 906.6 638.3 904.7 643.4 902.8 648.4 901.2 652.9 899.9 656.6 898.9 659.8 898.0 662.9 897.1 666.3 896.4 669.6 895.8 672.9 895.3 676.3 894.9 679.7 894.7 682.0 894.7 791.5Z M899.6 791.6 899.6 682.0 899.9 679.7 900.2 676.4 900.7 672.9 901.3 669.7 902.1 666.4 902.9 663.1 903.8 659.9 904.9 656.8 906.2 653.1 907.8 648.6 909.6 643.6 911.6 638.6 913.6 633.9 915.8 629.1 918.2 624.2 920.9 619.0 923.8 613.5 926.9 607.9 930.0 602.2 933.2 596.3 936.7 590.0 940.6 583.2 944.7 575.9 948.7 569.0 952.8 562.1 956.7 555.5 959.6 550.6 960.9 548.5 961.1 548.1 961.1 548.0 965.2 549.2 965.1 549.2 964.9 549.6 963.7 551.8 960.7 556.7 956.7 563.5 952.7 570.6 948.7 577.5 944.5 584.6 940.7 591.4 937.1 597.7 933.9 603.6 930.7 609.3 927.6 614.9 924.6 620.3 921.9 625.6 919.4 630.5 917.2 635.3 915.1 640.0 913.1 645.0 911.2 650.1 909.6 654.5 908.3 658.1 907.3 661.2 906.5 664.3 905.6 667.5 904.9 670.7 904.3 673.9 903.9 677.2 903.5 680.5 903.3 682.7 903.3 791.7Z M908.2 791.7 908.2 684.3 908.4 682.1 908.7 679.1 909.1 675.9 909.7 673.0 910.3 670.0 911.1 666.9 911.8 664.1 912.7 661.1 913.9 657.6 915.6 653.2 917.6 648.1 919.7 643.1 921.9 638.3 924.3 633.5 926.8 628.5 929.6 623.3 932.7 617.9 935.9 612.3 939.1 606.5 942.5 600.6 946.1 594.4 950.0 587.7 954.1 580.7 958.1 573.8 962.3 566.6 966.3 559.4 969.3 554.1 970.6 551.9 970.8 551.6 970.8 551.5 975.1 553.7 975.1 553.7 974.9 554.0 973.7 556.3 970.6 561.8 966.5 569.3 962.3 576.8 958.3 583.6 954.3 590.5 950.3 597.0 946.7 603.3 943.1 609.2 939.7 615.0 936.5 620.5 933.4 625.9 930.5 631.1 927.9 636.1 925.4 641.0 923.1 645.8 920.8 650.9 918.8 656.0 917.1 660.4 915.9 663.8 915.1 666.6 914.5 669.3 913.8 672.2 913.2 675.0 912.7 677.8 912.3 680.7 912.0 683.6 911.8 685.7 911.8 791.8Z M916.7 791.9 916.7 687.7 916.8 685.8 917.1 683.1 917.4 680.4 917.8 677.9 918.3 675.3 918.9 672.7 919.5 670.2 920.1 667.7 921.2 664.4 922.9 660.0 925.1 654.8 927.5 649.7 930.0 644.8 932.6 639.9 935.5 634.9 938.4 629.7 941.6 624.3 944.9 618.8 948.5 613.0 952.2 607.0 956.0 600.8 959.9 594.4 964.0 587.8 968.0 581.0 972.2 573.2 976.4 565.2 979.5 559.4 980.8 557.0 980.9 556.7 980.9 556.7 985.2 559.0 985.3 558.9 985.1 559.2 983.9 561.6 980.7 567.7 976.5 576.0 972.2 584.0 968.2 590.8 964.1 597.3 960.2 603.6 956.3 609.8 952.4 615.8 948.8 621.6 945.4 627.1 942.2 632.4 939.1 637.6 936.2 642.7 933.4 647.6 930.8 652.5 928.4 657.7 926.1 662.9 924.3 667.3 923.3 670.5 922.7 672.9 922.3 675.2 921.8 677.6 921.3 679.9 920.9 682.3 920.6 684.8 920.4 687.4 920.3 689.1 920.3 791.9Z M925.1 792.0 925.1 690.8 925.2 689.2 925.4 686.8 925.7 684.5 926.0 682.4 926.4 680.2 926.8 678.0 927.1 675.9 927.5 673.7 928.5 670.7 930.3 666.2 932.7 661.0 935.3 655.7 938.0 650.8 941.0 645.9 944.0 640.8 947.2 635.6 950.4 630.3 953.9 624.8 957.7 619.0 961.6 612.9 965.6 606.8 969.6 600.6 973.6 594.3 977.6 587.5 982.0 579.3 986.3 570.6 989.5 564.2 990.8 561.7 990.9 561.5 990.9 561.5 994.9 562.9 994.9 562.8 994.8 563.1 993.5 565.6 990.3 572.2 986.0 581.1 981.6 589.5 977.6 596.2 973.6 602.4 969.6 608.5 965.5 614.7 961.5 620.7 957.6 626.5 954.1 632.0 950.8 637.3 947.7 642.5 944.5 647.6 941.5 652.6 938.7 657.5 936.1 662.8 933.6 668.1 931.8 672.5 930.8 675.5 930.5 677.6 930.2 679.6 929.8 681.7 929.5 683.7 929.2 685.7 929.0 687.9 928.8 690.2 928.7 691.8 928.7 792.1Z M933.4 792.2 933.4 692.4 933.6 690.7 933.7 688.3 934.0 685.9 934.3 683.8 934.6 681.8 935.0 679.6 935.3 677.6 935.7 675.4 936.7 672.4 938.6 668.0 941.1 662.8 943.9 657.6 946.8 652.7 950.0 647.8 953.2 642.8 956.4 637.7 959.8 632.5 963.4 627.0 967.2 621.2 971.3 615.2 975.3 609.1 979.2 603.2 983.0 597.2 986.9 590.7 991.1 582.7 995.4 574.0 998.5 567.7 999.8 565.2 999.9 565.0 999.8 565.0 1003.5 567.6 1003.5 567.5 1003.3 567.8 1002.1 570.2 999.2 576.2 995.1 584.3 991.1 591.9 987.5 598.0 983.9 603.6 980.1 609.3 976.2 615.2 972.2 621.2 968.3 627.0 964.7 632.4 961.2 637.6 957.8 642.6 954.5 647.5 951.2 652.2 948.2 657.0 945.3 662.1 942.6 667.2 940.6 671.6 939.5 674.6 939.1 676.9 938.7 679.0 938.2 681.3 937.9 683.5 937.6 685.7 937.3 688.4 937.1 691.1 937.0 692.9 937.0 792.2Z M941.7 792.3 941.7 693.8 941.8 691.6 942.1 688.5 942.3 685.5 942.7 683.0 943.1 680.6 943.6 678.1 944.1 675.8 944.6 673.4 945.9 670.2 948.1 666.0 950.9 660.9 954.0 656.0 957.3 651.4 960.8 646.9 964.3 642.3 967.9 637.4 971.5 632.3 975.2 627.0 979.1 621.3 983.1 615.3 986.9 609.5 990.4 604.3 993.6 599.1 996.9 593.6 1000.5 586.8 1004.2 579.6 1007.0 574.3 1008.1 572.1 1008.3 571.7 1008.4 571.6 1012.0 574.8 1011.9 574.9 1011.7 575.3 1010.6 577.4 1008.0 582.3 1004.6 588.8 1001.2 595.0 998.2 600.1 995.3 604.8 992.0 609.8 988.3 615.4 984.3 621.3 980.4 626.9 976.6 632.2 972.9 637.2 969.2 642.0 965.5 646.5 961.8 650.8 958.4 655.2 955.2 660.1 952.2 665.0 949.8 669.2 948.5 672.4 947.8 674.9 947.3 677.4 946.7 680.0 946.3 682.6 945.9 685.3 945.6 688.6 945.4 692.1 945.2 694.5 945.2 792.4Z M949.9 792.5 949.9 695.4 950.1 692.6 950.3 688.7 950.6 685.0 951.0 682.1 951.5 679.3 952.1 676.6 952.8 673.9 953.5 671.2 955.0 668.0 957.5 663.8 960.7 659.0 964.1 654.3 967.7 650.1 971.6 646.0 975.5 641.6 979.4 637.0 983.2 632.1 987.1 626.9 991.1 621.3 995.0 615.5 998.6 610.0 1001.6 605.4 1004.2 601.2 1006.9 596.7 1009.9 591.2 1013.1 585.5 1015.4 581.2 1016.5 579.3 1016.7 578.8 1016.8 578.6 1020.4 580.7 1020.3 580.9 1020.0 581.5 1018.9 583.3 1016.7 587.3 1013.8 592.5 1010.9 597.6 1008.4 601.8 1006.0 605.7 1003.2 610.1 999.7 615.5 995.7 621.3 991.7 626.9 987.8 632.0 983.9 636.8 979.9 641.5 975.9 645.7 971.9 649.7 968.2 653.8 964.6 658.4 961.4 663.1 958.8 667.3 957.2 670.5 956.4 673.3 955.7 676.1 955.0 679.0 954.5 681.8 954.1 684.9 953.8 688.8 953.5 692.9 953.4 695.8 953.4 792.6Z M958.0 792.7 958.0 696.1 958.2 693.1 958.4 688.9 958.8 684.9 959.3 681.7 959.8 678.7 960.6 675.7 961.4 672.8 962.3 670.0 964.0 666.7 966.6 662.6 969.9 658.0 973.5 653.5 977.3 649.5 981.3 645.6 985.3 641.5 989.3 637.0 993.2 632.2 997.2 627.2 1001.2 621.8 1005.1 616.1 1008.6 610.9 1011.4 606.7 1013.7 602.9 1016.0 599.0 1018.8 594.2 1021.7 589.2 1023.8 585.4 1024.8 583.6 1025.1 583.1 1025.3 582.8 1029.0 585.1 1028.9 585.3 1028.5 585.9 1027.6 587.7 1025.5 591.3 1022.8 596.1 1020.0 600.7 1017.8 604.5 1015.5 608.0 1012.8 612.1 1009.3 617.0 1005.3 622.5 1001.3 627.7 997.4 632.6 993.5 637.2 989.5 641.7 985.5 645.7 981.6 649.4 977.8 653.3 974.2 657.6 970.8 662.1 968.1 666.1 966.3 669.4 965.3 672.3 964.4 675.3 963.5 678.4 962.9 681.6 962.3 685.0 961.9 689.0 961.6 693.2 961.4 696.2 961.4 792.7Z M966.0 792.8 966.0 696.3 966.2 693.4 966.5 689.3 967.0 685.2 967.7 681.6 968.5 678.0 969.5 674.6 970.6 671.4 971.9 668.5 973.8 665.2 976.7 661.3 980.1 657.1 983.8 653.0 987.5 649.3 991.4 645.7 995.4 641.9 999.3 637.7 1003.2 633.2 1007.1 628.5 1011.1 623.6 1015.0 618.6 1018.5 614.0 1021.2 610.3 1023.4 607.0 1025.6 603.6 1028.1 599.3 1030.7 594.8 1032.7 591.4 1033.6 589.7 1034.0 589.1 1034.2 588.8 1038.0 591.9 1037.8 592.3 1037.5 592.9 1036.5 594.5 1034.6 597.7 1032.2 601.9 1029.7 606.0 1027.6 609.1 1025.5 612.1 1022.9 615.6 1019.4 619.8 1015.4 624.5 1011.4 629.2 1007.6 633.7 1003.7 638.0 999.8 642.2 995.9 645.8 992.0 649.2 988.3 652.7 984.6 656.6 981.1 660.6 978.2 664.4 976.1 667.7 974.7 670.7 973.4 674.0 972.2 677.6 971.3 681.5 970.5 685.3 970.0 689.5 969.6 693.6 969.4 696.4 969.4 792.9Z M973.9 793.0 973.9 696.6 974.2 693.8 974.6 689.7 975.2 685.5 976.1 681.4 977.2 677.2 978.6 673.2 980.1 669.8 981.8 666.7 984.0 663.4 987.1 659.7 990.7 655.9 994.4 652.3 998.1 649.0 1001.9 645.9 1005.7 642.5 1009.6 638.5 1013.5 634.3 1017.3 630.1 1021.3 625.8 1025.3 621.6 1028.7 617.7 1031.3 614.7 1033.3 612.0 1035.3 609.2 1037.6 605.5 1039.9 601.7 1041.6 598.7 1042.6 597.2 1043.0 596.5 1043.2 596.1 1047.0 599.1 1046.8 599.5 1046.3 600.2 1045.4 601.7 1043.8 604.5 1041.6 608.1 1039.5 611.5 1037.5 614.1 1035.5 616.5 1033.0 619.3 1029.6 622.8 1025.6 626.7 1021.6 630.8 1017.8 634.8 1013.9 638.9 1010.1 642.7 1006.3 645.9 1002.6 648.9 998.9 652.0 995.1 655.5 991.5 659.1 988.3 662.6 985.9 665.9 984.1 669.1 982.4 672.6 980.9 676.8 979.6 681.4 978.6 685.7 978.0 689.9 977.6 693.9 977.3 696.7 977.3 793.0Z M981.8 793.1 981.8 696.9 982.1 694.1 982.5 690.1 983.2 685.8 984.4 681.3 985.8 676.4 987.4 672.0 989.3 668.3 991.3 665.0 993.8 661.8 997.1 658.4 1000.9 655.0 1004.7 651.7 1008.3 648.8 1012.0 646.0 1015.8 643.0 1019.5 639.3 1023.4 635.3 1027.2 631.5 1031.2 627.8 1035.2 624.2 1038.6 621.0 1041.1 618.5 1043.0 616.4 1044.8 614.1 1046.9 611.0 1048.9 607.7 1050.4 605.2 1051.3 603.7 1051.7 603.0 1052.0 602.6 1055.6 604.6 1055.4 605.0 1054.9 605.8 1054.0 607.1 1052.5 609.6 1050.6 612.7 1048.6 615.6 1046.8 617.8 1045.0 619.7 1042.5 622.0 1039.1 625.0 1035.1 628.4 1031.1 631.9 1027.3 635.7 1023.5 639.5 1019.8 643.1 1016.1 646.1 1012.4 648.7 1008.7 651.5 1004.9 654.7 1001.1 658.0 997.8 661.3 995.2 664.6 993.0 667.9 991.1 671.6 989.3 676.2 987.8 681.2 986.6 685.9 985.9 690.3 985.4 694.2 985.1 697.0 985.1 793.2Z M989.6 793.3 989.6 697.2 989.9 694.4 990.3 690.5 991.1 686.2 992.3 681.6 993.9 676.5 995.7 671.9 997.6 668.2 999.8 664.9 1002.5 661.7 1005.9 658.4 1009.7 655.2 1013.5 652.1 1017.2 649.4 1020.8 646.8 1024.5 643.9 1028.3 640.4 1032.1 636.6 1035.9 633.0 1039.9 629.6 1043.9 626.3 1047.3 623.4 1049.8 621.2 1051.7 619.4 1053.4 617.3 1055.4 614.5 1057.3 611.5 1058.7 609.1 1059.6 607.8 1060.1 607.1 1060.4 606.6 1064.0 608.5 1063.7 608.9 1063.2 609.6 1062.3 611.0 1060.8 613.3 1058.9 616.3 1057.0 619.0 1055.2 621.0 1053.3 622.8 1050.9 625.0 1047.4 627.9 1043.4 631.1 1039.4 634.4 1035.6 638.0 1031.8 641.7 1028.0 645.1 1024.3 648.0 1020.6 650.5 1016.9 653.2 1013.1 656.2 1009.2 659.3 1005.9 662.6 1003.2 665.7 1001.0 668.9 999.0 672.6 997.2 677.1 995.6 682.1 994.4 686.7 993.6 690.9 993.2 694.7 992.9 697.4 992.9 793.4Z M997.3 793.5 997.3 697.8 997.6 695.2 998.0 691.5 998.8 687.4 1000.1 682.9 1001.6 678.1 1003.4 673.7 1005.4 670.2 1007.6 667.1 1010.3 664.0 1013.7 660.9 1017.6 657.8 1021.4 654.9 1025.1 652.3 1028.8 649.8 1032.6 647.1 1036.4 643.8 1040.2 640.2 1044.1 636.7 1048.1 633.5 1052.1 630.3 1055.6 627.6 1058.0 625.5 1059.9 623.7 1061.7 621.8 1063.7 619.1 1065.6 616.3 1067.1 614.0 1068.0 612.7 1068.5 612.0 1068.8 611.5 1072.4 614.2 1072.1 614.6 1071.6 615.3 1070.7 616.6 1069.2 618.8 1067.3 621.6 1065.3 624.1 1063.5 626.0 1061.6 627.7 1059.1 629.8 1055.7 632.5 1051.6 635.5 1047.6 638.7 1043.7 642.0 1039.8 645.6 1036.0 648.8 1032.3 651.5 1028.5 653.8 1024.8 656.4 1021.0 659.2 1017.1 662.2 1013.7 665.2 1011.0 668.2 1008.7 671.3 1006.7 674.7 1004.9 679.0 1003.3 683.7 1002.1 688.0 1001.3 692.0 1000.9 695.6 1000.6 698.1 1000.6 793.6Z M1004.9 793.7 1004.9 698.6 1005.2 696.2 1005.7 692.7 1006.5 688.9 1007.7 684.7 1009.3 680.2 1011.1 676.1 1013.1 672.8 1015.4 669.9 1018.1 667.0 1021.5 664.1 1025.4 661.3 1029.3 658.5 1033.1 656.1 1036.8 653.8 1040.6 651.3 1044.4 648.2 1048.3 644.8 1052.2 641.5 1056.3 638.5 1060.4 635.6 1063.9 633.0 1066.4 631.1 1068.3 629.4 1070.1 627.6 1072.1 625.1 1074.0 622.5 1075.5 620.4 1076.5 619.2 1077.0 618.4 1077.3 618.0 1081.0 621.1 1080.7 621.5 1080.1 622.2 1079.2 623.5 1077.7 625.5 1075.7 628.0 1073.7 630.4 1071.9 632.1 1070.0 633.7 1067.5 635.6 1064.0 638.1 1059.9 640.9 1055.8 643.9 1051.8 647.0 1047.9 650.3 1044.1 653.3 1040.3 655.7 1036.5 657.9 1032.7 660.3 1028.8 662.9 1024.9 665.7 1021.4 668.5 1018.7 671.3 1016.4 674.1 1014.4 677.3 1012.6 681.3 1011.0 685.6 1009.7 689.6 1008.9 693.3 1008.5 696.7 1008.2 699.0 1008.2 793.8Z M1012.5 793.9 1012.5 699.5 1012.8 697.3 1013.3 694.1 1014.1 690.6 1015.3 686.8 1016.9 682.7 1018.8 678.9 1020.8 675.8 1023.1 673.1 1025.9 670.5 1029.4 667.8 1033.3 665.2 1037.3 662.7 1041.0 660.5 1044.8 658.4 1048.7 656.0 1052.6 653.2 1056.5 650.1 1060.5 647.1 1064.6 644.3 1068.7 641.6 1072.3 639.2 1074.8 637.4 1076.7 635.9 1078.5 634.2 1080.6 632.0 1082.5 629.6 1084.1 627.7 1085.0 626.5 1085.6 625.8 1086.0 625.4 1089.7 628.7 1089.3 629.1 1088.7 629.8 1087.7 630.9 1086.2 632.8 1084.2 635.1 1082.2 637.2 1080.3 638.8 1078.4 640.3 1075.9 642.0 1072.3 644.3 1068.1 646.8 1064.0 649.5 1060.0 652.4 1056.0 655.4 1052.1 658.1 1048.3 660.4 1044.5 662.4 1040.7 664.5 1036.7 667.0 1032.7 669.5 1029.2 672.1 1026.4 674.6 1024.1 677.2 1022.1 680.1 1020.2 683.7 1018.6 687.7 1017.3 691.4 1016.5 694.8 1016.1 697.8 1015.8 700.0 1015.8 794.0Z M1020.1 794.1 1020.1 700.5 1020.4 698.5 1020.8 695.6 1021.7 692.4 1022.9 688.9 1024.6 685.2 1026.5 681.7 1028.5 679.0 1030.8 676.5 1033.6 674.1 1037.2 671.7 1041.2 669.3 1045.2 667.0 1049.0 665.0 1052.8 663.1 1056.7 660.9 1060.7 658.3 1064.7 655.5 1068.7 652.8 1072.9 650.3 1077.1 647.8 1080.6 645.7 1083.2 644.0 1085.2 642.6 1087.0 641.1 1089.1 639.1 1091.0 637.0 1092.6 635.2 1093.6 634.2 1094.3 633.5 1094.7 633.1 1098.4 636.3 1098.0 636.7 1097.3 637.4 1096.3 638.4 1094.7 640.1 1092.7 642.1 1090.6 644.0 1088.8 645.5 1086.8 646.8 1084.2 648.4 1080.6 650.4 1076.4 652.8 1072.2 655.2 1068.2 657.8 1064.1 660.5 1060.2 663.0 1056.3 665.0 1052.4 666.9 1048.6 668.8 1044.5 671.0 1040.5 673.3 1037.0 675.6 1034.1 677.9 1031.8 680.3 1029.7 682.9 1027.8 686.2 1026.2 689.8 1024.9 693.2 1024.1 696.2 1023.6 699.0 1023.3 700.9 1023.3 794.2Z M1027.6 794.4 1027.6 701.5 1027.9 699.6 1028.4 697.0 1029.3 694.1 1030.5 691.0 1032.2 687.6 1034.1 684.5 1036.2 681.9 1038.5 679.7 1041.4 677.6 1044.9 675.3 1049.0 673.2 1053.1 671.1 1056.9 669.3 1060.8 667.6 1064.7 665.6 1068.7 663.3 1072.8 660.7 1076.9 658.3 1081.1 656.0 1085.4 653.8 1089.0 651.8 1091.6 650.3 1093.6 649.1 1095.4 647.7 1097.5 645.9 1099.5 644.0 1101.1 642.4 1102.2 641.5 1102.9 640.8 1103.3 640.4 1107.0 643.3 1106.5 643.7 1105.8 644.3 1104.7 645.3 1103.1 646.8 1101.1 648.6 1099.0 650.3 1097.1 651.6 1095.1 652.8 1092.5 654.2 1088.9 656.1 1084.6 658.2 1080.3 660.4 1076.3 662.8 1072.2 665.2 1068.2 667.5 1064.2 669.3 1060.3 671.0 1056.4 672.7 1052.3 674.7 1048.3 676.8 1044.7 678.9 1041.8 681.0 1039.5 683.1 1037.4 685.5 1035.5 688.5 1033.8 691.8 1032.5 694.8 1031.7 697.5 1031.2 700.1 1030.9 701.8 1030.9 794.5Z M1035.2 794.6 1035.2 702.3 1035.5 700.6 1036.0 698.2 1036.8 695.6 1038.1 692.7 1039.8 689.6 1041.7 686.8 1043.8 684.5 1046.2 682.5 1049.1 680.5 1052.7 678.5 1056.8 676.5 1060.9 674.7 1064.8 673.0 1068.7 671.4 1072.7 669.7 1076.7 667.6 1080.8 665.2 1084.9 663.0 1089.2 660.9 1093.5 658.9 1097.2 657.1 1099.8 655.8 1101.8 654.6 1103.7 653.4 1105.8 651.8 1107.8 650.1 1109.4 648.7 1110.6 647.8 1111.3 647.2 1111.8 646.8 1115.3 649.1 1114.8 649.5 1114.1 650.1 1113.0 650.9 1111.3 652.3 1109.3 653.9 1107.2 655.4 1105.3 656.6 1103.3 657.7 1100.7 659.0 1097.0 660.7 1092.7 662.7 1088.4 664.7 1084.3 666.9 1080.1 669.1 1076.1 671.1 1072.1 672.8 1068.1 674.3 1064.2 675.9 1060.1 677.8 1056.0 679.7 1052.4 681.6 1049.5 683.5 1047.1 685.4 1045.0 687.6 1043.0 690.4 1041.4 693.3 1040.1 696.1 1039.2 698.6 1038.7 701.0 1038.4 702.6 1038.4 794.8Z M1042.7 794.9 1042.7 702.9 1043.0 701.3 1043.5 699.1 1044.4 696.7 1045.7 694.0 1047.3 691.2 1049.3 688.6 1051.4 686.5 1053.8 684.6 1056.7 682.8 1060.3 680.9 1064.5 679.1 1068.6 677.3 1072.6 675.8 1076.5 674.4 1080.5 672.7 1084.6 670.8 1088.7 668.6 1092.9 666.6 1097.2 664.6 1101.5 662.8 1105.2 661.1 1107.9 659.8 1109.9 658.8 1111.8 657.6 1113.9 656.2 1115.9 654.6 1117.6 653.4 1118.7 652.5 1119.5 652.0 1120.0 651.6 1123.4 652.9 1122.9 653.3 1122.1 653.8 1121.0 654.7 1119.3 655.9 1117.3 657.4 1115.2 658.8 1113.3 660.0 1111.3 661.0 1108.6 662.2 1104.9 663.8 1100.6 665.7 1096.2 667.6 1092.1 669.6 1087.9 671.7 1083.8 673.6 1079.8 675.2 1075.9 676.6 1071.9 678.1 1067.8 679.8 1063.6 681.6 1060.0 683.4 1057.1 685.2 1054.7 687.0 1052.5 689.1 1050.6 691.7 1048.9 694.5 1047.6 697.1 1046.7 699.4 1046.2 701.6 1045.9 703.1 1045.9 795.1Z M1050.2 795.3 1050.2 703.7 1050.5 702.2 1051.0 700.1 1051.9 697.8 1053.2 695.2 1054.9 692.5 1056.8 690.0 1059.0 687.9 1061.4 686.1 1064.3 684.4 1068.0 682.6 1072.1 680.8 1076.3 679.2 1080.2 677.7 1084.2 676.3 1088.2 674.8 1092.3 672.9 1096.5 670.8 1100.6 668.8 1105.0 666.9 1109.3 665.2 1113.1 663.6 1115.7 662.4 1117.7 661.4 1119.7 660.3 1121.8 658.9 1123.8 657.4 1125.5 656.2 1126.6 655.4 1127.4 654.8 1127.9 654.4 1131.4 655.9 1130.8 656.2 1130.1 656.8 1128.9 657.6 1127.2 658.8 1125.2 660.2 1123.1 661.6 1121.1 662.6 1119.1 663.6 1116.4 664.8 1112.7 666.4 1108.4 668.1 1104.0 670.0 1099.8 671.9 1095.7 673.9 1091.5 675.8 1087.5 677.3 1083.5 678.7 1079.6 680.1 1075.4 681.8 1071.2 683.5 1067.6 685.3 1064.6 687.0 1062.2 688.7 1060.1 690.7 1058.1 693.2 1056.4 695.9 1055.1 698.4 1054.2 700.7 1053.8 702.8 1053.4 704.2 1053.4 795.4Z M1057.7 795.6 1057.7 705.1 1058.0 703.7 1058.5 701.6 1059.4 699.4 1060.7 697.0 1062.4 694.3 1064.4 692.0 1066.5 690.0 1069.0 688.3 1071.9 686.6 1075.6 684.9 1079.7 683.3 1083.9 681.7 1087.9 680.2 1091.9 678.9 1096.0 677.4 1100.1 675.6 1104.3 673.7 1108.5 671.8 1112.9 670.0 1117.2 668.3 1121.0 666.8 1123.7 665.6 1125.7 664.6 1127.6 663.6 1129.8 662.3 1131.8 660.9 1133.5 659.7 1134.6 658.9 1135.4 658.4 1136.0 658.0 1139.4 659.9 1138.9 660.2 1138.1 660.7 1136.9 661.5 1135.3 662.6 1133.2 664.0 1131.1 665.3 1129.1 666.3 1127.1 667.3 1124.4 668.4 1120.6 669.9 1116.3 671.5 1111.9 673.3 1107.7 675.1 1103.5 677.0 1099.3 678.8 1095.3 680.3 1091.2 681.6 1087.2 682.9 1083.0 684.5 1078.8 686.1 1075.2 687.8 1072.2 689.4 1069.8 691.1 1067.6 693.0 1065.6 695.3 1063.9 697.9 1062.6 700.2 1061.7 702.4 1061.3 704.4 1060.9 705.8 1060.9 795.8Z M1065.2 796.1 1065.2 706.8 1065.5 705.5 1066.0 703.5 1066.9 701.4 1068.2 699.2 1069.9 696.7 1071.9 694.4 1074.1 692.6 1076.5 691.0 1079.5 689.5 1083.2 687.8 1087.4 686.3 1091.6 684.8 1095.7 683.4 1099.7 682.2 1103.8 680.8 1107.9 679.1 1112.1 677.2 1116.4 675.4 1120.8 673.8 1125.2 672.2 1129.0 670.8 1131.7 669.7 1133.7 668.7 1135.7 667.8 1137.8 666.5 1139.9 665.2 1141.6 664.1 1142.8 663.3 1143.6 662.8 1144.1 662.5 1147.6 664.6 1147.1 664.9 1146.3 665.4 1145.1 666.2 1143.4 667.2 1141.3 668.5 1139.2 669.7 1137.2 670.7 1135.1 671.6 1132.4 672.6 1128.6 674.0 1124.2 675.6 1119.8 677.2 1115.5 678.9 1111.3 680.7 1107.1 682.4 1103.0 683.7 1099.0 684.9 1094.9 686.2 1090.7 687.7 1086.5 689.2 1082.8 690.8 1079.8 692.3 1077.3 693.8 1075.2 695.6 1073.2 697.8 1071.4 700.2 1070.1 702.4 1069.2 704.5 1068.7 706.3 1068.4 707.6 1068.4 796.2Z M1072.7 796.5 1072.7 708.7 1073.0 707.5 1073.5 705.7 1074.4 703.7 1075.7 701.6 1077.5 699.3 1079.5 697.2 1081.6 695.5 1084.1 694.0 1087.1 692.6 1090.8 691.1 1095.1 689.6 1099.3 688.2 1103.4 687.0 1107.5 685.8 1111.6 684.5 1115.8 682.9 1120.0 681.2 1124.3 679.6 1128.8 678.0 1133.2 676.5 1137.0 675.2 1139.7 674.2 1141.8 673.3 1143.8 672.4 1145.9 671.3 1148.0 670.0 1149.7 669.0 1150.9 668.3 1151.8 667.8 1152.3 667.5 1155.9 669.7 1155.3 670.1 1154.4 670.5 1153.2 671.2 1151.5 672.2 1149.4 673.4 1147.3 674.5 1145.3 675.4 1143.2 676.2 1140.5 677.2 1136.7 678.5 1132.2 679.9 1127.7 681.4 1123.4 683.0 1119.2 684.7 1114.9 686.2 1110.8 687.5 1106.7 688.6 1102.6 689.8 1098.4 691.1 1094.1 692.5 1090.3 694.0 1087.4 695.4 1084.9 696.8 1082.7 698.5 1080.7 700.5 1078.9 702.7 1077.6 704.8 1076.7 706.7 1076.2 708.4 1075.9 709.6 1075.9 796.7Z M1080.1 797.0 1080.1 710.7 1080.5 709.6 1081.0 707.9 1081.8 706.1 1083.2 704.2 1084.9 702.1 1087.0 700.1 1089.2 698.6 1091.7 697.2 1094.7 695.9 1098.4 694.5 1102.7 693.1 1107.0 691.8 1111.1 690.7 1115.2 689.6 1119.4 688.4 1123.6 687.0 1127.9 685.4 1132.2 683.9 1136.7 682.4 1141.2 681.0 1145.1 679.8 1147.8 678.9 1149.9 678.1 1151.9 677.3 1154.1 676.2 1156.2 675.1 1157.9 674.1 1159.1 673.5 1160.0 673.0 1160.5 672.7 1164.1 675.0 1163.5 675.2 1162.6 675.7 1161.4 676.3 1159.7 677.2 1157.6 678.3 1155.4 679.3 1153.4 680.2 1151.3 680.9 1148.5 681.8 1144.7 683.0 1140.1 684.3 1135.6 685.7 1131.3 687.2 1127.0 688.7 1122.8 690.1 1118.6 691.2 1114.5 692.3 1110.3 693.4 1106.0 694.6 1101.7 695.9 1097.9 697.2 1094.9 698.5 1092.4 699.9 1090.2 701.4 1088.2 703.2 1086.4 705.3 1085.0 707.2 1084.2 708.9 1083.6 710.5 1083.3 711.6 1083.3 797.2Z M1087.6 797.5 1087.6 712.7 1087.9 711.6 1088.4 710.1 1089.3 708.5 1090.7 706.7 1092.4 704.7 1094.5 703.0 1096.7 701.5 1099.2 700.3 1102.2 699.0 1106.1 697.8 1110.4 696.5 1114.7 695.4 1118.9 694.3 1123.0 693.3 1127.2 692.2 1131.5 690.9 1135.8 689.4 1140.1 688.0 1144.7 686.7 1149.2 685.5 1153.1 684.4 1155.9 683.5 1158.0 682.8 1160.0 682.0 1162.2 681.0 1164.3 680.0 1166.0 679.1 1167.3 678.5 1168.2 678.1 1168.7 677.8 1172.2 679.9 1171.6 680.2 1170.8 680.6 1169.5 681.2 1167.8 682.0 1165.6 683.0 1163.4 683.9 1161.4 684.7 1159.3 685.4 1156.5 686.2 1152.6 687.3 1148.1 688.5 1143.5 689.7 1139.2 691.1 1134.8 692.5 1130.5 693.8 1126.3 694.8 1122.2 695.8 1118.0 696.8 1113.7 697.9 1109.3 699.1 1105.5 700.3 1102.4 701.5 1099.9 702.7 1097.7 704.1 1095.6 705.8 1093.9 707.7 1092.5 709.4 1091.6 711.0 1091.1 712.5 1090.8 713.5 1090.8 797.7Z M1095.0 798.0 1095.0 714.4 1095.3 713.5 1095.8 712.1 1096.7 710.6 1098.1 708.9 1099.9 707.2 1102.0 705.5 1104.2 704.2 1106.7 703.1 1109.8 701.9 1113.6 700.8 1118.0 699.6 1122.4 698.6 1126.5 697.6 1130.7 696.7 1134.9 695.7 1139.3 694.5 1143.6 693.1 1148.0 691.9 1152.6 690.7 1157.1 689.5 1161.0 688.5 1163.8 687.7 1166.0 687.0 1168.0 686.3 1170.2 685.4 1172.3 684.5 1174.1 683.7 1175.3 683.1 1176.2 682.7 1176.8 682.5 1180.3 684.3 1179.7 684.5 1178.8 684.9 1177.5 685.4 1175.8 686.2 1173.6 687.1 1171.4 688.0 1169.4 688.7 1167.2 689.3 1164.4 690.0 1160.5 691.0 1155.9 692.1 1151.3 693.3 1147.0 694.6 1142.6 695.8 1138.2 697.0 1134.0 698.0 1129.8 698.9 1125.6 699.8 1121.3 700.8 1116.9 701.9 1113.0 703.1 1110.0 704.1 1107.4 705.3 1105.2 706.5 1103.1 708.1 1101.3 709.8 1099.9 711.4 1099.0 712.9 1098.5 714.2 1098.2 715.1 1098.2 798.2Z M1102.4 798.5 1102.4 715.9 1102.7 715.0 1103.3 713.8 1104.2 712.4 1105.6 710.8 1107.3 709.2 1109.4 707.7 1111.7 706.5 1114.2 705.4 1117.3 704.4 1121.2 703.3 1125.6 702.2 1130.0 701.2 1134.2 700.4 1138.4 699.5 1142.6 698.6 1147.0 697.5 1151.4 696.2 1155.8 695.0 1160.4 693.9 1165.0 692.8 1168.9 691.9 1171.7 691.2 1173.8 690.6 1175.9 689.9 1178.1 689.1 1180.3 688.2 1182.0 687.5 1183.3 687.0 1184.2 686.6 1184.8 686.4 1188.2 687.7 1187.6 687.9 1186.7 688.3 1185.4 688.8 1183.6 689.5 1181.5 690.4 1179.2 691.2 1177.2 691.8 1175.0 692.4 1172.2 693.1 1168.3 694.0 1163.7 695.0 1159.1 696.1 1154.6 697.3 1150.2 698.5 1145.9 699.6 1141.6 700.5 1137.4 701.3 1133.2 702.2 1128.8 703.1 1124.4 704.2 1120.5 705.2 1117.4 706.2 1114.9 707.3 1112.6 708.4 1110.5 709.9 1108.7 711.5 1107.3 713.0 1106.4 714.3 1105.9 715.6 1105.6 716.4 1105.6 798.8Z M1109.8 799.1 1109.8 717.0 1110.1 716.1 1110.6 714.9 1111.6 713.6 1113.0 712.2 1114.8 710.6 1116.8 709.2 1119.1 708.1 1121.7 707.1 1124.8 706.1 1128.6 705.1 1133.1 704.1 1137.5 703.1 1141.7 702.3 1145.9 701.5 1150.2 700.7 1154.6 699.6 1159.0 698.4 1163.4 697.3 1168.0 696.3 1172.7 695.2 1176.6 694.4 1179.4 693.7 1181.6 693.1 1183.6 692.5 1185.9 691.7 1188.0 690.9 1189.8 690.2 1191.1 689.7 1192.0 689.4 1192.6 689.1 1195.5 689.6 1194.9 689.9 1194.0 690.2 1192.7 690.7 1191.0 691.4 1188.8 692.2 1186.6 693.0 1184.5 693.6 1182.4 694.2 1179.6 694.9 1175.6 695.8 1171.0 696.8 1166.4 697.8 1162.0 698.9 1157.6 700.1 1153.3 701.2 1149.0 702.0 1144.8 702.8 1140.6 703.7 1136.2 704.6 1131.8 705.6 1127.9 706.6 1124.8 707.6 1122.2 708.6 1120.0 709.7 1117.9 711.1 1116.1 712.7 1114.7 714.1 1113.8 715.4 1113.3 716.6 1113.0 717.5 1113.0 799.3Z M1117.2 799.6 1117.2 718.3 1117.5 717.5 1118.0 716.3 1118.9 714.9 1120.3 713.5 1122.1 712.0 1124.2 710.6 1126.4 709.4 1128.9 708.4 1132.0 707.4 1135.9 706.4 1140.2 705.4 1144.6 704.5 1148.8 703.6 1153.0 702.9 1157.2 702.0 1161.6 700.9 1166.0 699.8 1170.3 698.6 1174.9 697.6 1179.5 696.6 1183.4 695.7 1186.2 695.0 1188.4 694.4 1190.4 693.8 1192.6 693.0 1194.8 692.2 1196.5 691.5 1197.8 691.0 1198.7 690.7 1199.3 690.5 1202.1 691.2 1201.5 691.4 1200.6 691.7 1199.3 692.2 1197.6 692.9 1195.5 693.8 1193.2 694.5 1191.2 695.2 1189.1 695.7 1186.3 696.4 1182.4 697.3 1177.8 698.3 1173.3 699.4 1168.9 700.5 1164.5 701.6 1160.2 702.7 1156.0 703.6 1151.8 704.4 1147.7 705.2 1143.3 706.1 1138.9 707.1 1135.1 708.1 1132.1 709.1 1129.5 710.1 1127.3 711.3 1125.2 712.7 1123.5 714.2 1122.1 715.7 1121.2 717.0 1120.7 718.2 1120.3 719.0 1120.3 799.8Z M1124.5 800.1 1124.5 720.1 1124.8 719.3 1125.4 718.1 1126.3 716.8 1127.6 715.3 1129.4 713.8 1131.4 712.4 1133.7 711.2 1136.2 710.2 1139.2 709.2 1143.0 708.2 1147.3 707.2 1151.7 706.3 1155.8 705.4 1159.9 704.7 1164.1 703.8 1168.4 702.7 1172.8 701.6 1177.1 700.4 1181.6 699.4 1186.2 698.4 1190.0 697.5 1192.8 696.8 1194.9 696.2 1196.9 695.6 1199.1 694.8 1201.2 694.0 1203.0 693.3 1204.3 692.8 1205.2 692.5 1205.8 692.2 1208.5 693.1 1207.9 693.4 1207.0 693.7 1205.7 694.2 1203.9 694.9 1201.9 695.7 1199.7 696.5 1197.7 697.1 1195.6 697.7 1192.8 698.4 1189.0 699.3 1184.4 700.3 1179.9 701.3 1175.6 702.4 1171.3 703.6 1167.1 704.7 1162.9 705.6 1158.8 706.3 1154.7 707.2 1150.4 708.1 1146.0 709.1 1142.3 710.1 1139.2 711.1 1136.7 712.1 1134.5 713.3 1132.5 714.7 1130.8 716.2 1129.4 717.6 1128.5 719.0 1128.0 720.2 1127.7 721.0 1127.7 800.3Z M1131.9 800.6 1131.9 722.3 1132.2 721.4 1132.7 720.2 1133.6 718.9 1134.9 717.5 1136.6 715.9 1138.7 714.5 1140.9 713.4 1143.3 712.4 1146.3 711.4 1150.1 710.4 1154.4 709.4 1158.6 708.4 1162.7 707.6 1166.8 706.8 1170.9 705.9 1175.1 704.9 1179.4 703.7 1183.7 702.6 1188.2 701.5 1192.6 700.5 1196.5 699.6 1199.2 699.0 1201.3 698.4 1203.3 697.8 1205.4 697.0 1207.5 696.2 1209.2 695.5 1210.5 695.0 1211.4 694.6 1212.0 694.4 1214.6 695.4 1214.0 695.6 1213.1 696.0 1211.8 696.5 1210.1 697.2 1208.1 698.0 1205.9 698.8 1204.0 699.4 1201.9 700.0 1199.2 700.7 1195.4 701.5 1190.9 702.6 1186.5 703.6 1182.2 704.7 1178.0 705.9 1173.8 707.0 1169.7 707.8 1165.6 708.6 1161.6 709.5 1157.3 710.4 1153.1 711.4 1149.4 712.4 1146.4 713.4 1143.9 714.4 1141.8 715.5 1139.8 717.0 1138.0 718.5 1136.7 719.9 1135.8 721.3 1135.3 722.5 1135.0 723.3 1135.0 800.8Z M1139.2 801.1 1139.2 724.7 1139.5 723.9 1140.0 722.7 1140.9 721.4 1142.2 719.9 1143.9 718.4 1145.9 717.0 1148.0 715.8 1150.5 714.8 1153.4 713.8 1157.1 712.8 1161.3 711.8 1165.5 710.9 1169.5 710.0 1173.6 709.2 1177.6 708.4 1181.8 707.3 1186.0 706.1 1190.2 705.0 1194.6 704.0 1199.0 703.0 1202.8 702.1 1205.5 701.4 1207.5 700.8 1209.5 700.2 1211.6 699.4 1213.6 698.6 1215.3 697.9 1216.6 697.4 1217.5 697.0 1218.1 696.8 1220.7 697.8 1220.1 698.1 1219.1 698.5 1217.9 698.9 1216.2 699.6 1214.2 700.5 1212.1 701.3 1210.1 701.9 1208.1 702.4 1205.4 703.1 1201.7 704.0 1197.3 705.0 1192.9 706.1 1188.8 707.2 1184.6 708.4 1180.5 709.4 1176.4 710.3 1172.4 711.1 1168.4 711.9 1164.3 712.9 1160.1 713.9 1156.4 714.9 1153.5 715.9 1151.1 716.9 1148.9 718.0 1147.0 719.4 1145.3 721.0 1143.9 722.4 1143.1 723.8 1142.6 725.0 1142.3 725.8 1142.3 801.3Z M1146.4 801.6 1146.4 727.3 1146.7 726.4 1147.2 725.2 1148.1 723.9 1149.4 722.5 1151.1 720.9 1153.0 719.5 1155.1 718.3 1157.5 717.3 1160.4 716.4 1164.1 715.3 1168.2 714.3 1172.3 713.4 1176.3 712.6 1180.2 711.8 1184.2 710.9 1188.3 709.8 1192.4 708.7 1196.6 707.5 1200.9 706.5 1205.2 705.5 1208.9 704.6 1211.6 703.9 1213.6 703.3 1215.5 702.7 1217.6 701.9 1219.6 701.1 1221.3 700.4 1222.5 699.9 1223.5 699.5 1224.1 699.3 1226.6 700.4 1226.0 700.6 1225.0 701.0 1223.8 701.5 1222.1 702.2 1220.1 703.0 1218.1 703.8 1216.2 704.4 1214.2 705.0 1211.5 705.7 1207.9 706.6 1203.6 707.6 1199.3 708.6 1195.2 709.7 1191.1 710.9 1187.0 712.0 1183.0 712.9 1179.1 713.6 1175.2 714.5 1171.1 715.4 1167.0 716.4 1163.4 717.4 1160.5 718.4 1158.1 719.4 1156.0 720.6 1154.1 722.0 1152.4 723.6 1151.1 725.0 1150.3 726.3 1149.8 727.5 1149.5 728.3 1149.5 801.8Z M1153.5 802.1 1153.5 729.8 1153.8 729.0 1154.3 727.8 1155.2 726.4 1156.4 725.0 1158.1 723.4 1160.0 722.0 1162.1 720.9 1164.5 719.9 1167.3 718.9 1170.9 717.9 1174.9 716.9 1179.0 715.9 1182.9 715.1 1186.8 714.3 1190.7 713.4 1194.7 712.4 1198.8 711.2 1202.9 710.1 1207.1 709.0 1211.4 708.0 1215.0 707.1 1217.6 706.4 1219.6 705.8 1221.5 705.2 1223.5 704.4 1225.5 703.6 1227.1 702.9 1228.4 702.4 1229.3 702.0 1229.9 701.8 1232.4 702.8 1231.8 703.1 1230.9 703.5 1229.6 704.0 1228.0 704.7 1226.0 705.5 1224.0 706.3 1222.1 706.9 1220.2 707.5 1217.6 708.2 1214.0 709.0 1209.7 710.1 1205.5 711.1 1201.5 712.2 1197.4 713.4 1193.4 714.5 1189.5 715.4 1185.7 716.1 1181.8 717.0 1177.8 717.9 1173.8 718.9 1170.2 719.9 1167.4 720.9 1165.0 721.9 1163.0 723.1 1161.1 724.5 1159.4 726.0 1158.1 727.5 1157.3 728.8 1156.8 730.0 1156.5 730.8 1156.5 802.3Z M1160.5 802.5 1160.5 732.2 1160.8 731.4 1161.3 730.2 1162.1 728.9 1163.4 727.4 1165.0 725.9 1166.9 724.4 1169.0 723.3 1171.3 722.3 1174.1 721.3 1177.6 720.3 1181.6 719.3 1185.6 718.3 1189.4 717.5 1193.2 716.7 1197.1 715.8 1201.1 714.8 1205.1 713.6 1209.1 712.5 1213.2 711.4 1217.4 710.4 1221.0 709.5 1223.6 708.8 1225.5 708.3 1227.4 707.6 1229.4 706.9 1231.3 706.0 1232.9 705.3 1234.2 704.8 1235.1 704.4 1235.7 704.2 1238.2 705.1 1237.6 705.4 1236.6 705.8 1235.4 706.3 1233.8 707.0 1231.9 707.8 1229.9 708.6 1228.0 709.2 1226.1 709.8 1223.5 710.5 1220.0 711.4 1215.8 712.4 1211.7 713.5 1207.7 714.6 1203.7 715.7 1199.8 716.8 1196.0 717.7 1192.2 718.5 1188.4 719.3 1184.4 720.3 1180.4 721.3 1177.0 722.3 1174.2 723.3 1171.9 724.3 1169.8 725.4 1168.0 726.8 1166.3 728.4 1165.1 729.8 1164.3 731.2 1163.8 732.4 1163.5 733.2 1163.5 802.8Z M1167.5 803.1 1167.5 734.4 1167.7 733.6 1168.2 732.4 1169.0 731.1 1170.3 729.6 1171.9 728.1 1173.7 726.7 1175.7 725.5 1178.0 724.5 1180.8 723.5 1184.2 722.5 1188.2 721.5 1192.1 720.6 1195.9 719.7 1199.6 718.9 1203.4 718.1 1207.3 717.0 1211.3 715.8 1215.2 714.7 1219.3 713.6 1223.5 712.6 1227.0 711.7 1229.5 711.0 1231.4 710.5 1233.2 709.8 1235.2 709.1 1237.1 708.2 1238.7 707.5 1240.0 707.0 1240.9 706.6 1241.5 706.4 1244.0 707.2 1243.4 707.5 1242.4 707.9 1241.2 708.4 1239.6 709.1 1237.7 709.9 1235.8 710.7 1233.9 711.3 1232.0 711.9 1229.5 712.6 1226.0 713.5 1221.9 714.5 1217.8 715.5 1213.9 716.7 1210.0 717.8 1206.1 718.9 1202.4 719.8 1198.6 720.6 1194.9 721.4 1191.0 722.4 1187.1 723.4 1183.6 724.4 1180.9 725.4 1178.6 726.4 1176.6 727.5 1174.8 728.9 1173.2 730.5 1171.9 731.9 1171.1 733.3 1170.7 734.5 1170.4 735.3 1170.4 803.3Z M1174.2 803.6 1174.2 736.4 1174.5 735.5 1175.0 734.3 1175.8 733.0 1177.0 731.6 1178.6 730.0 1180.4 728.6 1182.4 727.4 1184.7 726.4 1187.4 725.4 1190.8 724.4 1194.7 723.4 1198.6 722.5 1202.3 721.6 1206.0 720.9 1209.8 720.0 1213.6 718.9 1217.5 717.7 1221.4 716.6 1225.4 715.5 1229.5 714.5 1233.0 713.6 1235.5 713.0 1237.3 712.4 1239.1 711.8 1241.1 711.0 1243.0 710.1 1244.6 709.4 1245.8 708.9 1246.7 708.5 1247.3 708.3 1249.8 709.0 1249.2 709.2 1248.3 709.6 1247.1 710.2 1245.5 710.9 1243.6 711.7 1241.7 712.5 1239.9 713.1 1238.0 713.7 1235.5 714.4 1232.1 715.2 1228.0 716.3 1224.0 717.3 1220.1 718.4 1216.3 719.6 1212.4 720.7 1208.7 721.6 1205.0 722.4 1201.3 723.2 1197.5 724.1 1193.6 725.1 1190.2 726.2 1187.5 727.1 1185.3 728.2 1183.3 729.3 1181.4 730.7 1179.9 732.3 1178.7 733.7 1177.9 735.0 1177.4 736.3 1177.1 737.1 1177.1 803.9Z M1180.9 804.3 1180.9 737.9 1181.2 737.1 1181.7 735.9 1182.5 734.6 1183.7 733.1 1185.2 731.6 1187.1 730.2 1189.0 729.0 1191.3 728.0 1193.9 727.0 1197.3 726.0 1201.2 725.0 1205.0 724.0 1208.7 723.2 1212.3 722.4 1216.0 721.5 1219.8 720.5 1223.7 719.3 1227.5 718.2 1231.5 717.1 1235.6 716.1 1239.0 715.2 1241.5 714.5 1243.3 713.9 1245.1 713.3 1247.1 712.5 1248.9 711.7 1250.5 711.0 1251.7 710.5 1252.6 710.1 1253.2 709.8 1255.8 710.3 1255.2 710.6 1254.2 711.0 1253.0 711.5 1251.5 712.2 1249.6 713.1 1247.7 713.8 1245.9 714.5 1244.0 715.0 1241.6 715.7 1238.2 716.6 1234.2 717.6 1230.2 718.7 1226.3 719.8 1222.5 721.0 1218.7 722.1 1215.0 723.0 1211.4 723.7 1207.7 724.6 1203.9 725.5 1200.1 726.5 1196.7 727.5 1194.0 728.5 1191.8 729.5 1189.9 730.7 1188.0 732.1 1186.5 733.7 1185.3 735.1 1184.5 736.4 1184.0 737.6 1183.8 738.5 1183.8 804.6Z M1187.5 805.0 1187.5 739.1 1187.8 738.3 1188.2 737.1 1189.0 735.7 1190.2 734.3 1191.8 732.7 1193.6 731.3 1195.5 730.2 1197.7 729.1 1200.4 728.1 1203.7 727.1 1207.5 726.1 1211.3 725.2 1214.9 724.3 1218.6 723.5 1222.3 722.7 1226.0 721.6 1229.8 720.4 1233.6 719.3 1237.6 718.2 1241.6 717.2 1245.0 716.3 1247.5 715.6 1249.4 715.1 1251.1 714.4 1253.1 713.7 1254.9 712.8 1256.5 712.1 1257.7 711.6 1258.6 711.2 1259.3 710.9 1261.9 711.5 1261.3 711.7 1260.4 712.1 1259.1 712.6 1257.5 713.3 1255.6 714.1 1253.5 714.9 1251.7 715.6 1249.7 716.1 1247.2 716.8 1243.7 717.7 1239.7 718.7 1235.7 719.8 1231.9 720.9 1228.1 722.0 1224.4 723.1 1220.7 724.0 1217.2 724.8 1213.6 725.6 1209.9 726.6 1206.2 727.6 1202.9 728.6 1200.3 729.7 1198.1 730.7 1196.2 731.9 1194.5 733.4 1193.0 735.0 1191.8 736.5 1191.0 737.9 1190.6 739.2 1190.3 740.0 1190.3 805.4Z M1194.0 805.9 1194.0 741.5 1194.3 740.6 1194.7 739.2 1195.4 737.7 1196.5 736.2 1198.0 734.5 1199.7 733.0 1201.5 731.7 1203.6 730.6 1206.1 729.5 1209.3 728.4 1212.9 727.3 1216.5 726.4 1219.9 725.5 1223.4 724.7 1227.0 723.8 1230.7 722.8 1234.4 721.6 1238.2 720.6 1242.2 719.5 1246.3 718.5 1249.8 717.7 1252.4 717.0 1254.5 716.4 1256.6 715.7 1258.8 714.9 1260.9 714.1 1262.6 713.4 1263.9 712.9 1264.8 712.6 1265.4 712.3 1268.0 713.1 1267.4 713.3 1266.5 713.6 1265.1 714.1 1263.3 714.8 1261.1 715.7 1258.7 716.5 1256.6 717.1 1254.3 717.7 1251.5 718.4 1248.0 719.3 1243.9 720.2 1239.9 721.3 1236.1 722.3 1232.4 723.4 1228.7 724.4 1225.2 725.3 1221.8 726.1 1218.5 727.0 1215.0 728.0 1211.5 729.1 1208.5 730.2 1206.0 731.3 1204.0 732.5 1202.2 733.9 1200.6 735.5 1199.2 737.2 1198.1 738.8 1197.4 740.4 1197.0 741.8 1196.7 742.9 1196.7 806.2Z M1200.3 806.8 1200.3 744.8 1200.6 743.7 1201.0 742.1 1201.7 740.5 1202.7 738.7 1204.0 736.9 1205.5 735.3 1207.3 733.8 1209.2 732.5 1211.5 731.3 1214.4 730.1 1217.7 729.0 1221.0 728.0 1224.2 727.1 1227.5 726.3 1230.9 725.4 1234.5 724.4 1238.2 723.3 1242.0 722.3 1246.0 721.3 1250.1 720.4 1253.7 719.5 1256.6 718.8 1259.1 718.2 1261.5 717.5 1264.0 716.7 1266.5 715.9 1268.5 715.2 1269.8 714.7 1270.7 714.4 1271.3 714.2 1273.8 715.1 1273.2 715.3 1272.3 715.6 1270.9 716.0 1268.8 716.7 1266.2 717.6 1263.5 718.4 1260.9 719.0 1258.3 719.7 1255.3 720.4 1251.6 721.2 1247.4 722.2 1243.4 723.1 1239.7 724.1 1236.0 725.1 1232.4 726.1 1229.1 727.0 1225.9 727.8 1222.8 728.8 1219.6 729.8 1216.5 730.9 1213.8 732.2 1211.5 733.4 1209.6 734.8 1208.0 736.4 1206.5 738.1 1205.3 740.0 1204.3 741.8 1203.6 743.5 1203.3 745.2 1203.0 746.4 1203.0 807.2Z M1206.6 807.8 1206.6 748.6 1206.8 747.4 1207.2 745.5 1207.8 743.6 1208.7 741.7 1209.8 739.7 1211.2 737.9 1212.8 736.3 1214.6 734.8 1216.7 733.4 1219.3 732.1 1222.2 730.9 1225.2 729.9 1228.1 728.9 1231.1 728.1 1234.4 727.2 1237.8 726.2 1241.5 725.3 1245.2 724.3 1249.3 723.4 1253.4 722.5 1257.2 721.6 1260.4 720.9 1263.3 720.3 1266.1 719.6 1269.0 718.8 1271.9 717.9 1274.2 717.2 1275.6 716.8 1276.5 716.5 1277.0 716.4 1279.4 717.3 1278.9 717.5 1278.0 717.7 1276.5 718.1 1274.1 718.8 1271.1 719.7 1268.0 720.5 1265.0 721.2 1262.0 721.9 1258.6 722.6 1254.7 723.4 1250.6 724.3 1246.5 725.2 1242.8 726.1 1239.1 727.1 1235.7 728.0 1232.6 728.9 1229.7 729.8 1226.8 730.7 1224.0 731.8 1221.2 733.0 1218.8 734.3 1216.8 735.8 1215.1 737.4 1213.6 739.1 1212.3 741.0 1211.2 743.0 1210.3 745.0 1209.8 747.0 1209.4 749.0 1209.2 750.3 1209.2 808.2Z M1212.7 808.8 1212.7 752.6 1212.9 751.2 1213.2 749.1 1213.8 746.9 1214.6 744.9 1215.5 742.7 1216.7 740.7 1218.1 738.9 1219.7 737.2 1221.6 735.6 1223.9 734.2 1226.4 733.0 1229.1 731.9 1231.7 730.9 1234.5 730.0 1237.5 729.1 1240.9 728.2 1244.5 727.3 1248.2 726.4 1252.3 725.6 1256.5 724.7 1260.4 723.9 1264.0 723.1 1267.3 722.5 1270.5 721.8 1273.9 720.9 1277.1 720.0 1279.7 719.4 1281.2 718.9 1282.1 718.7 1282.6 718.6 1284.9 719.5 1284.4 719.7 1283.6 719.9 1282.0 720.3 1279.3 721.0 1275.9 721.8 1272.3 722.7 1269.0 723.4 1265.5 724.1 1261.8 724.8 1257.7 725.6 1253.5 726.5 1249.5 727.3 1245.7 728.2 1242.2 729.0 1238.9 729.9 1235.9 730.8 1233.3 731.7 1230.7 732.7 1228.2 733.9 1225.8 735.1 1223.7 736.6 1221.9 738.2 1220.4 740.0 1219.1 741.9 1217.9 744.0 1217.0 746.2 1216.3 748.3 1215.8 750.6 1215.5 752.8 1215.3 754.4 1215.3 809.2Z M1218.8 809.8 1218.8 756.6 1218.9 754.9 1219.2 752.6 1219.7 750.2 1220.3 747.9 1221.1 745.6 1222.2 743.4 1223.4 741.4 1224.8 739.5 1226.5 737.8 1228.4 736.3 1230.6 735.0 1232.9 733.8 1235.3 732.8 1237.8 731.9 1240.7 731.0 1243.9 730.1 1247.4 729.3 1251.2 728.5 1255.2 727.7 1259.5 726.9 1263.6 726.1 1267.5 725.3 1271.2 724.6 1274.8 723.9 1278.6 723.0 1282.3 722.2 1285.1 721.5 1286.8 721.1 1287.6 720.9 1288.1 720.8 1290.4 721.6 1289.9 721.8 1289.1 721.9 1287.4 722.3 1284.5 723.0 1280.6 723.9 1276.7 724.8 1272.9 725.5 1269.0 726.2 1265.0 726.9 1260.8 727.7 1256.5 728.5 1252.4 729.4 1248.7 730.1 1245.2 730.9 1242.0 731.8 1239.3 732.6 1236.9 733.6 1234.6 734.6 1232.4 735.8 1230.4 737.1 1228.6 738.7 1227.0 740.5 1225.6 742.4 1224.5 744.6 1223.5 746.8 1222.8 749.2 1222.2 751.5 1221.7 754.0 1221.5 756.5 1221.3 758.2 1221.3 810.2Z M1224.7 810.8 1224.7 760.2 1224.9 758.4 1225.1 755.8 1225.5 753.2 1226.0 750.8 1226.7 748.3 1227.6 746.0 1228.7 743.8 1229.9 741.7 1231.4 739.8 1233.0 738.2 1234.9 736.8 1236.9 735.6 1239.0 734.5 1241.3 733.6 1244.0 732.7 1247.1 731.9 1250.5 731.2 1254.3 730.4 1258.3 729.6 1262.6 728.8 1266.9 728.1 1271.1 727.3 1275.2 726.6 1279.2 725.9 1283.4 725.0 1287.4 724.1 1290.6 723.4 1292.3 723.0 1293.0 722.9 1293.5 722.8 1295.7 723.5 1295.3 723.6 1294.5 723.8 1292.8 724.1 1289.6 724.8 1285.4 725.7 1281.1 726.6 1276.9 727.3 1272.6 728.1 1268.4 728.8 1264.0 729.6 1259.7 730.4 1255.6 731.1 1251.9 731.9 1248.5 732.6 1245.4 733.4 1242.8 734.2 1240.6 735.2 1238.6 736.3 1236.7 737.5 1235.0 738.9 1233.4 740.5 1232.1 742.5 1230.8 744.6 1229.8 746.9 1229.0 749.3 1228.4 751.8 1227.9 754.3 1227.5 757.0 1227.3 759.7 1227.1 761.5 1227.1 811.2Z M1230.4 811.7 1230.4 763.2 1230.6 761.2 1230.8 758.5 1231.1 755.7 1231.5 753.1 1232.1 750.5 1232.8 748.0 1233.8 745.7 1234.9 743.4 1236.2 741.4 1237.6 739.8 1239.2 738.4 1241.0 737.1 1242.9 736.0 1245.0 735.0 1247.5 734.2 1250.5 733.4 1253.9 732.7 1257.6 732.0 1261.7 731.3 1266.1 730.5 1270.5 729.7 1274.9 729.0 1279.3 728.2 1283.6 727.5 1288.1 726.6 1292.5 725.7 1295.8 725.0 1297.6 724.6 1298.3 724.5 1298.8 724.4 1300.9 725.0 1300.5 725.0 1299.8 725.2 1298.0 725.5 1294.6 726.2 1290.1 727.1 1285.5 728.0 1281.1 728.8 1276.5 729.6 1272.0 730.3 1267.6 731.1 1263.2 731.8 1259.2 732.6 1255.4 733.2 1252.0 733.9 1249.1 734.6 1246.6 735.5 1244.6 736.5 1242.7 737.6 1241.1 738.9 1239.6 740.3 1238.3 742.0 1237.0 744.0 1235.9 746.3 1235.0 748.8 1234.3 751.3 1233.8 753.9 1233.4 756.5 1233.1 759.4 1232.9 762.2 1232.7 764.2 1232.7 812.1Z M1235.9 812.5 1235.9 765.4 1236.0 763.3 1236.2 760.4 1236.5 757.5 1236.9 754.8 1237.3 752.1 1238.0 749.6 1238.8 747.1 1239.9 744.7 1241.1 742.7 1242.3 740.9 1243.7 739.5 1245.2 738.2 1247.0 737.0 1248.9 736.1 1251.3 735.2 1254.3 734.5 1257.7 733.8 1261.4 733.2 1265.4 732.4 1269.8 731.7 1274.3 730.9 1278.9 730.2 1283.6 729.4 1288.2 728.7 1292.9 727.8 1297.5 726.9 1301.0 726.2 1302.8 725.8 1303.5 725.7 1303.9 725.6 1306.1 725.9 1305.7 726.0 1305.0 726.1 1303.1 726.5 1299.6 727.2 1294.9 728.1 1290.1 729.0 1285.5 729.8 1280.7 730.5 1276.1 731.3 1271.6 732.0 1267.2 732.8 1263.1 733.5 1259.4 734.1 1256.0 734.8 1253.1 735.5 1250.7 736.4 1248.8 737.4 1247.1 738.5 1245.6 739.8 1244.3 741.3 1243.1 743.0 1242.0 745.1 1241.0 747.5 1240.1 750.0 1239.5 752.6 1239.1 755.3 1238.7 758.0 1238.4 761.0 1238.2 763.9 1238.1 766.0 1238.1 812.5Z"/></g>
<path d="M488.0 710.0 L494.0 708.8 L500.0 706.3 L506.0 703.7 L512.0 701.4 L518.0 699.5 L524.0 698.2 L530.0 697.2 L536.0 696.5 L542.0 696.0 L548.0 695.6 L554.0 695.3 L560.0 695.0 L566.0 694.7 L572.0 694.5 L578.0 694.4 L584.0 694.3 L590.0 694.2 L596.0 694.1 L602.0 694.1 L608.0 694.0 L614.0 693.9 L620.0 693.7 L626.0 693.5 L632.0 693.2 L638.0 692.8 L644.0 692.3 L650.0 691.7 L656.0 691.1 L662.0 690.4 L668.0 689.7 L674.0 689.0 L680.0 688.2 L686.0 687.5 L692.0 686.8 L698.0 686.2 L704.0 685.6 L710.0 685.1 L716.0 684.5 L722.0 684.0 L728.0 683.5 L734.0 682.9 L740.0 682.4 L746.0 681.9 L752.0 681.4 L758.0 681.0 L764.0 680.5 L770.0 680.0 L776.0 679.5 L782.0 679.0 L788.0 678.4 L794.0 677.8 L800.0 677.2 L806.0 676.7 L812.0 676.1 L818.0 675.6 L824.0 675.1 L830.0 674.7 L836.0 674.4 L842.0 674.2 L848.0 674.0 L854.0 674.0 L860.0 673.9 L866.0 673.9 L872.0 674.0 L878.0 674.0 L884.0 674.1 L890.0 674.2 L896.0 674.3 L902.0 674.5 L908.0 674.7 L914.0 674.9 L920.0 675.1 L926.0 675.3 L932.0 675.6 L938.0 675.8 L944.0 676.1 L950.0 676.4 L956.0 676.7 L962.0 677.1 L968.0 677.4 L974.0 677.8 L980.0 678.1 L986.0 678.6 L992.0 679.0 L998.0 679.6 L1004.0 680.2 L1010.0 680.9 L1016.0 681.6 L1022.0 682.4 L1028.0 683.2 L1034.0 684.1 L1040.0 685.0 L1046.0 686.0 L1052.0 687.0 L1058.0 688.2 L1064.0 689.4 L1070.0 690.7 L1076.0 692.0 L1082.0 693.4 L1088.0 694.9 L1094.0 696.4 L1100.0 698.0 L1106.0 699.8 L1112.0 701.8 L1118.0 703.9 L1124.0 706.0 L1130.0 708.0 L1136.0 709.8 L1142.0 711.4 L1148.0 713.0 L1154.0 714.5 L1160.0 716.1 L1166.0 717.7 L1172.0 719.5 L1178.0 721.4 L1184.0 723.6 L1190.0 726.2 L1196.0 729.1 L1202.0 732.5 L1208.0 735.9 L1214.0 739.4 L1220.0 742.7 L1226.0 745.7 L1232.0 748.3 L1238.0 750.3 L1240.0 750.8 L1240 830 L488 830 Z" fill="#9f6739" fill-opacity="0.37" filter="url(#blur5)"/>
<path d="M494.0 687.5 L500.0 677.2 L506.0 671.8 L512.0 667.8 L518.0 664.7 L524.0 662.7 L530.0 661.3 L536.0 660.1 L542.0 658.9 L548.0 657.9 L554.0 657.1 L560.0 656.4 L566.0 655.9 L572.0 655.4 L578.0 655.0 L584.0 654.6 L590.0 654.2 L596.0 653.8 L602.0 653.3 L608.0 653.0 L614.0 652.7 L620.0 652.4 L626.0 652.0 L632.0 651.6 L638.0 651.0 L644.0 650.3 L650.0 649.4 L656.0 648.3 L662.0 647.1 L668.0 645.7 L674.0 644.2 L680.0 642.4 L686.0 640.6 L692.0 638.6 L698.0 636.6 L704.0 634.3 L710.0 631.8 L716.0 629.1 L722.0 626.2 L728.0 623.1 L734.0 620.0 L740.0 616.8 L746.0 613.5 L752.0 609.9 L758.0 605.9 L764.0 601.6 L770.0 597.3 L776.0 592.9 L782.0 588.3 L788.0 583.7 L794.0 578.8 L800.0 574.0 L806.0 569.8 L812.0 565.8 L818.0 562.3 L824.0 559.1 L830.0 556.0 L836.0 552.9 L842.0 549.9 L848.0 547.2 L854.0 544.7 L860.0 542.5 L860.0 551.5 L854.0 553.7 L848.0 556.2 L842.0 559.3 L836.0 563.1 L830.0 567.2 L824.0 571.4 L818.0 576.0 L812.0 581.0 L806.0 586.4 L800.0 592.1 L794.0 598.4 L788.0 604.7 L782.0 610.6 L776.0 616.5 L770.0 622.1 L764.0 627.5 L758.0 632.8 L752.0 637.7 L746.0 642.3 L740.0 646.5 L734.0 650.6 L728.0 654.6 L722.0 658.3 L716.0 661.9 L710.0 665.3 L704.0 668.5 L698.0 671.0 L692.0 672.1 L686.0 673.3 L680.0 674.4 L674.0 675.6 L668.0 676.6 L662.0 677.6 L656.0 678.5 L650.0 679.3 L644.0 680.0 L638.0 680.5 L632.0 681.0 L626.0 681.3 L620.0 681.6 L614.0 681.8 L608.0 682.0 L602.0 682.2 L596.0 682.4 L590.0 682.6 L584.0 682.8 L578.0 683.0 L572.0 683.3 L566.0 683.6 L560.0 684.0 L554.0 684.4 L548.0 684.9 L542.0 685.5 L536.0 686.3 L530.0 687.2 L524.0 688.3 L518.0 689.9 L512.0 692.2 L506.0 695.2 L500.0 698.8 L494.0 704.3 Z" fill="#ebc497" fill-opacity="0.42" filter="url(#blur3)"/>
<rect x="490" y="530" width="830" height="290" fill="url(#shade)"/></g>
<path d="M1235.5 811 L1237.5 758 Q1239 740 1254 735.5 L1302 727 Q1316 729.5 1317.5 746.7 L1317.5 799.4 L1298 803.6 L1300.2 768 Q1299 742 1280 741 Q1259 744 1257.8 770 Q1257.6 790 1263 801 L1264.7 807 Z" fill="#b9773b"/>
<path d="M1298 803.6 L1300.2 768 Q1299 742 1280 741 Q1259 744 1257.8 770 Q1257.6 790 1263 801 L1264.7 801.5 Z" fill="#d9aa76"/>
<clipPath id="tunclip"><path d="M1298 803.6 L1300.2 768 Q1299 742 1280 741 Q1259 744 1257.8 770 Q1257.6 790 1263 801 L1264.7 801.5 Z"/></clipPath>
<g clip-path="url(#tunclip)" fill="none" stroke="#ad6d35" stroke-width="1.1"><path d="M1262.5 804 C1260.2 775 1262.8 747.9 1282.1 742.6 S1299.6 751.0 1300.4 770.0"/><path d="M1266.2 804 C1264.0 775 1266.5 748.8 1283.7 743.6 S1299.6 752.0 1300.4 772.0"/><path d="M1269.9 804 C1267.8 775 1270.2 749.7 1285.3 744.6 S1299.6 753.0 1300.4 774.0"/><path d="M1273.6 804 C1271.6 775 1273.9 750.6 1286.9 745.6 S1299.6 754.0 1300.4 776.0"/><path d="M1277.3 804 C1275.4 775 1277.6 751.5 1288.5 746.6 S1299.6 755.0 1300.4 778.0"/><path d="M1281.0 804 C1279.2 775 1281.3 752.4 1290.1 747.6 S1299.6 756.0 1300.4 780.0"/><path d="M1284.7 804 C1283.0 775 1285.0 753.3 1291.7 748.6 S1299.6 757.0 1300.4 782.0"/><path d="M1288.4 804 C1286.8 775 1288.7 754.2 1293.3 749.6 S1299.6 758.0 1300.4 784.0"/><path d="M1292.1 804 C1290.6 775 1292.4 755.1 1294.9 750.6 S1299.6 759.0 1300.4 786.0"/><path d="M1295.8 804 C1294.4 775 1296.1 756.0 1296.5 751.6 S1299.6 760.0 1300.4 788.0"/></g>
<path d="M1263.4 801 L1298.1 803.7 L1298.1 813 L1265 813 L1264.9 807.2 Z" fill="#fff"/>
</g>
</svg>
<svg style="left:64.5px;top:198px" width="115" height="24" viewBox="0 0 115 24"><path d="M0 0 H113.8 V19 Q113.8 23 109.8 23 H0 Z" fill="#8aa1ea"/><path d="M100.300 2.600 V21.400" stroke="#4a5690" stroke-width="1.3"/><path d="M102.200 8.700 H110.900 L106.500 13.200 Z" fill="#1c1c2c"/></svg>
<span class="t" style="left:74.6px;top:201.8px;font-size:14.60px;line-height:14.60px;letter-spacing:-0.198px;color:#17192a;font-weight:bold;">Perspective</span>
<!-- part_right -->
<span class="t" style="left:1729.8px;top:202.6px;font-size:15.10px;line-height:15.10px;letter-spacing:-0.093px;color:#444;">Properties: View properties</span>
<div class="b" style="left:1727.0px;top:250.4px;width:191.5px;height:722.0px;border:1.2px solid #d3d9e8;"></div>
<div class="b" style="left:1727.0px;top:222.4px;width:26.6px;height:29.6px;background:#ecedf1;border:1.2px solid #d3d9e8;border-bottom:none;"></div>
<svg style="left:1720px;top:196px" width="200" height="100" viewBox="1720 196 200 100">
<defs>
<radialGradient id="rBlue" cx="0.38" cy="0.3" r="0.8"><stop offset="0" stop-color="#b9cdff"/><stop offset="0.35" stop-color="#3a66d8"/><stop offset="1" stop-color="#06124a"/></radialGradient>
<linearGradient id="rFold" x1="0" y1="0" x2="0" y2="1"><stop offset="0" stop-color="#fff2a8"/><stop offset="1" stop-color="#f2b211"/></linearGradient>
<linearGradient id="rHelp" x1="0" y1="0" x2="0" y2="1"><stop offset="0" stop-color="#5a78d8"/><stop offset="1" stop-color="#2238a8"/></linearGradient>
</defs>
<path d="M1737.83 228.70 A8.70 8.70 0 0 1 1739.68 228.86 L1738.87 232.98 A4.50 4.50 0 0 0 1737.91 232.90 Z" fill="hsl(37,88%,52%)"/><path d="M1739.34 228.80 A8.70 8.70 0 0 1 1741.14 229.29 L1739.62 233.20 A4.50 4.50 0 0 0 1738.69 232.95 Z" fill="hsl(47,88%,52%)"/><path d="M1740.81 229.17 A8.70 8.70 0 0 1 1742.50 229.95 L1740.33 233.55 A4.50 4.50 0 0 0 1739.45 233.14 Z" fill="hsl(57,88%,52%)"/><path d="M1742.20 229.78 A8.70 8.70 0 0 1 1743.72 230.85 L1740.96 234.01 A4.50 4.50 0 0 0 1740.17 233.46 Z" fill="hsl(67,88%,52%)"/><path d="M1743.46 230.62 A8.70 8.70 0 0 1 1744.78 231.94 L1741.50 234.58 A4.50 4.50 0 0 0 1740.82 233.90 Z" fill="hsl(77,88%,52%)"/><path d="M1744.55 231.68 A8.70 8.70 0 0 1 1745.62 233.20 L1741.94 235.23 A4.50 4.50 0 0 0 1741.39 234.44 Z" fill="hsl(87,88%,52%)"/><path d="M1745.45 232.90 A8.70 8.70 0 0 1 1746.23 234.59 L1742.26 235.95 A4.50 4.50 0 0 0 1741.85 235.07 Z" fill="hsl(97,88%,52%)"/><path d="M1746.11 234.26 A8.70 8.70 0 0 1 1746.60 236.06 L1742.45 236.71 A4.50 4.50 0 0 0 1742.20 235.78 Z" fill="hsl(107,88%,52%)"/><path d="M1746.54 235.72 A8.70 8.70 0 0 1 1746.70 237.57 L1742.50 237.49 A4.50 4.50 0 0 0 1742.42 236.53 Z" fill="hsl(117,88%,52%)"/><path d="M1746.70 237.23 A8.70 8.70 0 0 1 1746.54 239.08 L1742.42 238.27 A4.50 4.50 0 0 0 1742.50 237.31 Z" fill="hsl(127,88%,52%)"/><path d="M1746.60 238.74 A8.70 8.70 0 0 1 1746.11 240.54 L1742.20 239.02 A4.50 4.50 0 0 0 1742.45 238.09 Z" fill="hsl(137,88%,52%)"/><path d="M1746.23 240.21 A8.70 8.70 0 0 1 1745.45 241.90 L1741.85 239.73 A4.50 4.50 0 0 0 1742.26 238.85 Z" fill="hsl(147,88%,52%)"/><path d="M1745.62 241.60 A8.70 8.70 0 0 1 1744.55 243.12 L1741.39 240.36 A4.50 4.50 0 0 0 1741.94 239.57 Z" fill="hsl(157,88%,52%)"/><path d="M1744.78 242.86 A8.70 8.70 0 0 1 1743.46 244.18 L1740.82 240.90 A4.50 4.50 0 0 0 1741.50 240.22 Z" fill="hsl(167,88%,52%)"/><path d="M1743.72 243.95 A8.70 8.70 0 0 1 1742.20 245.02 L1740.17 241.34 A4.50 4.50 0 0 0 1740.96 240.79 Z" fill="hsl(177,88%,52%)"/><path d="M1742.50 244.85 A8.70 8.70 0 0 1 1740.81 245.63 L1739.45 241.66 A4.50 4.50 0 0 0 1740.33 241.25 Z" fill="hsl(187,88%,52%)"/><path d="M1741.14 245.51 A8.70 8.70 0 0 1 1739.34 246.00 L1738.69 241.85 A4.50 4.50 0 0 0 1739.62 241.60 Z" fill="hsl(197,88%,52%)"/><path d="M1739.68 245.94 A8.70 8.70 0 0 1 1737.83 246.10 L1737.91 241.90 A4.50 4.50 0 0 0 1738.87 241.82 Z" fill="hsl(207,88%,52%)"/><path d="M1738.17 246.10 A8.70 8.70 0 0 1 1736.32 245.94 L1737.13 241.82 A4.50 4.50 0 0 0 1738.09 241.90 Z" fill="hsl(217,88%,52%)"/><path d="M1736.66 246.00 A8.70 8.70 0 0 1 1734.86 245.51 L1736.38 241.60 A4.50 4.50 0 0 0 1737.31 241.85 Z" fill="hsl(227,88%,52%)"/><path d="M1735.19 245.63 A8.70 8.70 0 0 1 1733.50 244.85 L1735.67 241.25 A4.50 4.50 0 0 0 1736.55 241.66 Z" fill="hsl(237,88%,52%)"/><path d="M1733.80 245.02 A8.70 8.70 0 0 1 1732.28 243.95 L1735.04 240.79 A4.50 4.50 0 0 0 1735.83 241.34 Z" fill="hsl(247,88%,52%)"/><path d="M1732.54 244.18 A8.70 8.70 0 0 1 1731.22 242.86 L1734.50 240.22 A4.50 4.50 0 0 0 1735.18 240.90 Z" fill="hsl(257,88%,52%)"/><path d="M1731.45 243.12 A8.70 8.70 0 0 1 1730.38 241.60 L1734.06 239.57 A4.50 4.50 0 0 0 1734.61 240.36 Z" fill="hsl(267,88%,52%)"/><path d="M1730.55 241.90 A8.70 8.70 0 0 1 1729.77 240.21 L1733.74 238.85 A4.50 4.50 0 0 0 1734.15 239.73 Z" fill="hsl(277,88%,52%)"/><path d="M1729.89 240.54 A8.70 8.70 0 0 1 1729.40 238.74 L1733.55 238.09 A4.50 4.50 0 0 0 1733.80 239.02 Z" fill="hsl(287,88%,52%)"/><path d="M1729.46 239.08 A8.70 8.70 0 0 1 1729.30 237.23 L1733.50 237.31 A4.50 4.50 0 0 0 1733.58 238.27 Z" fill="hsl(297,88%,52%)"/><path d="M1729.30 237.57 A8.70 8.70 0 0 1 1729.46 235.72 L1733.58 236.53 A4.50 4.50 0 0 0 1733.50 237.49 Z" fill="hsl(307,88%,52%)"/><path d="M1729.40 236.06 A8.70 8.70 0 0 1 1729.89 234.26 L1733.80 235.78 A4.50 4.50 0 0 0 1733.55 236.71 Z" fill="hsl(317,88%,52%)"/><path d="M1729.77 234.59 A8.70 8.70 0 0 1 1730.55 232.90 L1734.15 235.07 A4.50 4.50 0 0 0 1733.74 235.95 Z" fill="hsl(327,88%,52%)"/><path d="M1730.38 233.20 A8.70 8.70 0 0 1 1731.45 231.68 L1734.61 234.44 A4.50 4.50 0 0 0 1734.06 235.23 Z" fill="hsl(337,88%,52%)"/><path d="M1731.22 231.94 A8.70 8.70 0 0 1 1732.54 230.62 L1735.18 233.90 A4.50 4.50 0 0 0 1734.50 234.58 Z" fill="hsl(347,88%,52%)"/><path d="M1732.28 230.85 A8.70 8.70 0 0 1 1733.80 229.78 L1735.83 233.46 A4.50 4.50 0 0 0 1735.04 234.01 Z" fill="hsl(357,88%,52%)"/><path d="M1733.50 229.95 A8.70 8.70 0 0 1 1735.19 229.17 L1736.55 233.14 A4.50 4.50 0 0 0 1735.67 233.55 Z" fill="hsl(7,88%,52%)"/><path d="M1734.86 229.29 A8.70 8.70 0 0 1 1736.66 228.80 L1737.31 232.95 A4.50 4.50 0 0 0 1736.38 233.20 Z" fill="hsl(17,88%,52%)"/><path d="M1736.32 228.86 A8.70 8.70 0 0 1 1738.17 228.70 L1738.09 232.90 A4.50 4.50 0 0 0 1737.13 232.98 Z" fill="hsl(27,88%,52%)"/><circle cx="1738.00" cy="237.40" r="4.50" fill="#fff"/><circle cx="1738.00" cy="237.40" r="8.70" fill="none" stroke="#2a2040" stroke-opacity=".4" stroke-width="0.8"/>
<path d="M1755.6 229.4 L1762 228.2 L1774.8 233 L1774 242.6 L1765.4 246.8 L1756.600 240 Z" fill="#1f2a63"/><path d="M1756.400 229.800 L1762 228.800 L1774 233.200 L1765.400 237.200 Z" fill="#f0541c"/><path d="M1756.600 232 L1765.400 239 L1774 235 V237.200 L1765.400 241.400 L1756.800 234.400 Z" fill="#f37a3c"/><path d="M1756.800 235.200 L1765.400 242 L1773.800 237.800 V239.600 L1765.400 243.800 L1757 237 Z" fill="#fff"/><path d="M1757 237.800 L1765.400 244.400 L1773.600 240.400 V242 L1765.400 246 L1757.200 239.600Z" fill="#3d66d6"/>
<circle cx="1791.5" cy="239" r="8.2" fill="url(#rBlue)"/><ellipse cx="1788.6" cy="234.4" rx="3" ry="1.8" fill="#fff" fill-opacity=".7" transform="rotate(-25 1788.6 234.4)"/><path d="M1792 232 L1796 229 H1801 V227.400 L1803.800 230.200 L1801 233 V231.400 H1797 L1794 233.600 Z" fill="#e8e8e8" stroke="#222" stroke-width="0.8"/>
<path d="M1813.4 242 L1822.600 231.600 L1826.400 229.600 L1827.400 231.400 L1825.400 235 L1816.400 245.400 Q1813 246.400 1813.400 242 Z" fill="#f4f4f4" stroke="#444" stroke-width="1"/><path d="M1820.800 233.800 L1823.600 230.800 L1826 233.400 L1823.400 236.400 Z" fill="#f26a1c"/>
<path d="M1838.6 243 V231.800 H1844 L1846 233.800 H1853 V236" fill="#e7b934" stroke="#3a2c05" stroke-width="1.1" stroke-linejoin="round"/><path d="M1838.600 243 L1842.400 236 H1856 L1852.200 243 Z" fill="url(#rFold)" stroke="#3a2c05" stroke-width="1.1" stroke-linejoin="round"/>
<rect x="1867" y="229" width="17.2" height="16.8" fill="url(#rHelp)" stroke="#555" stroke-width="1.1"/><rect x="1867.600" y="229.600" width="16" height="2.400" fill="#1c2a7a"/><circle cx="1875.600" cy="239.400" r="5.800" fill="#4a68d0" stroke="#9ab0f0" stroke-width="0.6"/><text x="1875.600" y="243.600" text-anchor="middle" font-family="Liberation Serif, serif" font-weight="bold" font-size="11" fill="#fff">?</text>
<g transform="translate(1909.4 239.3) scale(0.86)" fill="none" stroke="#d3d7e4" stroke-width="1.8"><circle r="2.800"/><path d="M-1.600 -8.800 h3.200 l.7 2.400 l2 .9 l2.200 -1.300 l2.300 2.300 l-1.300 2.200 l.9 2 l2.400 .7 v3.200 l-2.400 .7 l-.9 2 l1.300 2.200 l-2.300 2.300 l-2.200 -1.300 l-2 .9 l-.7 2.400 h-3.200 l-.7 -2.400 l-2 -.9 l-2.200 1.300 l-2.300 -2.300 l1.300 -2.200 l-.9 -2 l-2.400 -.7 v-3.200 l2.400 -.7 l.9 -2 l-1.300 -2.200 l2.300 -2.300 l2.200 1.300 l2 -.9 z" transform="translate(0 0.8)"/></g>
<rect x="1734.6" y="255" width="34.4" height="33.800" fill="#a9b8ee"/>
<path d="M1739.600 266.600 Q1739.600 264.800 1741.400 264.800 H1745.600 L1747.400 261.600 H1755.400 L1757 264.800 H1762.800 Q1764.600 264.800 1764.600 266.600 V278.600 Q1764.600 280.400 1762.800 280.400 H1741.400 Q1739.600 280.400 1739.600 278.600 Z" fill="#1d1d1d"/><circle cx="1752.200" cy="272.200" r="5.800" fill="#3a3a3a" stroke="#9a9a9a" stroke-width="1.1"/><circle cx="1752.200" cy="272.200" r="3.200" fill="#0f2a1c"/><circle cx="1753.400" cy="271" r="1.100" fill="#5fae7a"/><rect x="1741.400" y="262.800" width="3" height="1.800" fill="#1d1d1d"/>
<ellipse cx="1789" cy="283.600" rx="8" ry="1.800" fill="#000" fill-opacity=".25"/><circle cx="1801.700" cy="261" r="3" fill="url(#rBlue)"/><circle cx="1795.700" cy="266.800" r="5" fill="url(#rBlue)"/><circle cx="1786.700" cy="275.900" r="7.600" fill="url(#rBlue)"/><ellipse cx="1784" cy="272" rx="2.600" ry="1.600" fill="#fff" fill-opacity=".7" transform="rotate(-30 1784 272)"/>
<rect x="1817" y="258.600" width="29" height="25.600" fill="#9fd4ea" stroke="#6e6e6e" stroke-width="1.800"/><rect x="1822.400" y="263.600" width="18.400" height="15.400" fill="#fff" stroke="#e0343a" stroke-width="1.300"/>
</svg>
<span class="t" style="left:1736.8px;top:308.4px;font-size:17.60px;line-height:17.60px;letter-spacing:0.491px;color:#333;">Viewport</span>
<div class="b" style="left:1736.5px;top:331.6px;width:181.5px;height:1.2px;background:#dfe2eb;"></div>
<div class="b" style="left:1827.0px;top:332.7px;width:89.5px;height:24.2px;background:#fff;"></div>
<div class="b" style="left:1756.8px;top:357.5px;width:161.2px;height:1.1px;background:#dfe2eb;"></div>
<span class="t" style="left:1761.2px;top:338.5px;font-size:15.10px;line-height:15.10px;letter-spacing:0.258px;color:#222;">Title</span>
<span class="t" style="left:1830.1px;top:338.5px;font-size:15.10px;line-height:15.10px;letter-spacing:-0.479px;color:#111;">Perspective</span>
<div class="b" style="left:1827.0px;top:358.7px;width:89.5px;height:24.2px;background:#fff;"></div>
<div class="b" style="left:1756.8px;top:383.5px;width:161.2px;height:1.1px;background:#dfe2eb;"></div>
<span class="t" style="left:1761.2px;top:364.5px;font-size:15.10px;line-height:15.10px;letter-spacing:0.400px;color:#7a7a7a;">Width</span>
<span class="t" style="left:1830.1px;top:364.5px;font-size:15.10px;line-height:15.10px;letter-spacing:-0.498px;color:#111;">1654</span>
<div class="b" style="left:1827.0px;top:384.7px;width:89.5px;height:24.2px;background:#fff;"></div>
<div class="b" style="left:1756.8px;top:409.5px;width:161.2px;height:1.1px;background:#dfe2eb;"></div>
<span class="t" style="left:1761.2px;top:390.5px;font-size:15.10px;line-height:15.10px;letter-spacing:0.350px;color:#7a7a7a;">Height</span>
<span class="t" style="left:1830.1px;top:390.5px;font-size:15.10px;line-height:15.10px;letter-spacing:-0.547px;color:#111;">749</span>
<div class="b" style="left:1827.0px;top:410.7px;width:89.5px;height:24.2px;background:#fff;"></div>
<div class="b" style="left:1756.8px;top:435.5px;width:161.2px;height:1.1px;background:#dfe2eb;"></div>
<span class="t" style="left:1761.2px;top:416.5px;font-size:15.10px;line-height:15.10px;letter-spacing:-0.364px;color:#222;">Projecti...</span>
<span class="t" style="left:1828.8px;top:417.2px;font-size:14.26px;line-height:14.26px;letter-spacing:-0.499px;color:#111;">Perspec...</span>
<div class="b" style="left:1892.6px;top:412.4px;width:23.0px;height:22.8px;background:#dddddd;border:1px solid #bdbdbd;"></div>
<svg style="left:1897px;top:418px" width="14" height="10" viewBox="0 0 14 10"><path d="M2.4 2.4 L7 7 L11.600 2.400" fill="none" stroke="#333" stroke-width="1.3"/></svg>
<div class="b" style="left:1756.8px;top:461.5px;width:161.2px;height:1.1px;background:#dfe2eb;"></div>
<span class="t" style="left:1761.2px;top:442.5px;font-size:15.10px;line-height:15.10px;letter-spacing:-0.379px;color:#222;">Locked</span>
<svg style="left:1829.2px;top:441.2px" width="18" height="18" viewBox="0 0 18 18"><rect x="0.7" y="0.7" width="15.2" height="15.2" fill="#fff" stroke="#4a4a4a" stroke-width="1.3"/></svg>
<span class="t" style="left:1736.8px;top:470.4px;font-size:17.60px;line-height:17.60px;letter-spacing:-0.340px;color:#333;">Camera</span>
<div class="b" style="left:1736.5px;top:493.6px;width:181.5px;height:1.2px;background:#dfe2eb;"></div>
<div class="b" style="left:1827.0px;top:494.7px;width:89.5px;height:24.2px;background:#fff;"></div>
<div class="b" style="left:1756.8px;top:519.5px;width:161.2px;height:1.1px;background:#dfe2eb;"></div>
<span class="t" style="left:1761.2px;top:501.4px;font-size:14.00px;line-height:14.00px;letter-spacing:-0.478px;color:#222;">Lens Le...</span>
<span class="t" style="left:1830.1px;top:500.5px;font-size:15.10px;line-height:15.10px;letter-spacing:-0.563px;color:#111;">50.0</span>
<div class="b" style="left:1827.0px;top:520.7px;width:89.5px;height:24.2px;background:#fff;"></div>
<div class="b" style="left:1756.8px;top:545.5px;width:161.2px;height:1.1px;background:#dfe2eb;"></div>
<span class="t" style="left:1761.2px;top:526.5px;font-size:15.10px;line-height:15.10px;letter-spacing:0.108px;color:#222;">Rotation</span>
<span class="t" style="left:1830.1px;top:526.5px;font-size:15.10px;line-height:15.10px;letter-spacing:-0.946px;color:#111;">0.0</span>
<div class="b" style="left:1827.0px;top:546.7px;width:89.5px;height:24.2px;background:#fff;"></div>
<div class="b" style="left:1756.8px;top:571.5px;width:161.2px;height:1.1px;background:#dfe2eb;"></div>
<span class="t" style="left:1761.2px;top:552.5px;font-size:15.10px;line-height:15.10px;letter-spacing:-0.445px;color:#222;">X Locati...</span>
<span class="t" style="left:1830.1px;top:552.5px;font-size:15.10px;line-height:15.10px;letter-spacing:-0.681px;color:#111;">523.891</span>
<div class="b" style="left:1827.0px;top:572.7px;width:89.5px;height:24.2px;background:#fff;"></div>
<div class="b" style="left:1756.8px;top:597.5px;width:161.2px;height:1.1px;background:#dfe2eb;"></div>
<span class="t" style="left:1761.2px;top:578.5px;font-size:15.10px;line-height:15.10px;letter-spacing:-0.417px;color:#222;">Y Locati...</span>
<span class="t" style="left:1830.1px;top:578.5px;font-size:15.10px;line-height:15.10px;letter-spacing:-0.402px;color:#111;">-212.972</span>
<div class="b" style="left:1827.0px;top:598.7px;width:89.5px;height:24.2px;background:#fff;"></div>
<div class="b" style="left:1756.8px;top:623.5px;width:161.2px;height:1.1px;background:#dfe2eb;"></div>
<span class="t" style="left:1761.2px;top:604.5px;font-size:15.10px;line-height:15.10px;letter-spacing:-0.360px;color:#222;">Z Locati...</span>
<span class="t" style="left:1830.1px;top:604.5px;font-size:15.10px;line-height:15.10px;letter-spacing:-0.617px;color:#111;">61.589</span>
<div class="b" style="left:1756.8px;top:649.5px;width:161.2px;height:1.1px;background:#dfe2eb;"></div>
<span class="t" style="left:1761.2px;top:630.5px;font-size:15.10px;line-height:15.10px;letter-spacing:-0.348px;color:#222;">Distanc...</span>
<span class="t" style="left:1830.1px;top:630.5px;font-size:15.10px;line-height:15.10px;letter-spacing:-0.617px;color:#111;">517.15</span>
<div class="b" style="left:1756.8px;top:675.5px;width:161.2px;height:1.1px;background:#dfe2eb;"></div>
<span class="t" style="left:1761.2px;top:656.5px;font-size:15.10px;line-height:15.10px;letter-spacing:-0.013px;color:#222;">Location</span>
<div class="b" style="left:1827.6px;top:652.6px;width:88.2px;height:22.4px;background:#e1e1e1;border:1px solid #adadad;"></div><span class="t" style="left:1850.1px;top:656.8px;font-size:14.32px;line-height:14.32px;letter-spacing:-0.477px;color:#111;">Place...</span>
<span class="t" style="left:1736.8px;top:684.4px;font-size:17.60px;line-height:17.60px;letter-spacing:-0.103px;color:#333;">Target</span>
<div class="b" style="left:1736.5px;top:707.6px;width:181.5px;height:1.2px;background:#dfe2eb;"></div>
<div class="b" style="left:1827.0px;top:708.7px;width:89.5px;height:24.2px;background:#fff;"></div>
<div class="b" style="left:1756.8px;top:733.5px;width:161.2px;height:1.1px;background:#dfe2eb;"></div>
<span class="t" style="left:1761.2px;top:714.5px;font-size:15.10px;line-height:15.10px;letter-spacing:-0.166px;color:#222;">X Target</span>
<span class="t" style="left:1830.1px;top:714.5px;font-size:15.10px;line-height:15.10px;letter-spacing:-0.427px;color:#111;">115.273</span>
<div class="b" style="left:1827.0px;top:734.7px;width:89.5px;height:24.2px;background:#fff;"></div>
<div class="b" style="left:1756.8px;top:759.5px;width:161.2px;height:1.1px;background:#dfe2eb;"></div>
<span class="t" style="left:1761.2px;top:740.5px;font-size:15.10px;line-height:15.10px;letter-spacing:-0.299px;color:#222;">Y Target</span>
<span class="t" style="left:1830.1px;top:740.5px;font-size:15.10px;line-height:15.10px;letter-spacing:-0.681px;color:#111;">103.994</span>
<div class="b" style="left:1827.0px;top:760.7px;width:89.5px;height:24.2px;background:#fff;"></div>
<div class="b" style="left:1756.8px;top:785.5px;width:161.2px;height:1.1px;background:#dfe2eb;"></div>
<span class="t" style="left:1761.2px;top:766.5px;font-size:15.10px;line-height:15.10px;letter-spacing:-0.216px;color:#222;">Z Target</span>
<span class="t" style="left:1830.1px;top:766.5px;font-size:15.10px;line-height:15.10px;letter-spacing:-0.617px;color:#111;">64.295</span>
<div class="b" style="left:1756.8px;top:811.5px;width:161.2px;height:1.1px;background:#dfe2eb;"></div>
<span class="t" style="left:1761.2px;top:792.5px;font-size:15.10px;line-height:15.10px;letter-spacing:-0.013px;color:#222;">Location</span>
<div class="b" style="left:1827.6px;top:788.6px;width:88.2px;height:22.4px;background:#e1e1e1;border:1px solid #adadad;"></div><span class="t" style="left:1850.1px;top:792.8px;font-size:14.32px;line-height:14.32px;letter-spacing:-0.477px;color:#111;">Place...</span>
<span class="t" style="left:1736.8px;top:820.4px;font-size:17.60px;line-height:17.60px;letter-spacing:0.227px;color:#333;">Wallpaper</span>
<div class="b" style="left:1736.5px;top:843.6px;width:181.5px;height:1.2px;background:#dfe2eb;"></div>
<div class="b" style="left:1827.0px;top:844.7px;width:89.5px;height:24.2px;background:#fff;"></div>
<div class="b" style="left:1756.8px;top:869.5px;width:161.2px;height:1.1px;background:#dfe2eb;"></div>
<span class="t" style="left:1761.2px;top:850.5px;font-size:15.10px;line-height:15.10px;letter-spacing:-0.329px;color:#222;">Filename</span>
<span class="t" style="left:1827.8px;top:850.5px;font-size:15.10px;line-height:15.10px;letter-spacing:-0.090px;color:#111;">(none)</span>
<div class="b" style="left:1893.0px;top:846.0px;width:23.0px;height:23.0px;background:#e1e1e1;border:1px solid #adadad;"></div>
<span class="t" style="left:1898.3px;top:851.6px;font-size:14.00px;line-height:14.00px;letter-spacing:-0.134px;color:#111;">...</span>
<div class="b" style="left:1756.8px;top:895.5px;width:161.2px;height:1.1px;background:#dfe2eb;"></div>
<span class="t" style="left:1761.2px;top:876.5px;font-size:15.10px;line-height:15.10px;letter-spacing:-0.591px;color:#222;">Show</span>
<svg style="left:1829.2px;top:875.6px" width="18" height="18" viewBox="0 0 18 18"><rect x="0.7" y="0.7" width="15.2" height="15.2" fill="#fff" stroke="#4a4a4a" stroke-width="1.3"/><path d="M3.6 8.6 L7 12 L13 4.6" fill="none" stroke="#222" stroke-width="1.4"/></svg>
<div class="b" style="left:1756.8px;top:921.5px;width:161.2px;height:1.1px;background:#dfe2eb;"></div>
<span class="t" style="left:1761.2px;top:902.5px;font-size:15.10px;line-height:15.10px;letter-spacing:-0.674px;color:#222;">Gray</span>
<svg style="left:1829.2px;top:901.4px" width="18" height="18" viewBox="0 0 18 18"><rect x="0.7" y="0.7" width="15.2" height="15.2" fill="#fff" stroke="#4a4a4a" stroke-width="1.3"/><path d="M3.6 8.6 L7 12 L13 4.6" fill="none" stroke="#222" stroke-width="1.4"/></svg>
<div class="b" style="left:1728.2px;top:950.7px;width:189.0px;height:20.6px;background:#f0f0f0;"></div>
<div class="b" style="left:1749.7px;top:950.7px;width:139.3px;height:20.6px;background:#cdcdcd;"></div>
<svg style="left:1728px;top:950px" width="190" height="22" viewBox="0 0 190 22" fill="none" stroke="#8a8a8a" stroke-width="1.5"><path d="M13.6 6.6 L9.6 10.600 L13.600 14.600 M178.400 6.600 L182.400 10.600 L178.400 14.600"/></svg>
<!-- part_bottom -->
<svg style="left:60px;top:945px" width="300" height="32" viewBox="60 945 300 32"><path d="M64.6 947.5 V963 L73.600 973.300 H155.800 Q158.300 973.300 158.300 970.800 V947.500" fill="#ecedf1" stroke="#d3d9e8" stroke-width="1.2"/>
<path d="M341 958 v10 M336 963 h10" stroke="#b0b0b0" stroke-width="3.400"/><path d="M341 959 v8 M337 963 h8" stroke="#ecedf1" stroke-width="1.400"/></svg>
<span class="t" style="left:76.3px;top:954.2px;font-size:15.10px;line-height:15.10px;letter-spacing:-0.329px;color:#444;">Perspective</span>
<span class="t" style="left:172.1px;top:954.2px;font-size:15.10px;line-height:15.10px;letter-spacing:1.377px;color:#444;">Top</span>
<span class="t" style="left:221.3px;top:954.2px;font-size:15.10px;line-height:15.10px;letter-spacing:-0.011px;color:#444;">Front</span>
<span class="t" style="left:275.8px;top:954.2px;font-size:15.10px;line-height:15.10px;letter-spacing:0.412px;color:#444;">Right</span>
<div class="b" style="left:3.5px;top:984.0px;width:4.0px;height:24.0px;background:#dfe2ec;"></div>
<svg style="left:0;top:980px" width="800" height="30" viewBox="0 980 800 30"><rect x="12.2" y="988.0" width="14.7" height="14.7" fill="#fff" stroke="#555" stroke-width="1.3"/><rect x="65.2" y="988.0" width="14.7" height="14.7" fill="#fff" stroke="#555" stroke-width="1.3"/><rect x="125.5" y="988.0" width="14.7" height="14.7" fill="#fff" stroke="#555" stroke-width="1.3"/><path d="M127.8 995.0 l3.6 3.400 l6.400 -6.600" fill="none" stroke="#222" stroke-width="1.4"/><rect x="187.2" y="988.0" width="14.7" height="14.7" fill="#fff" stroke="#555" stroke-width="1.3"/><path d="M189.5 995.0 l3.6 3.400 l6.400 -6.600" fill="none" stroke="#222" stroke-width="1.4"/><rect x="241.2" y="988.0" width="14.7" height="14.7" fill="#fff" stroke="#555" stroke-width="1.3"/><rect x="293.9" y="988.0" width="14.7" height="14.7" fill="#fff" stroke="#555" stroke-width="1.3"/><rect x="339.1" y="988.0" width="14.7" height="14.7" fill="#fff" stroke="#555" stroke-width="1.3"/><rect x="397.1" y="988.0" width="14.7" height="14.7" fill="#fff" stroke="#555" stroke-width="1.3"/><rect x="449.1" y="988.0" width="14.7" height="14.7" fill="#fff" stroke="#555" stroke-width="1.3"/><rect x="513.1" y="988.0" width="14.7" height="14.7" fill="#fff" stroke="#555" stroke-width="1.3"/><rect x="572.1" y="988.0" width="14.7" height="14.7" fill="#fff" stroke="#555" stroke-width="1.3"/><rect x="643.1" y="989.2" width="11.3" height="11.3" fill="#e6e6e6" stroke="#c4c4c4" stroke-width="1.3"/><rect x="728.1" y="989.2" width="11.3" height="11.3" fill="#e6e6e6" stroke="#c4c4c4" stroke-width="1.3"/></svg>
<span class="t" style="left:31.1px;top:988.0px;font-size:15.10px;line-height:15.10px;letter-spacing:-0.984px;color:#3c3c3c;">End</span>
<span class="t" style="left:83.8px;top:988.0px;font-size:15.10px;line-height:15.10px;letter-spacing:-0.243px;color:#3c3c3c;">Near</span>
<span class="t" style="left:144.0px;top:988.0px;font-size:15.10px;line-height:15.10px;letter-spacing:-0.305px;color:#3c3c3c;">Point</span>
<span class="t" style="left:206.1px;top:988.0px;font-size:15.10px;line-height:15.10px;letter-spacing:0.734px;color:#3c3c3c;">Mid</span>
<span class="t" style="left:259.6px;top:988.0px;font-size:15.10px;line-height:15.10px;letter-spacing:-1.051px;color:#3c3c3c;">Cen</span>
<span class="t" style="left:312.3px;top:988.0px;font-size:15.10px;line-height:15.10px;letter-spacing:0.656px;color:#3c3c3c;">Int</span>
<span class="t" style="left:357.6px;top:988.0px;font-size:15.10px;line-height:15.10px;letter-spacing:-0.766px;color:#3c3c3c;">Perp</span>
<span class="t" style="left:415.8px;top:988.0px;font-size:15.10px;line-height:15.10px;letter-spacing:-0.973px;color:#3c3c3c;">Tan</span>
<span class="t" style="left:467.3px;top:988.0px;font-size:15.10px;line-height:15.10px;letter-spacing:-0.180px;color:#3c3c3c;">Quad</span>
<span class="t" style="left:531.3px;top:988.0px;font-size:15.10px;line-height:15.10px;letter-spacing:0.445px;color:#3c3c3c;">Knot</span>
<span class="t" style="left:590.3px;top:988.0px;font-size:15.10px;line-height:15.10px;letter-spacing:-0.082px;color:#3c3c3c;">Vertex</span>
<span class="t" style="left:660.3px;top:988.0px;font-size:15.10px;line-height:15.10px;letter-spacing:0.067px;color:#3c3c3c;">Project</span>
<span class="t" style="left:745.3px;top:988.0px;font-size:15.10px;line-height:15.10px;letter-spacing:0.090px;color:#3c3c3c;">Disable</span>
<div class="b" style="left:0.0px;top:1008.6px;width:1920.0px;height:1.2px;background:#d3d9e8;"></div>
<div class="b" style="left:0.0px;top:1009.8px;width:1920.0px;height:21.2px;background:#ecedf2;"></div>
<div class="b" style="left:891.5px;top:1010.0px;width:58.5px;height:21.0px;background:#d6ddf6;"></div>
<div class="b" style="left:274.9px;top:1010.0px;width:1.1px;height:21.0px;background:#d5dae8;"></div>
<div class="b" style="left:382.0px;top:1010.0px;width:1.1px;height:21.0px;background:#d5dae8;"></div>
<div class="b" style="left:489.5px;top:1010.0px;width:1.1px;height:21.0px;background:#d5dae8;"></div>
<div class="b" style="left:698.0px;top:1010.0px;width:1.1px;height:21.0px;background:#d5dae8;"></div>
<div class="b" style="left:779.5px;top:1010.0px;width:1.1px;height:21.0px;background:#d5dae8;"></div>
<div class="b" style="left:833.5px;top:1010.0px;width:1.1px;height:21.0px;background:#d5dae8;"></div>
<div class="b" style="left:891.0px;top:1010.0px;width:1.1px;height:21.0px;background:#d5dae8;"></div>
<div class="b" style="left:949.5px;top:1010.0px;width:1.1px;height:21.0px;background:#d5dae8;"></div>
<div class="b" style="left:1038.5px;top:1010.0px;width:1.1px;height:21.0px;background:#d5dae8;"></div>
<div class="b" style="left:1109.5px;top:1010.0px;width:1.1px;height:21.0px;background:#d5dae8;"></div>
<div class="b" style="left:1224.5px;top:1010.0px;width:1.1px;height:21.0px;background:#d5dae8;"></div>
<div class="b" style="left:1272.0px;top:1010.0px;width:1.1px;height:21.0px;background:#d5dae8;"></div>
<div class="b" style="left:1911.0px;top:1010.0px;width:1.1px;height:21.0px;background:#d5dae8;"></div>
<span class="t" style="left:193.6px;top:1013.7px;font-size:15.10px;line-height:15.10px;letter-spacing:-0.316px;color:#3c3c3c;">y 110.44</span>
<span class="t" style="left:324.8px;top:1013.7px;font-size:15.10px;line-height:15.10px;letter-spacing:0.150px;color:#3c3c3c;">z</span>
<span class="t" style="left:413.8px;top:1013.7px;font-size:15.10px;line-height:15.10px;letter-spacing:-0.150px;color:#3c3c3c;">Meters</span>
<div class="b" style="left:496.0px;top:1014.6px;width:13.0px;height:12.8px;background:#000;"></div>
<span class="t" style="left:512.3px;top:1013.7px;font-size:15.10px;line-height:15.10px;letter-spacing:0.176px;color:#3c3c3c;">Default</span>
<span class="t" style="left:706.3px;top:1013.7px;font-size:15.10px;line-height:15.10px;letter-spacing:-0.324px;color:#3c3c3c;">Grid Snap</span>
<span class="t" style="left:787.8px;top:1013.7px;font-size:15.10px;line-height:15.10px;letter-spacing:0.284px;color:#3c3c3c;">Ortho</span>
<span class="t" style="left:841.8px;top:1013.7px;font-size:15.10px;line-height:15.10px;letter-spacing:-0.350px;color:#3c3c3c;">Planar</span>
<span class="t" style="left:897.8px;top:1014.1px;font-size:14.60px;line-height:14.60px;letter-spacing:-0.258px;color:#111;font-weight:bold;">Osnap</span>
<span class="t" style="left:956.8px;top:1013.7px;font-size:15.10px;line-height:15.10px;letter-spacing:-0.452px;color:#3c3c3c;">SmartTrack</span>
<span class="t" style="left:1046.3px;top:1013.7px;font-size:15.10px;line-height:15.10px;letter-spacing:0.195px;color:#3c3c3c;">Gumball</span>
<span class="t" style="left:1118.8px;top:1013.7px;font-size:15.10px;line-height:15.10px;letter-spacing:-0.074px;color:#3c3c3c;">Record History</span>
<span class="t" style="left:1232.8px;top:1013.7px;font-size:15.10px;line-height:15.10px;letter-spacing:-0.031px;color:#3c3c3c;">Filter</span>
<span class="t" style="left:1274.8px;top:1013.7px;font-size:15.10px;line-height:15.10px;letter-spacing:-0.134px;color:#3c3c3c;">Available physical memory: 8314 MB</span>
<div class="b" style="left:7.6px;top:997.3px;width:182.0px;height:34.0px;background:#fff;box-shadow:-1px 0 0 #cfcfcf;"></div>
<svg style="left:8px;top:997px" width="182" height="34" viewBox="0 0 182 34" fill="none" stroke="#8c8c8c" stroke-width="1.1">
<rect x="29" y="14.200" width="9.400" height="9.400" rx="1"/><path d="M31.400 14.200 V12.800 a1 1 0 0 1 1 -1 H39.800 a1 1 0 0 1 1 1 V20.200 a1 1 0 0 1 -1 1 H38.400"/>
<rect x="87" y="12" width="11.400" height="11.400"/>
<path d="M145.600 11.600 L157.400 23.400 M157.400 11.600 L145.600 23.400"/></svg>
<!-- part_taskbar -->
<div class="b" style="left:0.0px;top:1031.0px;width:1920.0px;height:49.0px;background:#1f2021;"></div>
<div class="b" style="left:60.0px;top:1031.0px;width:429.3px;height:49.0px;background:#303132;border-top:1px solid #4a4a4a;border-left:1px solid #3a3a3a;"></div>
<span class="t" style="left:108.8px;top:1047.1px;font-size:18.40px;line-height:18.40px;letter-spacing:0.115px;color:#dadada;">Type here to search</span>
<span class="t" style="left:1524.8px;top:1048.3px;font-size:17.60px;line-height:17.60px;letter-spacing:-0.656px;color:#eeeeee;">62°F</span>
<span class="t" style="left:1731.8px;top:1049.6px;font-size:14.60px;line-height:14.60px;letter-spacing:-1.019px;color:#eeeeee;">ENG</span>
<span class="t" style="left:1783.3px;top:1036.7px;font-size:15.10px;line-height:15.10px;letter-spacing:-0.167px;color:#f2f2f2;">6:58 AM</span>
<span class="t" style="left:1773.8px;top:1059.7px;font-size:15.10px;line-height:15.10px;letter-spacing:-0.006px;color:#f2f2f2;">11/25/2021</span>
<div class="b" style="left:928.0px;top:1031.0px;width:51.0px;height:49.0px;background:#3e7a3c;"></div>
<div class="b" style="left:928.0px;top:1077.0px;width:51.0px;height:3.0px;background:#6fdc62;"></div>
<div class="b" style="left:1109.3px;top:1031.0px;width:61.2px;height:49.0px;background:#4d4e4f;"></div>
<div class="b" style="left:618.0px;top:1077.0px;width:51.0px;height:3.0px;background:#7bbdf0;"></div>
<div class="b" style="left:990.0px;top:1077.0px;width:51.0px;height:3.0px;background:#7bbdf0;"></div>
<div class="b" style="left:1109.3px;top:1077.0px;width:61.2px;height:3.0px;background:#7bbdf0;"></div>
<div class="b" style="left:1176.0px;top:1077.0px;width:51.0px;height:3.0px;background:#7bbdf0;"></div>
<div class="b" style="left:1238.0px;top:1077.0px;width:51.0px;height:3.0px;background:#7bbdf0;"></div>
<svg style="left:0;top:1031px" width="1920" height="49" viewBox="0 1031 1920 49">
<defs>
<linearGradient id="tCloud" x1="0" y1="0" x2="0" y2="1"><stop offset="0" stop-color="#ffffff"/><stop offset="1" stop-color="#9fd0f2"/></linearGradient>
<linearGradient id="tEdge" x1="0" y1="0" x2="1" y2="1"><stop offset="0" stop-color="#35c1f1"/><stop offset="0.5" stop-color="#1b8ad8"/><stop offset="1" stop-color="#0c59a4"/></linearGradient>
<linearGradient id="tEdge2" x1="0" y1="0" x2="1" y2="0"><stop offset="0" stop-color="#2fc48d"/><stop offset="1" stop-color="#6ee06a"/></linearGradient>
</defs>
<path d="M18.4 1048.4 L27.400 1047.100 V1054.900 H18.400 Z M28.600 1046.900 L40 1045.200 V1054.900 H28.600 Z M18.400 1056.100 H27.400 V1063.900 L18.400 1062.600 Z M28.600 1056.100 H40 V1065.800 L28.600 1064.100 Z" fill="#fff"/>
<circle cx="88.2" cy="1052.600" r="6.400" fill="none" stroke="#e6e6e6" stroke-width="1.700"/><path d="M83.600 1057.400 L75.800 1065.200" stroke="#e6e6e6" stroke-width="1.900"/>
<circle cx="519.3" cy="1055.700" r="8.300" fill="none" stroke="#fff" stroke-width="2.600"/>
<path d="M570.600 1047.600 H582.600 M570.600 1063.400 H582.600 M589.400 1046 V1049.600 M589.400 1061.400 V1065" stroke="#fff" stroke-width="1.500"/><rect x="570.600" y="1050.600" width="12" height="9.800" fill="none" stroke="#fff" stroke-width="1.500"/><rect x="588.600" y="1051.600" width="1.800" height="8" fill="#fff"/>
<path d="M629.600 1044.800 H640 L642.400 1047.400 H656.400 V1064.400 H629.600 Z" fill="#f5c74a"/><path d="M629.600 1049.600 H656.400 V1064.400 H629.600 Z" fill="#fcd868"/><path d="M634.400 1056 H651.600 V1064.400 H634.400 Z" fill="#3d95e0"/><path d="M637.400 1060 H648.600 V1064.400 H637.400Z" fill="#fcd868"/>
<rect x="690" y="1039.600" width="30" height="30" fill="#dff0f0"/><text x="705" y="1062" text-anchor="middle" font-family="Liberation Sans, sans-serif" font-weight="bold" font-size="24" fill="#1d9aa3">3</text><text x="711" y="1067.600" text-anchor="middle" font-family="Liberation Sans, sans-serif" font-weight="bold" font-size="5" fill="#157a82">MAX</text>
<rect x="752" y="1039.600" width="30" height="30" fill="#f2e9e9"/><text x="767" y="1065.400" text-anchor="middle" font-family="Liberation Sans, sans-serif" font-weight="bold" font-size="30" fill="#c4202b">A</text>
<rect x="814.600" y="1039.600" width="30" height="30" fill="#e8eef8"/><text x="830" y="1065.400" text-anchor="middle" font-family="Liberation Sans, sans-serif" font-weight="bold" font-size="30" fill="#2a63b8">R</text>
<rect x="877" y="1041.400" width="28.500" height="26.600" rx="3" fill="#001e36"/><text x="891.200" y="1060.400" text-anchor="middle" font-family="Liberation Sans, sans-serif" font-weight="bold" font-size="15" fill="#31a8ff">Ps</text>
<g transform="translate(953 1054.600)"><circle r="13" fill="#fff"/><path d="M0 0 L-11.260 -6.500 A13 13 0 0 1 11.260 -6.500 Z" fill="#e8453c"/><path d="M0 0 L11.260 -6.500 A13 13 0 0 1 0 13 Z" fill="#fbc116"/><path d="M0 0 L0 13 A13 13 0 0 1 -11.260 -6.500 Z" fill="#2da94f"/><circle r="6" fill="#fff"/><circle r="4.700" fill="#4a8af4"/></g>
<g transform="translate(1015.600 1054.600)"><circle r="13" fill="url(#tEdge)"/><path d="M-12.600 3 Q-10 -10 2 -12.600 Q12 -11 12.800 -1 Q8 -8 0 -6 Q-9 -3 -12.600 3Z" fill="url(#tEdge2)"/><path d="M-4 3 Q-3 -3 3 -3.600 Q9 -3 9.600 2 Q8 5.600 3 5 Q5 9 11 7.600 Q7 13 0 12.600 Q-5 10 -4 3Z" fill="#1f2021" fill-opacity=".85"/></g>
<rect x="1065.400" y="1041.600" width="24" height="27" rx="2" fill="#f2f2f2"/><rect x="1065.400" y="1052" width="24" height="13" fill="#d8342c"/><text x="1077.400" y="1061.600" text-anchor="middle" font-family="Liberation Sans, sans-serif" font-weight="bold" font-size="7.500" fill="#fff">PDF</text><path d="M1072 1043 q6 5 2 9 M1080 1043 q-5 4 -1 8" stroke="#d8342c" stroke-width="1.400" fill="none"/><circle cx="1087.600" cy="1043" r="3" fill="none" stroke="#8fb4e8" stroke-width="1.200"/>
<rect x="1124" y="1039.800" width="30.600" height="30" fill="#0c0c0c"/><path d="M1126 1069 L1127.400 1058 L1124.600 1053 L1130 1046 L1134 1047.600 L1136.600 1042.600 L1139.600 1049 L1143 1046 L1144 1055 L1149 1060 L1143.600 1062.600 L1141.600 1069.800 Z" fill="#fff"/><path d="M1131 1053.600 L1135.600 1052 L1138.600 1056.600 L1134 1059.600 Z M1127 1063 h6 l-1.600 4.600 h-5z" fill="#0c0c0c"/><text x="1150" y="1051.600" text-anchor="middle" font-family="Liberation Sans, sans-serif" font-size="10" fill="#fff">7</text>
<rect x="1196" y="1042" width="18" height="25" rx="1.500" fill="#f4f4f4"/><rect x="1188.600" y="1044.600" width="17" height="20" rx="1.500" fill="#d24a26"/><text x="1197.200" y="1060" text-anchor="middle" font-family="Liberation Sans, sans-serif" font-weight="bold" font-size="14" fill="#fff">P</text><path d="M1207.600 1050 h5 M1207.600 1054.600 h5 M1207.600 1059 h5" stroke="#d24a26" stroke-width="1.600"/>
<circle cx="1268.600" cy="1046" r="4" fill="#5b62c8"/><circle cx="1276" cy="1048.600" r="2.800" fill="#5b62c8"/><rect x="1262" y="1051" width="13" height="14" rx="3" fill="#6a72d8"/><rect x="1272" y="1052.600" width="8" height="11" rx="2.500" fill="#4a52b8"/><rect x="1251.600" y="1047.600" width="15.600" height="15.600" rx="2" fill="#4b53bc"/><text x="1259.400" y="1060" text-anchor="middle" font-family="Liberation Sans, sans-serif" font-weight="bold" font-size="11.500" fill="#fff">T</text><circle cx="1274.600" cy="1064.600" r="4.600" fill="#fff" stroke="#1f2021" stroke-width="1"/>
<path d="M1493 1063.600 Q1487 1063.600 1487 1058.600 Q1487 1054 1492 1053.600 Q1493.600 1046.400 1501 1046.400 Q1507.600 1046.400 1509.600 1052 Q1514.600 1052.600 1514.600 1058 Q1514.600 1063.600 1509 1063.600 Z" fill="url(#tCloud)"/>
<path d="M1582.400 1060 L1590 1052 L1597.600 1060" fill="none" stroke="#f0f0f0" stroke-width="1.500"/>
<rect x="1614.600" y="1051" width="8.600" height="8.600" rx="1.500" fill="none" stroke="#f0f0f0" stroke-width="1.300"/><path d="M1623.600 1054.200 L1627.400 1052 V1058.600 L1623.600 1056.400" fill="none" stroke="#f0f0f0" stroke-width="1.200"/><path d="M1615 1048.600 Q1620.600 1044.600 1626 1048.600 M1615 1062 Q1620.600 1066 1626 1062" fill="none" stroke="#f0f0f0" stroke-width="1.200"/>
<rect x="1643.600" y="1051.600" width="15.400" height="9.400" fill="none" stroke="#f0f0f0" stroke-width="1.300"/><rect x="1659.400" y="1054.400" width="1.600" height="3.800" fill="#f0f0f0"/><rect x="1645.400" y="1053.400" width="5.600" height="5.800" fill="#f0f0f0"/><path d="M1640 1049.600 h4 v2.600 h-1.200 v3 h-1.600 v-3 h-1.200z" fill="#f0f0f0"/>
<path d="M1669.600 1052.600 H1672.600 L1676.600 1048.600 V1062.400 L1672.600 1058.400 H1669.600 Z" fill="none" stroke="#f0f0f0" stroke-width="1.200" stroke-linejoin="round"/><path d="M1679.600 1052.600 Q1681.600 1055.600 1679.600 1058.400 M1682.600 1050 Q1686.400 1055.600 1682.600 1061 M1685.800 1047.600 Q1691 1055.600 1685.800 1063.400" fill="none" stroke="#f0f0f0" stroke-width="1.200"/>
<path d="M1703 1062.600 Q1703.600 1049.600 1717.600 1049" fill="none" stroke="#f0f0f0" stroke-width="1.400"/><path d="M1707.400 1062.600 Q1708 1054 1717.600 1053.400" fill="none" stroke="#bdbdbd" stroke-width="1.400"/><path d="M1711.800 1062.600 Q1712.400 1058.400 1717.600 1057.800" fill="none" stroke="#9a9a9a" stroke-width="1.400"/><circle cx="1716.600" cy="1062.200" r="1.500" fill="#f0f0f0"/>
<path d="M1868.600 1046.600 H1888.400 V1061.400 H1881.600 L1878.400 1064.600 L1875.400 1061.400 H1868.600 Z" fill="none" stroke="#f0f0f0" stroke-width="1.400" stroke-linejoin="round"/>
<path d="M1913 1031 V1080" stroke="#5a5a5a" stroke-width="1"/>
</svg>
</div>
</body></html>
